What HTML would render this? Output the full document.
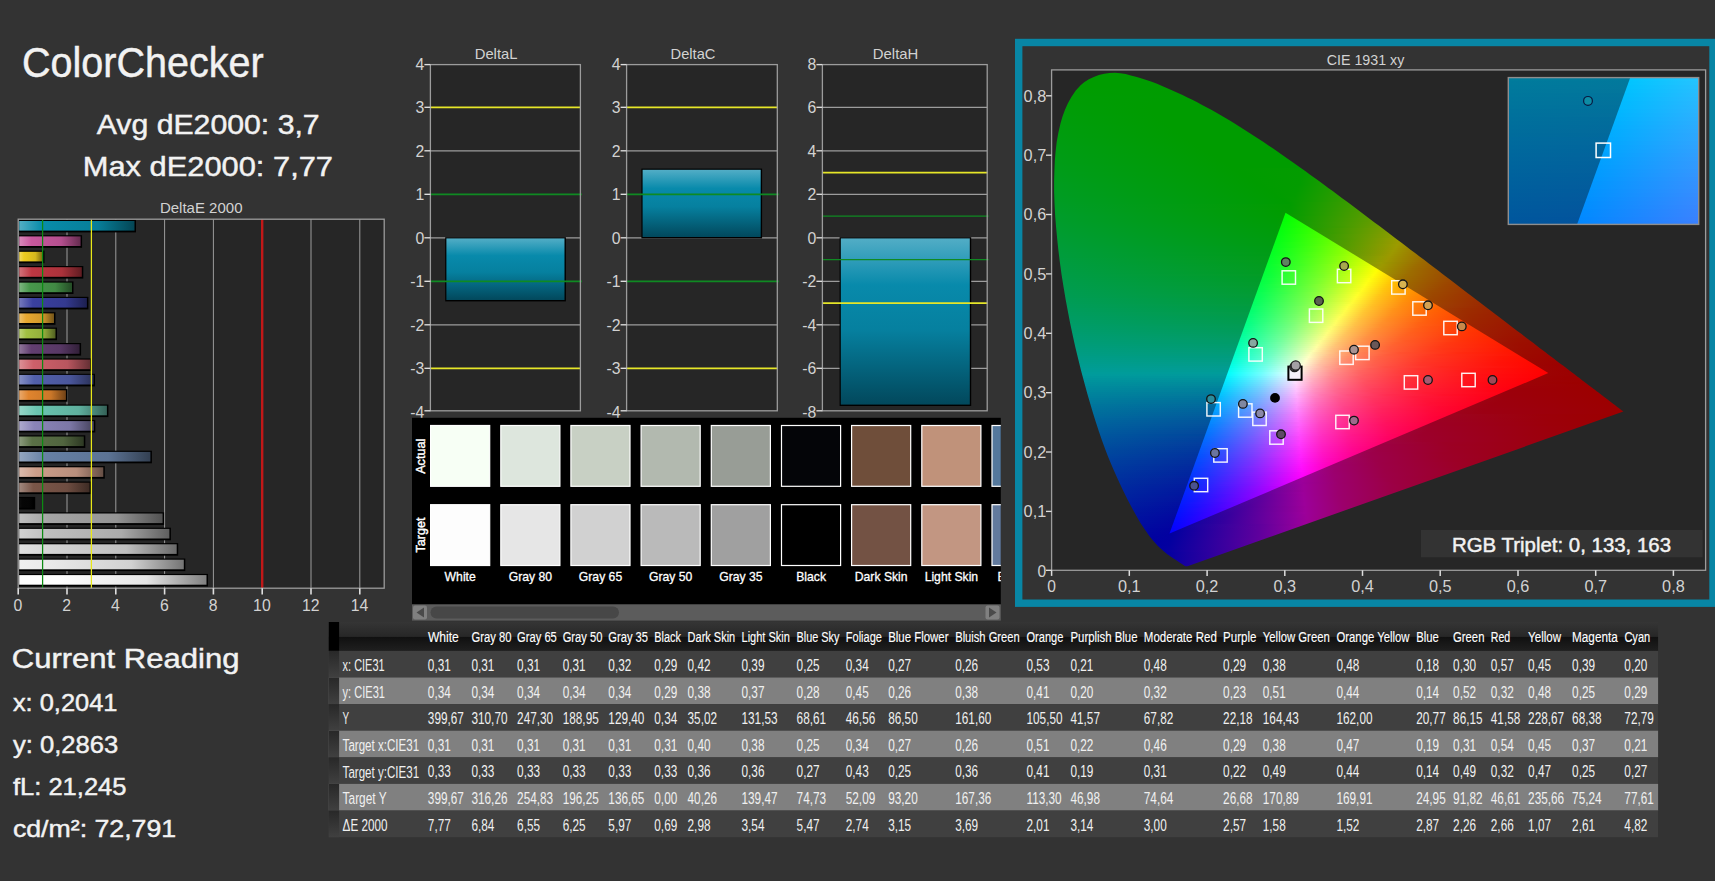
<!DOCTYPE html>
<html lang="en"><head><meta charset="utf-8"><title>ColorChecker</title>
<style>html,body{margin:0;padding:0;background:#333333;width:1715px;height:881px;overflow:hidden}svg text{white-space:pre}</style>
</head><body>
<svg width="1715" height="881" viewBox="0 0 1715 881" font-family='"Liberation Sans", sans-serif' style="display:block">
<defs>
<linearGradient id="b0" x1="0" x2="1" y1="0" y2="0"><stop offset="0" stop-color="#52aec4"/><stop offset=".2" stop-color="#088caa"/><stop offset=".68" stop-color="#077e99"/><stop offset="1" stop-color="#044655"/></linearGradient>
<linearGradient id="b1" x1="0" x2="1" y1="0" y2="0"><stop offset="0" stop-color="#d88abb"/><stop offset=".2" stop-color="#c8589e"/><stop offset=".68" stop-color="#b44f8e"/><stop offset="1" stop-color="#642c4f"/></linearGradient>
<linearGradient id="b2" x1="0" x2="1" y1="0" y2="0"><stop offset="0" stop-color="#f3db63"/><stop offset=".2" stop-color="#eecc20"/><stop offset=".68" stop-color="#d6b81d"/><stop offset="1" stop-color="#776610"/></linearGradient>
<linearGradient id="b3" x1="0" x2="1" y1="0" y2="0"><stop offset="0" stop-color="#d2737b"/><stop offset=".2" stop-color="#be3742"/><stop offset=".68" stop-color="#ab323b"/><stop offset="1" stop-color="#5f1c21"/></linearGradient>
<linearGradient id="b4" x1="0" x2="1" y1="0" y2="0"><stop offset="0" stop-color="#7fb782"/><stop offset=".2" stop-color="#48984c"/><stop offset=".68" stop-color="#418944"/><stop offset="1" stop-color="#244c26"/></linearGradient>
<linearGradient id="b5" x1="0" x2="1" y1="0" y2="0"><stop offset="0" stop-color="#7579bc"/><stop offset=".2" stop-color="#3a40a0"/><stop offset=".68" stop-color="#343a90"/><stop offset="1" stop-color="#1d2050"/></linearGradient>
<linearGradient id="b6" x1="0" x2="1" y1="0" y2="0"><stop offset="0" stop-color="#efc26e"/><stop offset=".2" stop-color="#e8a830"/><stop offset=".68" stop-color="#d1972b"/><stop offset="1" stop-color="#745418"/></linearGradient>
<linearGradient id="b7" x1="0" x2="1" y1="0" y2="0"><stop offset="0" stop-color="#bed37b"/><stop offset=".2" stop-color="#a2c042"/><stop offset=".68" stop-color="#92ad3b"/><stop offset="1" stop-color="#516021"/></linearGradient>
<linearGradient id="b8" x1="0" x2="1" y1="0" y2="0"><stop offset="0" stop-color="#91789b"/><stop offset=".2" stop-color="#623e70"/><stop offset=".68" stop-color="#583865"/><stop offset="1" stop-color="#311f38"/></linearGradient>
<linearGradient id="b9" x1="0" x2="1" y1="0" y2="0"><stop offset="0" stop-color="#dc9097"/><stop offset=".2" stop-color="#cd606a"/><stop offset=".68" stop-color="#b8565f"/><stop offset="1" stop-color="#663035"/></linearGradient>
<linearGradient id="b10" x1="0" x2="1" y1="0" y2="0"><stop offset="0" stop-color="#8690c5"/><stop offset=".2" stop-color="#5260ac"/><stop offset=".68" stop-color="#4a569b"/><stop offset="1" stop-color="#293056"/></linearGradient>
<linearGradient id="b11" x1="0" x2="1" y1="0" y2="0"><stop offset="0" stop-color="#e9a96d"/><stop offset=".2" stop-color="#e0842e"/><stop offset=".68" stop-color="#ca7729"/><stop offset="1" stop-color="#704217"/></linearGradient>
<linearGradient id="b12" x1="0" x2="1" y1="0" y2="0"><stop offset="0" stop-color="#97d6c8"/><stop offset=".2" stop-color="#6ac4b0"/><stop offset=".68" stop-color="#5fb09e"/><stop offset="1" stop-color="#356258"/></linearGradient>
<linearGradient id="b13" x1="0" x2="1" y1="0" y2="0"><stop offset="0" stop-color="#ada9cd"/><stop offset=".2" stop-color="#8a84b8"/><stop offset=".68" stop-color="#7c77a6"/><stop offset="1" stop-color="#45425c"/></linearGradient>
<linearGradient id="b14" x1="0" x2="1" y1="0" y2="0"><stop offset="0" stop-color="#8c9b7e"/><stop offset=".2" stop-color="#5a7046"/><stop offset=".68" stop-color="#51653f"/><stop offset="1" stop-color="#2d3823"/></linearGradient>
<linearGradient id="b15" x1="0" x2="1" y1="0" y2="0"><stop offset="0" stop-color="#94a6bf"/><stop offset=".2" stop-color="#6680a4"/><stop offset=".68" stop-color="#5c7394"/><stop offset="1" stop-color="#334052"/></linearGradient>
<linearGradient id="b16" x1="0" x2="1" y1="0" y2="0"><stop offset="0" stop-color="#dbbbad"/><stop offset=".2" stop-color="#cc9e8a"/><stop offset=".68" stop-color="#b88e7c"/><stop offset="1" stop-color="#664f45"/></linearGradient>
<linearGradient id="b17" x1="0" x2="1" y1="0" y2="0"><stop offset="0" stop-color="#a2897f"/><stop offset=".2" stop-color="#7a5648"/><stop offset=".68" stop-color="#6e4d41"/><stop offset="1" stop-color="#3d2b24"/></linearGradient>
<linearGradient id="b18" x1="0" x2="1" y1="0" y2="0"><stop offset="0" stop-color="#0e0e0e"/><stop offset=".2" stop-color="#060606"/><stop offset=".68" stop-color="#050505"/><stop offset="1" stop-color="#000000"/></linearGradient>
<linearGradient id="b19" x1="0" x2="1" y1="0" y2="0"><stop offset="0" stop-color="#c0c0c0"/><stop offset=".2" stop-color="#a5a5a5"/><stop offset=".68" stop-color="#949494"/><stop offset="1" stop-color="#525252"/></linearGradient>
<linearGradient id="b20" x1="0" x2="1" y1="0" y2="0"><stop offset="0" stop-color="#d2d2d2"/><stop offset=".2" stop-color="#bebebe"/><stop offset=".68" stop-color="#ababab"/><stop offset="1" stop-color="#5f5f5f"/></linearGradient>
<linearGradient id="b21" x1="0" x2="1" y1="0" y2="0"><stop offset="0" stop-color="#e1e1e1"/><stop offset=".2" stop-color="#d4d4d4"/><stop offset=".68" stop-color="#bfbfbf"/><stop offset="1" stop-color="#6a6a6a"/></linearGradient>
<linearGradient id="b22" x1="0" x2="1" y1="0" y2="0"><stop offset="0" stop-color="#efefef"/><stop offset=".2" stop-color="#e8e8e8"/><stop offset=".68" stop-color="#d1d1d1"/><stop offset="1" stop-color="#747474"/></linearGradient>
<linearGradient id="b23" x1="0" x2="1" y1="0" y2="0"><stop offset="0" stop-color="#ffffff"/><stop offset=".2" stop-color="#ffffff"/><stop offset=".68" stop-color="#e6e6e6"/><stop offset="1" stop-color="#808080"/></linearGradient>
<linearGradient id="gDeltaL" x1="0" x2="0" y1="0" y2="1"><stop offset="0" stop-color="#52adc6"/><stop offset=".28" stop-color="#088aab"/><stop offset=".55" stop-color="#06809f"/><stop offset="1" stop-color="#02485c"/></linearGradient>
<linearGradient id="gDeltaC" x1="0" x2="0" y1="0" y2="1"><stop offset="0" stop-color="#52adc6"/><stop offset=".28" stop-color="#088aab"/><stop offset=".55" stop-color="#06809f"/><stop offset="1" stop-color="#02485c"/></linearGradient>
<linearGradient id="gDeltaH" x1="0" x2="0" y1="0" y2="1"><stop offset="0" stop-color="#52adc6"/><stop offset=".28" stop-color="#088aab"/><stop offset=".55" stop-color="#06809f"/><stop offset="1" stop-color="#02485c"/></linearGradient>
<linearGradient id="c0" gradientUnits="userSpaceOnUse" x1="1102" x2="1126"><stop offset="0" stop-color="#009c00"/><stop offset="1" stop-color="#009c00"/></linearGradient>
<linearGradient id="c1" gradientUnits="userSpaceOnUse" x1="1095" x2="1135"><stop offset="0" stop-color="#009c00"/><stop offset="1" stop-color="#009c00"/></linearGradient>
<linearGradient id="c2" gradientUnits="userSpaceOnUse" x1="1090" x2="1142"><stop offset="0" stop-color="#009c00"/><stop offset="1" stop-color="#009c00"/></linearGradient>
<linearGradient id="c3" gradientUnits="userSpaceOnUse" x1="1086" x2="1148"><stop offset="0" stop-color="#009c00"/><stop offset="1" stop-color="#009c00"/></linearGradient>
<linearGradient id="c4" gradientUnits="userSpaceOnUse" x1="1083" x2="1154"><stop offset="0" stop-color="#009c00"/><stop offset="1" stop-color="#009c00"/></linearGradient>
<linearGradient id="c5" gradientUnits="userSpaceOnUse" x1="1081" x2="1159"><stop offset="0" stop-color="#009c00"/><stop offset="1" stop-color="#009c00"/></linearGradient>
<linearGradient id="c6" gradientUnits="userSpaceOnUse" x1="1078" x2="1164"><stop offset="0" stop-color="#009c00"/><stop offset="1" stop-color="#009c00"/></linearGradient>
<linearGradient id="c7" gradientUnits="userSpaceOnUse" x1="1077" x2="1168"><stop offset="0" stop-color="#009c00"/><stop offset="1" stop-color="#009c00"/></linearGradient>
<linearGradient id="c8" gradientUnits="userSpaceOnUse" x1="1075" x2="1173"><stop offset="0" stop-color="#009c01"/><stop offset="1" stop-color="#009c00"/></linearGradient>
<linearGradient id="c9" gradientUnits="userSpaceOnUse" x1="1073" x2="1177"><stop offset="0" stop-color="#009c02"/><stop offset="1" stop-color="#009c00"/></linearGradient>
<linearGradient id="c10" gradientUnits="userSpaceOnUse" x1="1072" x2="1182"><stop offset="0" stop-color="#009c02"/><stop offset="1" stop-color="#009c00"/></linearGradient>
<linearGradient id="c11" gradientUnits="userSpaceOnUse" x1="1071" x2="1186"><stop offset="0" stop-color="#009c03"/><stop offset="1" stop-color="#009c00"/></linearGradient>
<linearGradient id="c12" gradientUnits="userSpaceOnUse" x1="1069" x2="1190"><stop offset="0" stop-color="#009c04"/><stop offset="1" stop-color="#009c00"/></linearGradient>
<linearGradient id="c13" gradientUnits="userSpaceOnUse" x1="1068" x2="1194"><stop offset="0" stop-color="#009c04"/><stop offset=".844" stop-color="#009c00"/><stop offset="1" stop-color="#009c00"/></linearGradient>
<linearGradient id="c14" gradientUnits="userSpaceOnUse" x1="1067" x2="1198"><stop offset="0" stop-color="#009c05"/><stop offset=".712" stop-color="#009c00"/><stop offset="1" stop-color="#009c00"/></linearGradient>
<linearGradient id="c15" gradientUnits="userSpaceOnUse" x1="1066" x2="1202"><stop offset="0" stop-color="#009c05"/><stop offset=".652" stop-color="#009c00"/><stop offset="1" stop-color="#009c00"/></linearGradient>
<linearGradient id="c16" gradientUnits="userSpaceOnUse" x1="1065" x2="1206"><stop offset="0" stop-color="#009c06"/><stop offset=".62" stop-color="#009c00"/><stop offset="1" stop-color="#009c00"/></linearGradient>
<linearGradient id="c17" gradientUnits="userSpaceOnUse" x1="1064" x2="1209"><stop offset="0" stop-color="#009c07"/><stop offset=".603" stop-color="#009c00"/><stop offset="1" stop-color="#009c00"/></linearGradient>
<linearGradient id="c18" gradientUnits="userSpaceOnUse" x1="1063" x2="1213"><stop offset="0" stop-color="#009c07"/><stop offset=".592" stop-color="#009c00"/><stop offset="1" stop-color="#009c00"/></linearGradient>
<linearGradient id="c19" gradientUnits="userSpaceOnUse" x1="1063" x2="1217"><stop offset="0" stop-color="#009c08"/><stop offset=".59" stop-color="#009c00"/><stop offset="1" stop-color="#009c00"/></linearGradient>
<linearGradient id="c20" gradientUnits="userSpaceOnUse" x1="1062" x2="1220"><stop offset="0" stop-color="#009c08"/><stop offset=".588" stop-color="#009c00"/><stop offset="1" stop-color="#009c00"/></linearGradient>
<linearGradient id="c21" gradientUnits="userSpaceOnUse" x1="1061" x2="1224"><stop offset="0" stop-color="#009c09"/><stop offset=".585" stop-color="#009c00"/><stop offset="1" stop-color="#009c00"/></linearGradient>
<linearGradient id="c22" gradientUnits="userSpaceOnUse" x1="1061" x2="1227"><stop offset="0" stop-color="#009c0a"/><stop offset=".595" stop-color="#009c00"/><stop offset="1" stop-color="#009c00"/></linearGradient>
<linearGradient id="c23" gradientUnits="userSpaceOnUse" x1="1060" x2="1230"><stop offset="0" stop-color="#009c0a"/><stop offset=".593" stop-color="#009c00"/><stop offset="1" stop-color="#009c00"/></linearGradient>
<linearGradient id="c24" gradientUnits="userSpaceOnUse" x1="1059" x2="1234"><stop offset="0" stop-color="#009c0b"/><stop offset=".602" stop-color="#009c00"/><stop offset="1" stop-color="#009c00"/></linearGradient>
<linearGradient id="c25" gradientUnits="userSpaceOnUse" x1="1059" x2="1237"><stop offset="0" stop-color="#009c0b"/><stop offset=".6" stop-color="#009c00"/><stop offset="1" stop-color="#009c00"/></linearGradient>
<linearGradient id="c26" gradientUnits="userSpaceOnUse" x1="1058" x2="1240"><stop offset="0" stop-color="#009c0c"/><stop offset=".609" stop-color="#009c00"/><stop offset="1" stop-color="#009c00"/></linearGradient>
<linearGradient id="c27" gradientUnits="userSpaceOnUse" x1="1058" x2="1243"><stop offset="0" stop-color="#009c0d"/><stop offset=".613" stop-color="#009c00"/><stop offset="1" stop-color="#009c00"/></linearGradient>
<linearGradient id="c28" gradientUnits="userSpaceOnUse" x1="1057" x2="1247"><stop offset="0" stop-color="#009c0d"/><stop offset=".615" stop-color="#009c00"/><stop offset="1" stop-color="#009c00"/></linearGradient>
<linearGradient id="c29" gradientUnits="userSpaceOnUse" x1="1057" x2="1250"><stop offset="0" stop-color="#009c0e"/><stop offset=".629" stop-color="#009c00"/><stop offset="1" stop-color="#009c00"/></linearGradient>
<linearGradient id="c30" gradientUnits="userSpaceOnUse" x1="1057" x2="1253"><stop offset="0" stop-color="#009c0e"/><stop offset=".626" stop-color="#009c00"/><stop offset="1" stop-color="#009c00"/></linearGradient>
<linearGradient id="c31" gradientUnits="userSpaceOnUse" x1="1056" x2="1256"><stop offset="0" stop-color="#009c0f"/><stop offset=".634" stop-color="#009c00"/><stop offset="1" stop-color="#009c00"/></linearGradient>
<linearGradient id="c32" gradientUnits="userSpaceOnUse" x1="1056" x2="1259"><stop offset="0" stop-color="#009c0f"/><stop offset=".637" stop-color="#009c00"/><stop offset="1" stop-color="#009c00"/></linearGradient>
<linearGradient id="c33" gradientUnits="userSpaceOnUse" x1="1056" x2="1262"><stop offset="0" stop-color="#009c10"/><stop offset=".644" stop-color="#009c00"/><stop offset="1" stop-color="#009c00"/></linearGradient>
<linearGradient id="c34" gradientUnits="userSpaceOnUse" x1="1055" x2="1265"><stop offset="0" stop-color="#009c11"/><stop offset=".651" stop-color="#009c00"/><stop offset="1" stop-color="#009c00"/></linearGradient>
<linearGradient id="c35" gradientUnits="userSpaceOnUse" x1="1055" x2="1268"><stop offset="0" stop-color="#009c11"/><stop offset=".654" stop-color="#009c00"/><stop offset="1" stop-color="#009c00"/></linearGradient>
<linearGradient id="c36" gradientUnits="userSpaceOnUse" x1="1055" x2="1271"><stop offset="0" stop-color="#009c12"/><stop offset=".661" stop-color="#009c00"/><stop offset="1" stop-color="#009c00"/></linearGradient>
<linearGradient id="c37" gradientUnits="userSpaceOnUse" x1="1054" x2="1274"><stop offset="0" stop-color="#009c13"/><stop offset=".667" stop-color="#009c00"/><stop offset="1" stop-color="#009c00"/></linearGradient>
<linearGradient id="c38" gradientUnits="userSpaceOnUse" x1="1054" x2="1277"><stop offset="0" stop-color="#009c13"/><stop offset=".67" stop-color="#009c00"/><stop offset="1" stop-color="#009c00"/></linearGradient>
<linearGradient id="c39" gradientUnits="userSpaceOnUse" x1="1054" x2="1280"><stop offset="0" stop-color="#009c14"/><stop offset=".675" stop-color="#009c00"/><stop offset="1" stop-color="#009c00"/></linearGradient>
<linearGradient id="c40" gradientUnits="userSpaceOnUse" x1="1054" x2="1283"><stop offset="0" stop-color="#009c14"/><stop offset=".678" stop-color="#009c00"/><stop offset="1" stop-color="#009c00"/></linearGradient>
<linearGradient id="c41" gradientUnits="userSpaceOnUse" x1="1054" x2="1285"><stop offset="0" stop-color="#009c15"/><stop offset=".69" stop-color="#009c00"/><stop offset="1" stop-color="#009c00"/></linearGradient>
<linearGradient id="c42" gradientUnits="userSpaceOnUse" x1="1054" x2="1288"><stop offset="0" stop-color="#009c15"/><stop offset=".695" stop-color="#009c00"/><stop offset="1" stop-color="#009c00"/></linearGradient>
<linearGradient id="c43" gradientUnits="userSpaceOnUse" x1="1053" x2="1291"><stop offset="0" stop-color="#009c16"/><stop offset=".7" stop-color="#009c00"/><stop offset="1" stop-color="#009c00"/></linearGradient>
<linearGradient id="c44" gradientUnits="userSpaceOnUse" x1="1053" x2="1294"><stop offset="0" stop-color="#009c17"/><stop offset=".702" stop-color="#009c00"/><stop offset="1" stop-color="#009c00"/></linearGradient>
<linearGradient id="c45" gradientUnits="userSpaceOnUse" x1="1053" x2="1297"><stop offset="0" stop-color="#009c17"/><stop offset=".707" stop-color="#009c00"/><stop offset="1" stop-color="#009c00"/></linearGradient>
<linearGradient id="c46" gradientUnits="userSpaceOnUse" x1="1053" x2="1300"><stop offset="0" stop-color="#009c18"/><stop offset=".71" stop-color="#009c00"/><stop offset="1" stop-color="#009c00"/></linearGradient>
<linearGradient id="c47" gradientUnits="userSpaceOnUse" x1="1053" x2="1302"><stop offset="0" stop-color="#009c19"/><stop offset=".72" stop-color="#009c00"/><stop offset="1" stop-color="#009c00"/></linearGradient>
<linearGradient id="c48" gradientUnits="userSpaceOnUse" x1="1053" x2="1305"><stop offset="0" stop-color="#009c19"/><stop offset=".717" stop-color="#009c00"/><stop offset="1" stop-color="#039c00"/></linearGradient>
<linearGradient id="c49" gradientUnits="userSpaceOnUse" x1="1053" x2="1308"><stop offset="0" stop-color="#009c1a"/><stop offset=".727" stop-color="#009c00"/><stop offset=".984" stop-color="#039c00"/><stop offset="1" stop-color="#069c00"/></linearGradient>
<linearGradient id="c50" gradientUnits="userSpaceOnUse" x1="1053" x2="1311"><stop offset="0" stop-color="#009c1b"/><stop offset=".731" stop-color="#009c00"/><stop offset=".969" stop-color="#039c00"/><stop offset="1" stop-color="#099c00"/></linearGradient>
<linearGradient id="c51" gradientUnits="userSpaceOnUse" x1="1053" x2="1313"><stop offset="0" stop-color="#009c1b"/><stop offset=".733" stop-color="#009c00"/><stop offset=".962" stop-color="#039c00"/><stop offset="1" stop-color="#0b9c00"/></linearGradient>
<linearGradient id="c52" gradientUnits="userSpaceOnUse" x1="1053" x2="1316"><stop offset="0" stop-color="#009c1c"/><stop offset=".735" stop-color="#009c00"/><stop offset=".947" stop-color="#039c00"/><stop offset="1" stop-color="#0f9c00"/></linearGradient>
<linearGradient id="c53" gradientUnits="userSpaceOnUse" x1="1053" x2="1319"><stop offset="0" stop-color="#009c1d"/><stop offset=".739" stop-color="#009c00"/><stop offset=".933" stop-color="#039c00"/><stop offset="1" stop-color="#129c00"/></linearGradient>
<linearGradient id="c54" gradientUnits="userSpaceOnUse" x1="1053" x2="1322"><stop offset="0" stop-color="#009c1d"/><stop offset=".748" stop-color="#009c00"/><stop offset=".919" stop-color="#039c00"/><stop offset="1" stop-color="#159c00"/></linearGradient>
<linearGradient id="c55" gradientUnits="userSpaceOnUse" x1="1053" x2="1324"><stop offset="0" stop-color="#009c1e"/><stop offset=".75" stop-color="#009c00"/><stop offset=".912" stop-color="#039c00"/><stop offset="1" stop-color="#189c00"/></linearGradient>
<linearGradient id="c56" gradientUnits="userSpaceOnUse" x1="1053" x2="1327"><stop offset="0" stop-color="#009c1f"/><stop offset=".754" stop-color="#009c00"/><stop offset=".899" stop-color="#039c00"/><stop offset="1" stop-color="#1b9c00"/></linearGradient>
<linearGradient id="c57" gradientUnits="userSpaceOnUse" x1="1053" x2="1330"><stop offset="0" stop-color="#009c1f"/><stop offset=".755" stop-color="#009c00"/><stop offset=".885" stop-color="#039c00"/><stop offset="1" stop-color="#1f9c00"/></linearGradient>
<linearGradient id="c58" gradientUnits="userSpaceOnUse" x1="1053" x2="1333"><stop offset="0" stop-color="#009c20"/><stop offset=".759" stop-color="#009c00"/><stop offset=".872" stop-color="#039c00"/><stop offset="1" stop-color="#229c00"/></linearGradient>
<linearGradient id="c59" gradientUnits="userSpaceOnUse" x1="1053" x2="1335"><stop offset="0" stop-color="#009c21"/><stop offset=".768" stop-color="#009c00"/><stop offset=".866" stop-color="#039c00"/><stop offset="1" stop-color="#259c00"/></linearGradient>
<linearGradient id="c60" gradientUnits="userSpaceOnUse" x1="1053" x2="1338"><stop offset="0" stop-color="#009c22"/><stop offset=".769" stop-color="#009c00"/><stop offset=".853" stop-color="#039c00"/><stop offset="1" stop-color="#299c00"/></linearGradient>
<linearGradient id="c61" gradientUnits="userSpaceOnUse" x1="1053" x2="1341"><stop offset="0" stop-color="#009c22"/><stop offset=".772" stop-color="#009c00"/><stop offset=".841" stop-color="#039c00"/><stop offset="1" stop-color="#2d9c00"/></linearGradient>
<linearGradient id="c62" gradientUnits="userSpaceOnUse" x1="1053" x2="1343"><stop offset="0" stop-color="#009c23"/><stop offset=".774" stop-color="#009c00"/><stop offset=".836" stop-color="#049c00"/><stop offset="1" stop-color="#309c00"/></linearGradient>
<linearGradient id="c63" gradientUnits="userSpaceOnUse" x1="1053" x2="1346"><stop offset="0" stop-color="#009c24"/><stop offset=".782" stop-color="#009c00"/><stop offset=".83" stop-color="#059c00"/><stop offset="1" stop-color="#349c00"/></linearGradient>
<linearGradient id="c64" gradientUnits="userSpaceOnUse" x1="1053" x2="1349"><stop offset="0" stop-color="#009c24"/><stop offset=".785" stop-color="#009c00"/><stop offset=".866" stop-color="#119c00"/><stop offset="1" stop-color="#389c00"/></linearGradient>
<linearGradient id="c65" gradientUnits="userSpaceOnUse" x1="1053" x2="1352"><stop offset="0" stop-color="#009c25"/><stop offset=".787" stop-color="#009c00"/><stop offset="1" stop-color="#3d9c00"/></linearGradient>
<linearGradient id="c66" gradientUnits="userSpaceOnUse" x1="1053" x2="1354"><stop offset="0" stop-color="#009c26"/><stop offset=".788" stop-color="#029c00"/><stop offset="1" stop-color="#409c00"/></linearGradient>
<linearGradient id="c67" gradientUnits="userSpaceOnUse" x1="1053" x2="1357"><stop offset="0" stop-color="#009c27"/><stop offset=".778" stop-color="#029c00"/><stop offset="1" stop-color="#449c00"/></linearGradient>
<linearGradient id="c68" gradientUnits="userSpaceOnUse" x1="1053" x2="1360"><stop offset="0" stop-color="#009c28"/><stop offset=".773" stop-color="#039c00"/><stop offset="1" stop-color="#499c00"/></linearGradient>
<linearGradient id="c69" gradientUnits="userSpaceOnUse" x1="1053" x2="1362"><stop offset="0" stop-color="#009c28"/><stop offset=".735" stop-color="#009c01"/><stop offset=".774" stop-color="#059c00"/><stop offset="1" stop-color="#4d9c00"/></linearGradient>
<linearGradient id="c70" gradientUnits="userSpaceOnUse" x1="1053" x2="1365"><stop offset="0" stop-color="#009c29"/><stop offset=".726" stop-color="#009c02"/><stop offset=".764" stop-color="#059c00"/><stop offset="1" stop-color="#529c00"/></linearGradient>
<linearGradient id="c71" gradientUnits="userSpaceOnUse" x1="1054" x2="1368"><stop offset="0" stop-color="#009c2a"/><stop offset=".722" stop-color="#009c02"/><stop offset=".791" stop-color="#109c00"/><stop offset="1" stop-color="#579c00"/></linearGradient>
<linearGradient id="c72" gradientUnits="userSpaceOnUse" x1="1054" x2="1370"><stop offset="0" stop-color="#009c2b"/><stop offset=".711" stop-color="#009c03"/><stop offset=".755" stop-color="#089c00"/><stop offset="1" stop-color="#5a9c00"/></linearGradient>
<linearGradient id="c73" gradientUnits="userSpaceOnUse" x1="1054" x2="1373"><stop offset="0" stop-color="#009c2b"/><stop offset=".706" stop-color="#009c04"/><stop offset=".769" stop-color="#0f9c00"/><stop offset="1" stop-color="#609c00"/></linearGradient>
<linearGradient id="c74" gradientUnits="userSpaceOnUse" x1="1054" x2="1375"><stop offset="0" stop-color="#009c2c"/><stop offset=".696" stop-color="#009c05"/><stop offset=".739" stop-color="#089c02"/><stop offset=".981" stop-color="#5c9c00"/><stop offset="1" stop-color="#649c00"/></linearGradient>
<linearGradient id="c75" gradientUnits="userSpaceOnUse" x1="1054" x2="1378"><stop offset="0" stop-color="#009c2d"/><stop offset=".687" stop-color="#009c06"/><stop offset=".73" stop-color="#089c03"/><stop offset=".969" stop-color="#5d9c00"/><stop offset="1" stop-color="#699c00"/></linearGradient>
<linearGradient id="c76" gradientUnits="userSpaceOnUse" x1="1054" x2="1381"><stop offset="0" stop-color="#009c2e"/><stop offset=".683" stop-color="#009c07"/><stop offset=".75" stop-color="#119c02"/><stop offset=".982" stop-color="#679c00"/><stop offset="1" stop-color="#6f9c00"/></linearGradient>
<linearGradient id="c77" gradientUnits="userSpaceOnUse" x1="1054" x2="1383"><stop offset="0" stop-color="#009c2f"/><stop offset=".673" stop-color="#009c08"/><stop offset=".715" stop-color="#099c05"/><stop offset=".867" stop-color="#3d9c00"/><stop offset="1" stop-color="#749c00"/></linearGradient>
<linearGradient id="c78" gradientUnits="userSpaceOnUse" x1="1055" x2="1386"><stop offset="0" stop-color="#009c30"/><stop offset=".669" stop-color="#009c09"/><stop offset=".783" stop-color="#239c00"/><stop offset="1" stop-color="#7a9c00"/></linearGradient>
<linearGradient id="c79" gradientUnits="userSpaceOnUse" x1="1055" x2="1389"><stop offset="0" stop-color="#009c30"/><stop offset=".661" stop-color="#009c0a"/><stop offset=".78" stop-color="#259c00"/><stop offset=".994" stop-color="#7d9c00"/><stop offset="1" stop-color="#809c00"/></linearGradient>
<linearGradient id="c80" gradientUnits="userSpaceOnUse" x1="1055" x2="1391"><stop offset="0" stop-color="#009c31"/><stop offset=".657" stop-color="#009c0b"/><stop offset=".828" stop-color="#3a9c00"/><stop offset="1" stop-color="#859c00"/></linearGradient>
<linearGradient id="c81" gradientUnits="userSpaceOnUse" x1="1055" x2="1394"><stop offset="0" stop-color="#009c32"/><stop offset=".647" stop-color="#009c0c"/><stop offset=".776" stop-color="#2a9c01"/><stop offset=".982" stop-color="#839c00"/><stop offset="1" stop-color="#8c9c00"/></linearGradient>
<linearGradient id="c82" gradientUnits="userSpaceOnUse" x1="1055" x2="1397"><stop offset="0" stop-color="#009c33"/><stop offset=".64" stop-color="#009c0d"/><stop offset=".779" stop-color="#2f9c01"/><stop offset=".977" stop-color="#869c00"/><stop offset="1" stop-color="#929c00"/></linearGradient>
<linearGradient id="c83" gradientUnits="userSpaceOnUse" x1="1056" x2="1399"><stop offset="0" stop-color="#009c34"/><stop offset=".64" stop-color="#009c0e"/><stop offset=".837" stop-color="#4a9c00"/><stop offset="1" stop-color="#989c00"/></linearGradient>
<linearGradient id="c84" gradientUnits="userSpaceOnUse" x1="1056" x2="1402"><stop offset="0" stop-color="#009c35"/><stop offset=".632" stop-color="#009c0f"/><stop offset=".839" stop-color="#509c00"/><stop offset=".994" stop-color="#9c9b00"/><stop offset="1" stop-color="#9c9800"/></linearGradient>
<linearGradient id="c85" gradientUnits="userSpaceOnUse" x1="1056" x2="1405"><stop offset="0" stop-color="#009c36"/><stop offset=".623" stop-color="#009c10"/><stop offset=".817" stop-color="#4b9c00"/><stop offset=".983" stop-color="#9c9a00"/><stop offset="1" stop-color="#9c9100"/></linearGradient>
<linearGradient id="c86" gradientUnits="userSpaceOnUse" x1="1056" x2="1407"><stop offset="0" stop-color="#009c37"/><stop offset=".619" stop-color="#009c11"/><stop offset=".824" stop-color="#519c00"/><stop offset=".972" stop-color="#9c9b00"/><stop offset="1" stop-color="#9c8c00"/></linearGradient>
<linearGradient id="c87" gradientUnits="userSpaceOnUse" x1="1056" x2="1410"><stop offset="0" stop-color="#009c38"/><stop offset=".612" stop-color="#009c13"/><stop offset=".815" stop-color="#529c00"/><stop offset=".961" stop-color="#9c9a00"/><stop offset="1" stop-color="#9c8600"/></linearGradient>
<linearGradient id="c88" gradientUnits="userSpaceOnUse" x1="1057" x2="1413"><stop offset="0" stop-color="#009c39"/><stop offset=".603" stop-color="#009c14"/><stop offset=".799" stop-color="#4f9c01"/><stop offset=".95" stop-color="#9c9900"/><stop offset="1" stop-color="#9c8000"/></linearGradient>
<linearGradient id="c89" gradientUnits="userSpaceOnUse" x1="1057" x2="1415"><stop offset="0" stop-color="#009c3a"/><stop offset=".6" stop-color="#009c15"/><stop offset=".8" stop-color="#549c01"/><stop offset=".939" stop-color="#9c9a00"/><stop offset="1" stop-color="#9c7c00"/></linearGradient>
<linearGradient id="c90" gradientUnits="userSpaceOnUse" x1="1057" x2="1418"><stop offset="0" stop-color="#009c3b"/><stop offset=".597" stop-color="#019c16"/><stop offset=".796" stop-color="#569c02"/><stop offset=".928" stop-color="#9c9900"/><stop offset="1" stop-color="#9c7600"/></linearGradient>
<linearGradient id="c91" gradientUnits="userSpaceOnUse" x1="1057" x2="1420"><stop offset="0" stop-color="#009c3c"/><stop offset=".588" stop-color="#009c17"/><stop offset=".786" stop-color="#559c04"/><stop offset=".918" stop-color="#9c9900"/><stop offset="1" stop-color="#9c7200"/></linearGradient>
<linearGradient id="c92" gradientUnits="userSpaceOnUse" x1="1058" x2="1423"><stop offset="0" stop-color="#009c3c"/><stop offset=".585" stop-color="#029c18"/><stop offset=".776" stop-color="#569c05"/><stop offset=".885" stop-color="#919c00"/><stop offset=".907" stop-color="#9c9800"/><stop offset="1" stop-color="#9c6d00"/></linearGradient>
<linearGradient id="c93" gradientUnits="userSpaceOnUse" x1="1058" x2="1426"><stop offset="0" stop-color="#009c3e"/><stop offset=".578" stop-color="#029c19"/><stop offset=".768" stop-color="#569c07"/><stop offset=".87" stop-color="#8f9c00"/><stop offset=".897" stop-color="#9c9700"/><stop offset=".995" stop-color="#9c6b00"/><stop offset="1" stop-color="#9c6900"/></linearGradient>
<linearGradient id="c94" gradientUnits="userSpaceOnUse" x1="1058" x2="1428"><stop offset="0" stop-color="#009c3f"/><stop offset=".575" stop-color="#039c1b"/><stop offset=".763" stop-color="#589c08"/><stop offset=".866" stop-color="#929c00"/><stop offset=".887" stop-color="#9c9800"/><stop offset=".984" stop-color="#9c6b00"/><stop offset="1" stop-color="#9c6500"/></linearGradient>
<linearGradient id="c95" gradientUnits="userSpaceOnUse" x1="1058" x2="1431"><stop offset="0" stop-color="#009c40"/><stop offset=".567" stop-color="#029c1c"/><stop offset=".754" stop-color="#589c09"/><stop offset=".866" stop-color="#999c00"/><stop offset=".973" stop-color="#9c6a00"/><stop offset="1" stop-color="#9c6100"/></linearGradient>
<linearGradient id="c96" gradientUnits="userSpaceOnUse" x1="1059" x2="1434"><stop offset="0" stop-color="#009c41"/><stop offset=".559" stop-color="#029c1e"/><stop offset=".739" stop-color="#569c0b"/><stop offset=".862" stop-color="#9c9900"/><stop offset=".952" stop-color="#9c6d00"/><stop offset="1" stop-color="#9c5d00"/></linearGradient>
<linearGradient id="c97" gradientUnits="userSpaceOnUse" x1="1059" x2="1436"><stop offset="0" stop-color="#009c42"/><stop offset=".556" stop-color="#039c1f"/><stop offset=".735" stop-color="#589c0d"/><stop offset=".852" stop-color="#9c9a00"/><stop offset=".942" stop-color="#9c6d00"/><stop offset="1" stop-color="#9c5a00"/></linearGradient>
<linearGradient id="c98" gradientUnits="userSpaceOnUse" x1="1059" x2="1439"><stop offset="0" stop-color="#009c43"/><stop offset=".55" stop-color="#039c20"/><stop offset=".728" stop-color="#589c0e"/><stop offset=".843" stop-color="#9c9900"/><stop offset=".932" stop-color="#9c6c00"/><stop offset="1" stop-color="#9c5600"/></linearGradient>
<linearGradient id="c99" gradientUnits="userSpaceOnUse" x1="1059" x2="1441"><stop offset="0" stop-color="#009c44"/><stop offset=".542" stop-color="#029c22"/><stop offset=".719" stop-color="#579c10"/><stop offset=".833" stop-color="#9c9a01"/><stop offset=".922" stop-color="#9c6c00"/><stop offset="1" stop-color="#9c5300"/></linearGradient>
<linearGradient id="c100" gradientUnits="userSpaceOnUse" x1="1060" x2="1444"><stop offset="0" stop-color="#009c45"/><stop offset=".534" stop-color="#019c23"/><stop offset=".705" stop-color="#559c12"/><stop offset=".824" stop-color="#9c9903"/><stop offset=".912" stop-color="#9c6c00"/><stop offset="1" stop-color="#9c5000"/></linearGradient>
<linearGradient id="c101" gradientUnits="userSpaceOnUse" x1="1060" x2="1447"><stop offset="0" stop-color="#009c46"/><stop offset=".531" stop-color="#039c25"/><stop offset=".701" stop-color="#589c13"/><stop offset=".809" stop-color="#9c9b05"/><stop offset=".892" stop-color="#9c6f00"/><stop offset="1" stop-color="#9c4c00"/></linearGradient>
<linearGradient id="c102" gradientUnits="userSpaceOnUse" x1="1060" x2="1449"><stop offset="0" stop-color="#009c47"/><stop offset=".523" stop-color="#019c26"/><stop offset=".692" stop-color="#569c15"/><stop offset=".805" stop-color="#9c9807"/><stop offset=".887" stop-color="#9c6d00"/><stop offset="1" stop-color="#9c4a00"/></linearGradient>
<linearGradient id="c103" gradientUnits="userSpaceOnUse" x1="1061" x2="1452"><stop offset="0" stop-color="#009c48"/><stop offset=".515" stop-color="#019c28"/><stop offset=".684" stop-color="#579c17"/><stop offset=".791" stop-color="#9c9b09"/><stop offset=".872" stop-color="#9c6e00"/><stop offset=".995" stop-color="#9c4800"/><stop offset="1" stop-color="#9c4600"/></linearGradient>
<linearGradient id="c104" gradientUnits="userSpaceOnUse" x1="1061" x2="1455"><stop offset="0" stop-color="#009c4a"/><stop offset=".51" stop-color="#019c29"/><stop offset=".672" stop-color="#559c19"/><stop offset=".783" stop-color="#9c9a0b"/><stop offset=".864" stop-color="#9c6d00"/><stop offset=".99" stop-color="#9c4600"/><stop offset="1" stop-color="#9c4300"/></linearGradient>
<linearGradient id="c105" gradientUnits="userSpaceOnUse" x1="1061" x2="1457"><stop offset="0" stop-color="#009c4b"/><stop offset=".508" stop-color="#029c2b"/><stop offset=".668" stop-color="#579c1b"/><stop offset=".774" stop-color="#9c9a0d"/><stop offset=".854" stop-color="#9c6d00"/><stop offset=".975" stop-color="#9c4700"/><stop offset="1" stop-color="#9c4100"/></linearGradient>
<linearGradient id="c106" gradientUnits="userSpaceOnUse" x1="1062" x2="1460"><stop offset="0" stop-color="#009c4c"/><stop offset=".5" stop-color="#029c2c"/><stop offset=".66" stop-color="#579c1c"/><stop offset=".765" stop-color="#9c990f"/><stop offset=".845" stop-color="#9c6c02"/><stop offset=".965" stop-color="#9c4600"/><stop offset="1" stop-color="#9c3e00"/></linearGradient>
<linearGradient id="c107" gradientUnits="userSpaceOnUse" x1="1062" x2="1462"><stop offset="0" stop-color="#009c4d"/><stop offset=".498" stop-color="#039c2e"/><stop offset=".657" stop-color="#599c1e"/><stop offset=".756" stop-color="#9c9a11"/><stop offset=".836" stop-color="#9c6d03"/><stop offset=".955" stop-color="#9c4600"/><stop offset="1" stop-color="#9c3c00"/></linearGradient>
<linearGradient id="c108" gradientUnits="userSpaceOnUse" x1="1062" x2="1465"><stop offset="0" stop-color="#009c4e"/><stop offset=".49" stop-color="#029c30"/><stop offset=".644" stop-color="#569c20"/><stop offset=".748" stop-color="#9c9913"/><stop offset=".827" stop-color="#9c6c05"/><stop offset=".936" stop-color="#9c4800"/><stop offset="1" stop-color="#9c3900"/></linearGradient>
<linearGradient id="c109" gradientUnits="userSpaceOnUse" x1="1063" x2="1468"><stop offset="0" stop-color="#009c50"/><stop offset=".483" stop-color="#029c31"/><stop offset=".635" stop-color="#569c22"/><stop offset=".734" stop-color="#9b9c16"/><stop offset=".813" stop-color="#9c6d07"/><stop offset=".911" stop-color="#9c4b00"/><stop offset="1" stop-color="#9c3700"/></linearGradient>
<linearGradient id="c110" gradientUnits="userSpaceOnUse" x1="1063" x2="1470"><stop offset="0" stop-color="#009c51"/><stop offset=".48" stop-color="#029c33"/><stop offset=".632" stop-color="#589c24"/><stop offset=".73" stop-color="#9c9917"/><stop offset=".804" stop-color="#9c6d08"/><stop offset=".907" stop-color="#9c4900"/><stop offset="1" stop-color="#9c3500"/></linearGradient>
<linearGradient id="c111" gradientUnits="userSpaceOnUse" x1="1063" x2="1473"><stop offset="0" stop-color="#009c52"/><stop offset=".476" stop-color="#039c35"/><stop offset=".621" stop-color="#569c26"/><stop offset=".718" stop-color="#9c9b1a"/><stop offset=".791" stop-color="#9c6e0a"/><stop offset=".903" stop-color="#9c4700"/><stop offset="1" stop-color="#9c3200"/></linearGradient>
<linearGradient id="c112" gradientUnits="userSpaceOnUse" x1="1064" x2="1476"><stop offset="0" stop-color="#009c53"/><stop offset=".469" stop-color="#029c36"/><stop offset=".614" stop-color="#569c28"/><stop offset=".71" stop-color="#9c9a1b"/><stop offset=".783" stop-color="#9c6d0c"/><stop offset=".894" stop-color="#9c4600"/><stop offset="1" stop-color="#9c3000"/></linearGradient>
<linearGradient id="c113" gradientUnits="userSpaceOnUse" x1="1064" x2="1478"><stop offset="0" stop-color="#009c55"/><stop offset=".462" stop-color="#019c39"/><stop offset=".606" stop-color="#559c2a"/><stop offset=".702" stop-color="#9c9b1e"/><stop offset=".774" stop-color="#9c6e0e"/><stop offset=".885" stop-color="#9c4600"/><stop offset="1" stop-color="#9c2e00"/></linearGradient>
<linearGradient id="c114" gradientUnits="userSpaceOnUse" x1="1064" x2="1481"><stop offset="0" stop-color="#009c56"/><stop offset=".459" stop-color="#029c3a"/><stop offset=".603" stop-color="#589c2c"/><stop offset=".694" stop-color="#9c9a20"/><stop offset=".766" stop-color="#9c6d0f"/><stop offset=".876" stop-color="#9c4500"/><stop offset="1" stop-color="#9c2c00"/></linearGradient>
<linearGradient id="c115" gradientUnits="userSpaceOnUse" x1="1065" x2="1483"><stop offset="0" stop-color="#009c57"/><stop offset=".452" stop-color="#029c3c"/><stop offset=".595" stop-color="#589c2e"/><stop offset=".686" stop-color="#9c9a22"/><stop offset=".752" stop-color="#9c6f12"/><stop offset=".857" stop-color="#9c4802"/><stop offset="1" stop-color="#9c2a00"/></linearGradient>
<linearGradient id="c116" gradientUnits="userSpaceOnUse" x1="1065" x2="1486"><stop offset="0" stop-color="#009c59"/><stop offset=".45" stop-color="#039c3e"/><stop offset=".588" stop-color="#579c30"/><stop offset=".678" stop-color="#9c9a25"/><stop offset=".744" stop-color="#9c6e13"/><stop offset=".848" stop-color="#9c4704"/><stop offset="1" stop-color="#9c2800"/></linearGradient>
<linearGradient id="c117" gradientUnits="userSpaceOnUse" x1="1065" x2="1489"><stop offset="0" stop-color="#009c5a"/><stop offset=".441" stop-color="#019c40"/><stop offset=".577" stop-color="#559c33"/><stop offset=".667" stop-color="#9b9c28"/><stop offset=".737" stop-color="#9c6d15"/><stop offset=".84" stop-color="#9c4605"/><stop offset=".977" stop-color="#9c2a00"/><stop offset="1" stop-color="#9c2600"/></linearGradient>
<linearGradient id="c118" gradientUnits="userSpaceOnUse" x1="1066" x2="1491"><stop offset="0" stop-color="#009c5c"/><stop offset=".437" stop-color="#019c42"/><stop offset=".573" stop-color="#579c35"/><stop offset=".662" stop-color="#9c9929"/><stop offset=".728" stop-color="#9c6e17"/><stop offset=".831" stop-color="#9c4606"/><stop offset=".944" stop-color="#9c2d00"/><stop offset="1" stop-color="#9c2500"/></linearGradient>
<linearGradient id="c119" gradientUnits="userSpaceOnUse" x1="1066" x2="1494"><stop offset="0" stop-color="#009c5d"/><stop offset=".433" stop-color="#019c44"/><stop offset=".563" stop-color="#549c37"/><stop offset=".651" stop-color="#9c9c2d"/><stop offset=".716" stop-color="#9c6f19"/><stop offset=".814" stop-color="#9c4808"/><stop offset=".93" stop-color="#9c2d00"/><stop offset="1" stop-color="#9c2300"/></linearGradient>
<linearGradient id="c120" gradientUnits="userSpaceOnUse" x1="1066" x2="1497"><stop offset="0" stop-color="#009c5f"/><stop offset=".431" stop-color="#039c46"/><stop offset=".56" stop-color="#579c39"/><stop offset=".644" stop-color="#9c9b2f"/><stop offset=".708" stop-color="#9c6e1b"/><stop offset=".806" stop-color="#9c4709"/><stop offset=".931" stop-color="#9c2b00"/><stop offset="1" stop-color="#9c2100"/></linearGradient>
<linearGradient id="c121" gradientUnits="userSpaceOnUse" x1="1067" x2="1499"><stop offset="0" stop-color="#009c60"/><stop offset=".424" stop-color="#029c48"/><stop offset=".553" stop-color="#579c3c"/><stop offset=".636" stop-color="#9c9b32"/><stop offset=".7" stop-color="#9c6e1d"/><stop offset=".797" stop-color="#9c470b"/><stop offset=".931" stop-color="#9c2900"/><stop offset="1" stop-color="#9c1f00"/></linearGradient>
<linearGradient id="c122" gradientUnits="userSpaceOnUse" x1="1067" x2="1502"><stop offset="0" stop-color="#009c62"/><stop offset=".417" stop-color="#019c4a"/><stop offset=".546" stop-color="#579c3e"/><stop offset=".628" stop-color="#9c9b34"/><stop offset=".693" stop-color="#9c6d1e"/><stop offset=".789" stop-color="#9c460c"/><stop offset=".927" stop-color="#9c2800"/><stop offset="1" stop-color="#9c1e00"/></linearGradient>
<linearGradient id="c123" gradientUnits="userSpaceOnUse" x1="1068" x2="1505"><stop offset="0" stop-color="#009c63"/><stop offset=".411" stop-color="#019c4c"/><stop offset=".534" stop-color="#539c41"/><stop offset=".621" stop-color="#9c9936"/><stop offset=".685" stop-color="#9c6c20"/><stop offset=".781" stop-color="#9c450d"/><stop offset=".927" stop-color="#9c2600"/><stop offset="1" stop-color="#9c1c00"/></linearGradient>
<linearGradient id="c124" gradientUnits="userSpaceOnUse" x1="1068" x2="1507"><stop offset="0" stop-color="#009c65"/><stop offset=".409" stop-color="#029c4e"/><stop offset=".532" stop-color="#569c43"/><stop offset=".614" stop-color="#9c9a39"/><stop offset=".673" stop-color="#9c6f23"/><stop offset=".764" stop-color="#9c4810"/><stop offset=".914" stop-color="#9c2600"/><stop offset="1" stop-color="#9c1b00"/></linearGradient>
<linearGradient id="c125" gradientUnits="userSpaceOnUse" x1="1068" x2="1510"><stop offset="0" stop-color="#009c66"/><stop offset=".405" stop-color="#029c50"/><stop offset=".527" stop-color="#579c46"/><stop offset=".604" stop-color="#9b9c3d"/><stop offset=".667" stop-color="#9c6d25"/><stop offset=".757" stop-color="#9c4711"/><stop offset=".905" stop-color="#9c2600"/><stop offset="1" stop-color="#9c1900"/></linearGradient>
<linearGradient id="c126" gradientUnits="userSpaceOnUse" x1="1069" x2="1512"><stop offset="0" stop-color="#009c68"/><stop offset=".401" stop-color="#029c53"/><stop offset=".523" stop-color="#589c48"/><stop offset=".599" stop-color="#9c9a3f"/><stop offset=".658" stop-color="#9c6e27"/><stop offset=".748" stop-color="#9c4713"/><stop offset=".896" stop-color="#9c2501"/><stop offset="1" stop-color="#9c1800"/></linearGradient>
<linearGradient id="c127" gradientUnits="userSpaceOnUse" x1="1069" x2="1515"><stop offset="0" stop-color="#009c6a"/><stop offset=".397" stop-color="#039c55"/><stop offset=".513" stop-color="#569c4b"/><stop offset=".589" stop-color="#9b9c43"/><stop offset=".652" stop-color="#9c6c29"/><stop offset=".741" stop-color="#9c4614"/><stop offset=".888" stop-color="#9c2501"/><stop offset="1" stop-color="#9c1600"/></linearGradient>
<linearGradient id="c128" gradientUnits="userSpaceOnUse" x1="1070" x2="1518"><stop offset="0" stop-color="#009c6b"/><stop offset=".391" stop-color="#029c57"/><stop offset=".507" stop-color="#579c4e"/><stop offset=".582" stop-color="#9c9b45"/><stop offset=".64" stop-color="#9c6e2c"/><stop offset=".729" stop-color="#9c4616"/><stop offset=".871" stop-color="#9c2503"/><stop offset="1" stop-color="#9c1500"/></linearGradient>
<linearGradient id="c129" gradientUnits="userSpaceOnUse" x1="1070" x2="1520"><stop offset="0" stop-color="#009c6d"/><stop offset=".385" stop-color="#019c5a"/><stop offset=".5" stop-color="#559c50"/><stop offset=".575" stop-color="#9b9c49"/><stop offset=".633" stop-color="#9c6e2e"/><stop offset=".717" stop-color="#9c4818"/><stop offset=".858" stop-color="#9c2604"/><stop offset="1" stop-color="#9c1300"/></linearGradient>
<linearGradient id="c130" gradientUnits="userSpaceOnUse" x1="1070" x2="1523"><stop offset="0" stop-color="#009c6f"/><stop offset=".383" stop-color="#029c5c"/><stop offset=".498" stop-color="#589c53"/><stop offset=".568" stop-color="#9c9b4c"/><stop offset=".621" stop-color="#9c7032"/><stop offset=".705" stop-color="#9c481a"/><stop offset=".841" stop-color="#9c2706"/><stop offset=".974" stop-color="#9c1500"/><stop offset="1" stop-color="#9c1200"/></linearGradient>
<linearGradient id="c131" gradientUnits="userSpaceOnUse" x1="1071" x2="1526"><stop offset="0" stop-color="#009c71"/><stop offset=".377" stop-color="#029c5f"/><stop offset=".487" stop-color="#559c56"/><stop offset=".561" stop-color="#9c9a4e"/><stop offset=".614" stop-color="#9c6f34"/><stop offset=".697" stop-color="#9c481c"/><stop offset=".833" stop-color="#9c2607"/><stop offset=".969" stop-color="#9c1400"/><stop offset="1" stop-color="#9c1100"/></linearGradient>
<linearGradient id="c132" gradientUnits="userSpaceOnUse" x1="1071" x2="1528"><stop offset="0" stop-color="#009c73"/><stop offset=".376" stop-color="#039c61"/><stop offset=".485" stop-color="#589c59"/><stop offset=".555" stop-color="#9c9b52"/><stop offset=".607" stop-color="#9c6f36"/><stop offset=".69" stop-color="#9c471d"/><stop offset=".825" stop-color="#9c2608"/><stop offset=".965" stop-color="#9c1300"/><stop offset="1" stop-color="#9c0f00"/></linearGradient>
<linearGradient id="c133" gradientUnits="userSpaceOnUse" x1="1072" x2="1531"><stop offset="0" stop-color="#009c74"/><stop offset=".37" stop-color="#039c64"/><stop offset=".478" stop-color="#589c5c"/><stop offset=".548" stop-color="#9c9a54"/><stop offset=".6" stop-color="#9c6e38"/><stop offset=".683" stop-color="#9c461f"/><stop offset=".817" stop-color="#9c2509"/><stop offset=".965" stop-color="#9c1100"/><stop offset="1" stop-color="#9c0e00"/></linearGradient>
<linearGradient id="c134" gradientUnits="userSpaceOnUse" x1="1072" x2="1533"><stop offset="0" stop-color="#009c76"/><stop offset=".364" stop-color="#019c67"/><stop offset=".472" stop-color="#579c5f"/><stop offset=".541" stop-color="#9c9b58"/><stop offset=".593" stop-color="#9c6e3b"/><stop offset=".671" stop-color="#9c4821"/><stop offset=".801" stop-color="#9c260b"/><stop offset=".961" stop-color="#9c1100"/><stop offset="1" stop-color="#9c0d00"/></linearGradient>
<linearGradient id="c135" gradientUnits="userSpaceOnUse" x1="1073" x2="1536"><stop offset="0" stop-color="#009c78"/><stop offset=".358" stop-color="#009c69"/><stop offset=".461" stop-color="#539c62"/><stop offset=".534" stop-color="#9c995b"/><stop offset=".586" stop-color="#9c6d3d"/><stop offset=".664" stop-color="#9c4723"/><stop offset=".793" stop-color="#9c250c"/><stop offset=".961" stop-color="#9c0f00"/><stop offset="1" stop-color="#9c0c00"/></linearGradient>
<linearGradient id="c136" gradientUnits="userSpaceOnUse" x1="1073" x2="1539"><stop offset="0" stop-color="#009c7a"/><stop offset=".355" stop-color="#019c6c"/><stop offset=".457" stop-color="#559c65"/><stop offset=".526" stop-color="#9c9c60"/><stop offset=".577" stop-color="#9c6e40"/><stop offset=".654" stop-color="#9c4725"/><stop offset=".778" stop-color="#9c260e"/><stop offset=".957" stop-color="#9c0e00"/><stop offset="1" stop-color="#9c0b00"/></linearGradient>
<linearGradient id="c137" gradientUnits="userSpaceOnUse" x1="1074" x2="1541"><stop offset="0" stop-color="#009c7c"/><stop offset=".35" stop-color="#019c6f"/><stop offset=".453" stop-color="#569c68"/><stop offset=".521" stop-color="#9c9961"/><stop offset=".573" stop-color="#9c6c41"/><stop offset=".65" stop-color="#9c4626"/><stop offset=".778" stop-color="#9c240e"/><stop offset=".962" stop-color="#9c0d00"/><stop offset="1" stop-color="#9c0a00"/></linearGradient>
<linearGradient id="c138" gradientUnits="userSpaceOnUse" x1="1074" x2="1544"><stop offset="0" stop-color="#009c7e"/><stop offset=".347" stop-color="#029c72"/><stop offset=".449" stop-color="#589c6c"/><stop offset=".513" stop-color="#9c9b67"/><stop offset=".559" stop-color="#9c7047"/><stop offset=".631" stop-color="#9c492b"/><stop offset=".75" stop-color="#9c2812"/><stop offset=".949" stop-color="#9c0d00"/><stop offset="1" stop-color="#9c0800"/></linearGradient>
<linearGradient id="c139" gradientUnits="userSpaceOnUse" x1="1075" x2="1547"><stop offset="0" stop-color="#009c80"/><stop offset=".342" stop-color="#019c75"/><stop offset=".439" stop-color="#549c6f"/><stop offset=".506" stop-color="#9c9a69"/><stop offset=".553" stop-color="#9c6f49"/><stop offset=".624" stop-color="#9c482c"/><stop offset=".743" stop-color="#9c2713"/><stop offset=".949" stop-color="#9c0b00"/><stop offset="1" stop-color="#9c0700"/></linearGradient>
<linearGradient id="c140" gradientUnits="userSpaceOnUse" x1="1075" x2="1549"><stop offset="0" stop-color="#009c82"/><stop offset=".34" stop-color="#029c78"/><stop offset=".437" stop-color="#579c73"/><stop offset=".5" stop-color="#9c9b6e"/><stop offset=".546" stop-color="#9c6f4c"/><stop offset=".618" stop-color="#9c482e"/><stop offset=".735" stop-color="#9c2614"/><stop offset=".945" stop-color="#9c0b00"/><stop offset="1" stop-color="#9c0600"/></linearGradient>
<linearGradient id="c141" gradientUnits="userSpaceOnUse" x1="1075" x2="1552"><stop offset="0" stop-color="#009c84"/><stop offset=".335" stop-color="#019c7b"/><stop offset=".431" stop-color="#569c76"/><stop offset=".494" stop-color="#9c9a71"/><stop offset=".54" stop-color="#9c6f4f"/><stop offset=".611" stop-color="#9c4730"/><stop offset=".728" stop-color="#9c2615"/><stop offset=".937" stop-color="#9c0a00"/><stop offset="1" stop-color="#9c0500"/></linearGradient>
<linearGradient id="c142" gradientUnits="userSpaceOnUse" x1="1076" x2="1554"><stop offset="0" stop-color="#009c87"/><stop offset=".329" stop-color="#009c7e"/><stop offset=".425" stop-color="#569c7a"/><stop offset=".488" stop-color="#9c9a75"/><stop offset=".533" stop-color="#9c6e52"/><stop offset=".604" stop-color="#9c4732"/><stop offset=".721" stop-color="#9c2517"/><stop offset=".929" stop-color="#9c0a00"/><stop offset="1" stop-color="#9c0400"/></linearGradient>
<linearGradient id="c143" gradientUnits="userSpaceOnUse" x1="1076" x2="1557"><stop offset="0" stop-color="#009c89"/><stop offset=".328" stop-color="#029c81"/><stop offset=".419" stop-color="#559c7d"/><stop offset=".481" stop-color="#9c9a79"/><stop offset=".527" stop-color="#9c6e54"/><stop offset=".598" stop-color="#9c4634"/><stop offset=".714" stop-color="#9c2518"/><stop offset=".921" stop-color="#9c0901"/><stop offset="1" stop-color="#9c0300"/></linearGradient>
<linearGradient id="c144" gradientUnits="userSpaceOnUse" x1="1077" x2="1560"><stop offset="0" stop-color="#009c8b"/><stop offset=".322" stop-color="#019c84"/><stop offset=".413" stop-color="#569c81"/><stop offset=".475" stop-color="#9c987c"/><stop offset=".521" stop-color="#9c6c56"/><stop offset=".591" stop-color="#9c4535"/><stop offset=".707" stop-color="#9c2419"/><stop offset=".917" stop-color="#9c0801"/><stop offset="1" stop-color="#9c0200"/></linearGradient>
<linearGradient id="c145" gradientUnits="userSpaceOnUse" x1="1077" x2="1562"><stop offset="0" stop-color="#009c8d"/><stop offset=".321" stop-color="#039c88"/><stop offset=".412" stop-color="#589c85"/><stop offset=".469" stop-color="#9c9a81"/><stop offset=".514" stop-color="#9c6c5a"/><stop offset=".58" stop-color="#9c4739"/><stop offset=".691" stop-color="#9c251b"/><stop offset=".893" stop-color="#9c0903"/><stop offset="1" stop-color="#9c0100"/></linearGradient>
<linearGradient id="c146" gradientUnits="userSpaceOnUse" x1="1078" x2="1565"><stop offset="0" stop-color="#009c90"/><stop offset=".316" stop-color="#029c8b"/><stop offset=".402" stop-color="#549c89"/><stop offset=".459" stop-color="#9a9c87"/><stop offset=".508" stop-color="#9c6b5c"/><stop offset=".578" stop-color="#9c4439"/><stop offset=".693" stop-color="#9c231b"/><stop offset=".902" stop-color="#9c0703"/><stop offset="1" stop-color="#9c0000"/></linearGradient>
<linearGradient id="c147" gradientUnits="userSpaceOnUse" x1="1078" x2="1568"><stop offset="0" stop-color="#009c92"/><stop offset=".313" stop-color="#039c8f"/><stop offset=".398" stop-color="#569c8d"/><stop offset=".455" stop-color="#9c9a8a"/><stop offset=".496" stop-color="#9c6f63"/><stop offset=".561" stop-color="#9c483f"/><stop offset=".667" stop-color="#9c2620"/><stop offset=".858" stop-color="#9c0a06"/><stop offset="1" stop-color="#9c0000"/></linearGradient>
<linearGradient id="c148" gradientUnits="userSpaceOnUse" x1="1079" x2="1570"><stop offset="0" stop-color="#009c95"/><stop offset=".309" stop-color="#039c92"/><stop offset=".394" stop-color="#589c91"/><stop offset=".447" stop-color="#9a9c90"/><stop offset=".492" stop-color="#9c6d65"/><stop offset=".557" stop-color="#9c4640"/><stop offset=".663" stop-color="#9c2521"/><stop offset=".854" stop-color="#9c0907"/><stop offset="1" stop-color="#9c0000"/></linearGradient>
<linearGradient id="c149" gradientUnits="userSpaceOnUse" x1="1079" x2="1573"><stop offset="0" stop-color="#009c97"/><stop offset=".302" stop-color="#009c96"/><stop offset=".387" stop-color="#559c95"/><stop offset=".444" stop-color="#9c9a93"/><stop offset=".484" stop-color="#9c6e69"/><stop offset=".544" stop-color="#9c4845"/><stop offset=".645" stop-color="#9c2724"/><stop offset=".827" stop-color="#9c0b09"/><stop offset=".996" stop-color="#9c0000"/><stop offset="1" stop-color="#9c0000"/></linearGradient>
<linearGradient id="c150" gradientUnits="userSpaceOnUse" x1="1080" x2="1576"><stop offset="0" stop-color="#009c9a"/><stop offset=".297" stop-color="#009c9a"/><stop offset=".378" stop-color="#519c9a"/><stop offset=".434" stop-color="#999c9a"/><stop offset=".482" stop-color="#9c6a68"/><stop offset=".546" stop-color="#9c4343"/><stop offset=".655" stop-color="#9c2222"/><stop offset=".851" stop-color="#9c0707"/><stop offset="1" stop-color="#9c0000"/></linearGradient>
<linearGradient id="c151" gradientUnits="userSpaceOnUse" x1="1080" x2="1578"><stop offset="0" stop-color="#009b9c"/><stop offset=".296" stop-color="#01999c"/><stop offset=".38" stop-color="#57999c"/><stop offset=".432" stop-color="#9b989c"/><stop offset=".476" stop-color="#9c6a6c"/><stop offset=".54" stop-color="#9c4345"/><stop offset=".644" stop-color="#9c2324"/><stop offset=".832" stop-color="#9c0809"/><stop offset=".992" stop-color="#9c0000"/><stop offset="1" stop-color="#9c0000"/></linearGradient>
<linearGradient id="c152" gradientUnits="userSpaceOnUse" x1="1081" x2="1581"><stop offset="0" stop-color="#00989c"/><stop offset=".291" stop-color="#00969c"/><stop offset=".375" stop-color="#55959c"/><stop offset=".43" stop-color="#9c929a"/><stop offset=".47" stop-color="#9c686f"/><stop offset=".53" stop-color="#9c4449"/><stop offset=".629" stop-color="#9c2427"/><stop offset=".809" stop-color="#9c090b"/><stop offset=".972" stop-color="#9c0000"/><stop offset="1" stop-color="#9c0000"/></linearGradient>
<linearGradient id="c153" gradientUnits="userSpaceOnUse" x1="1082" x2="1583"><stop offset="0" stop-color="#00959c"/><stop offset=".287" stop-color="#01929c"/><stop offset=".371" stop-color="#54909c"/><stop offset=".426" stop-color="#9b8f9c"/><stop offset=".466" stop-color="#9c6670"/><stop offset=".526" stop-color="#9c424a"/><stop offset=".625" stop-color="#9c2228"/><stop offset=".805" stop-color="#9c080c"/><stop offset=".964" stop-color="#9c0000"/><stop offset="1" stop-color="#9c0000"/></linearGradient>
<linearGradient id="c154" gradientUnits="userSpaceOnUse" x1="1082" x2="1586"><stop offset="0" stop-color="#00939c"/><stop offset=".285" stop-color="#018f9c"/><stop offset=".368" stop-color="#548c9c"/><stop offset=".423" stop-color="#9a8a9c"/><stop offset=".47" stop-color="#9c5e6b"/><stop offset=".534" stop-color="#9c3c45"/><stop offset=".64" stop-color="#9c1d24"/><stop offset=".834" stop-color="#9c0409"/><stop offset="1" stop-color="#9c0000"/></linearGradient>
<linearGradient id="c155" gradientUnits="userSpaceOnUse" x1="1083" x2="1589"><stop offset="0" stop-color="#00909c"/><stop offset=".28" stop-color="#018b9c"/><stop offset=".366" stop-color="#57889c"/><stop offset=".421" stop-color="#9c859b"/><stop offset=".461" stop-color="#9c5f70"/><stop offset=".524" stop-color="#9c3c49"/><stop offset=".626" stop-color="#9c1e27"/><stop offset=".811" stop-color="#9c050b"/><stop offset=".969" stop-color="#9c0000"/><stop offset="1" stop-color="#9c0000"/></linearGradient>
<linearGradient id="c156" gradientUnits="userSpaceOnUse" x1="1083" x2="1591"><stop offset="0" stop-color="#008e9c"/><stop offset=".278" stop-color="#02889c"/><stop offset=".365" stop-color="#57849c"/><stop offset=".42" stop-color="#9c819b"/><stop offset=".463" stop-color="#9c5a6e"/><stop offset=".525" stop-color="#9c3948"/><stop offset=".631" stop-color="#9c1b26"/><stop offset=".82" stop-color="#9c030a"/><stop offset="1" stop-color="#9c0000"/></linearGradient>
<linearGradient id="c157" gradientUnits="userSpaceOnUse" x1="1084" x2="1594"><stop offset="0" stop-color="#008b9c"/><stop offset=".273" stop-color="#02849c"/><stop offset=".359" stop-color="#56809c"/><stop offset=".418" stop-color="#9c7b99"/><stop offset=".461" stop-color="#9c566d"/><stop offset=".527" stop-color="#9c3446"/><stop offset=".637" stop-color="#9c1824"/><stop offset=".836" stop-color="#9c0109"/><stop offset="1" stop-color="#9c0000"/></linearGradient>
<linearGradient id="c158" gradientUnits="userSpaceOnUse" x1="1084" x2="1597"><stop offset="0" stop-color="#00899c"/><stop offset=".268" stop-color="#00819c"/><stop offset=".354" stop-color="#537d9c"/><stop offset=".412" stop-color="#9a799c"/><stop offset=".463" stop-color="#9c506a"/><stop offset=".533" stop-color="#9c3043"/><stop offset=".646" stop-color="#9c1522"/><stop offset=".848" stop-color="#9c0008"/><stop offset="1" stop-color="#9c0000"/></linearGradient>
<linearGradient id="c159" gradientUnits="userSpaceOnUse" x1="1085" x2="1599"><stop offset="0" stop-color="#00879c"/><stop offset=".267" stop-color="#027e9c"/><stop offset=".357" stop-color="#59799c"/><stop offset=".411" stop-color="#9b759c"/><stop offset=".453" stop-color="#9c526f"/><stop offset=".519" stop-color="#9c3248"/><stop offset=".624" stop-color="#9c1727"/><stop offset=".814" stop-color="#9c000b"/><stop offset="1" stop-color="#9c0000"/></linearGradient>
<linearGradient id="c160" gradientUnits="userSpaceOnUse" x1="1085" x2="1602"><stop offset="0" stop-color="#00849c"/><stop offset=".263" stop-color="#017b9c"/><stop offset=".351" stop-color="#56759c"/><stop offset=".409" stop-color="#9c719b"/><stop offset=".452" stop-color="#9c4e6f"/><stop offset=".517" stop-color="#9c2f48"/><stop offset=".625" stop-color="#9c1526"/><stop offset=".819" stop-color="#9c000b"/><stop offset="1" stop-color="#9c0000"/></linearGradient>
<linearGradient id="c161" gradientUnits="userSpaceOnUse" x1="1086" x2="1604"><stop offset="0" stop-color="#00829c"/><stop offset=".262" stop-color="#03789c"/><stop offset=".35" stop-color="#57729c"/><stop offset=".408" stop-color="#9c6c9a"/><stop offset=".45" stop-color="#9c4b6f"/><stop offset=".515" stop-color="#9c2d48"/><stop offset=".623" stop-color="#9c1427"/><stop offset=".812" stop-color="#9c000b"/><stop offset="1" stop-color="#9c0000"/></linearGradient>
<linearGradient id="c162" gradientUnits="userSpaceOnUse" x1="1086" x2="1607"><stop offset="0" stop-color="#00809c"/><stop offset=".257" stop-color="#01759c"/><stop offset=".345" stop-color="#546e9c"/><stop offset=".406" stop-color="#9c6899"/><stop offset=".448" stop-color="#9c486f"/><stop offset=".513" stop-color="#9c2b48"/><stop offset=".621" stop-color="#9c1227"/><stop offset=".801" stop-color="#9c000c"/><stop offset="1" stop-color="#9c0000"/></linearGradient>
<linearGradient id="c163" gradientUnits="userSpaceOnUse" x1="1087" x2="1610"><stop offset="0" stop-color="#007d9c"/><stop offset=".252" stop-color="#01729c"/><stop offset=".344" stop-color="#576b9c"/><stop offset=".401" stop-color="#9b669c"/><stop offset=".447" stop-color="#9c446e"/><stop offset=".515" stop-color="#9c2847"/><stop offset=".626" stop-color="#9c1025"/><stop offset=".794" stop-color="#9c000d"/><stop offset="1" stop-color="#9c0000"/></linearGradient>
<linearGradient id="c164" gradientUnits="userSpaceOnUse" x1="1088" x2="1612"><stop offset="0" stop-color="#007b9c"/><stop offset=".247" stop-color="#006f9c"/><stop offset=".338" stop-color="#55689c"/><stop offset=".399" stop-color="#9c629b"/><stop offset=".445" stop-color="#9c426e"/><stop offset=".513" stop-color="#9c2647"/><stop offset=".627" stop-color="#9c0e25"/><stop offset=".787" stop-color="#9c000e"/><stop offset="1" stop-color="#9c0000"/></linearGradient>
<linearGradient id="c165" gradientUnits="userSpaceOnUse" x1="1088" x2="1615"><stop offset="0" stop-color="#00799c"/><stop offset=".246" stop-color="#026c9c"/><stop offset=".337" stop-color="#56649c"/><stop offset=".398" stop-color="#9c5e9a"/><stop offset=".443" stop-color="#9c3f6e"/><stop offset=".511" stop-color="#9c2447"/><stop offset=".625" stop-color="#9c0d25"/><stop offset=".773" stop-color="#9c000f"/><stop offset="1" stop-color="#9c0000"/></linearGradient>
<linearGradient id="c166" gradientUnits="userSpaceOnUse" x1="1089" x2="1618"><stop offset="0" stop-color="#00769c"/><stop offset=".242" stop-color="#016a9d"/><stop offset=".336" stop-color="#58619c"/><stop offset=".392" stop-color="#9a5b9c"/><stop offset=".442" stop-color="#9c3b6d"/><stop offset=".513" stop-color="#9c2145"/><stop offset=".63" stop-color="#9c0a24"/><stop offset=".762" stop-color="#9c0010"/><stop offset="1" stop-color="#9c0000"/></linearGradient>
<linearGradient id="c167" gradientUnits="userSpaceOnUse" x1="1089" x2="1620"><stop offset="0" stop-color="#00749c"/><stop offset=".241" stop-color="#02679d"/><stop offset=".335" stop-color="#595e9c"/><stop offset=".395" stop-color="#9c5699"/><stop offset=".44" stop-color="#9c396d"/><stop offset=".511" stop-color="#9c1f46"/><stop offset=".628" stop-color="#9c0924"/><stop offset=".756" stop-color="#9c0011"/><stop offset="1" stop-color="#9c0000"/></linearGradient>
<linearGradient id="c168" gradientUnits="userSpaceOnUse" x1="1090" x2="1623"><stop offset="0" stop-color="#00729c"/><stop offset=".236" stop-color="#02649d"/><stop offset=".33" stop-color="#575b9c"/><stop offset=".39" stop-color="#9c549b"/><stop offset=".434" stop-color="#9c386f"/><stop offset=".502" stop-color="#9c1f49"/><stop offset=".614" stop-color="#9c0a27"/><stop offset=".738" stop-color="#9c0013"/><stop offset="1" stop-color="#9c0000"/></linearGradient>
<linearGradient id="c169" gradientUnits="userSpaceOnUse" x1="1091" x2="1624"><stop offset="0" stop-color="#00709c"/><stop offset=".232" stop-color="#01629d"/><stop offset=".33" stop-color="#59589c"/><stop offset=".39" stop-color="#9c5099"/><stop offset=".434" stop-color="#9c356e"/><stop offset=".506" stop-color="#9c1c47"/><stop offset=".622" stop-color="#9c0726"/><stop offset=".738" stop-color="#9c0013"/><stop offset="1" stop-color="#9c0000"/></linearGradient>
<linearGradient id="c170" gradientUnits="userSpaceOnUse" x1="1091" x2="1624"><stop offset="0" stop-color="#006e9c"/><stop offset=".232" stop-color="#025f9d"/><stop offset=".33" stop-color="#5a559c"/><stop offset=".39" stop-color="#9c4d9a"/><stop offset=".434" stop-color="#9c336f"/><stop offset=".506" stop-color="#9c1b48"/><stop offset=".622" stop-color="#9c0626"/><stop offset=".734" stop-color="#9c0014"/><stop offset="1" stop-color="#9c0000"/></linearGradient>
<linearGradient id="c171" gradientUnits="userSpaceOnUse" x1="1092" x2="1618"><stop offset="0" stop-color="#006c9c"/><stop offset=".231" stop-color="#025d9d"/><stop offset=".33" stop-color="#57529c"/><stop offset=".394" stop-color="#9c4998"/><stop offset=".443" stop-color="#9c2e6c"/><stop offset=".519" stop-color="#9c1745"/><stop offset=".644" stop-color="#9c0424"/><stop offset=".86" stop-color="#9c0009"/><stop offset="1" stop-color="#9c0000"/></linearGradient>
<linearGradient id="c172" gradientUnits="userSpaceOnUse" x1="1092" x2="1612"><stop offset="0" stop-color="#006a9d"/><stop offset=".234" stop-color="#035a9d"/><stop offset=".333" stop-color="#584f9c"/><stop offset=".398" stop-color="#9c4699"/><stop offset=".448" stop-color="#9c2c6c"/><stop offset=".525" stop-color="#9c1645"/><stop offset=".651" stop-color="#9c0324"/><stop offset=".881" stop-color="#9c0009"/><stop offset="1" stop-color="#9c0001"/></linearGradient>
<linearGradient id="c173" gradientUnits="userSpaceOnUse" x1="1093" x2="1607"><stop offset="0" stop-color="#00679d"/><stop offset=".233" stop-color="#02589d"/><stop offset=".337" stop-color="#5a4c9c"/><stop offset=".399" stop-color="#9c449b"/><stop offset=".45" stop-color="#9c2b6e"/><stop offset=".527" stop-color="#9c1547"/><stop offset=".651" stop-color="#9c0226"/><stop offset=".876" stop-color="#9c000a"/><stop offset="1" stop-color="#9c0002"/></linearGradient>
<linearGradient id="c174" gradientUnits="userSpaceOnUse" x1="1094" x2="1601"><stop offset="0" stop-color="#00659d"/><stop offset=".232" stop-color="#02559d"/><stop offset=".339" stop-color="#594a9c"/><stop offset=".406" stop-color="#9c4099"/><stop offset=".457" stop-color="#9c286d"/><stop offset=".535" stop-color="#9c1346"/><stop offset=".665" stop-color="#9c0125"/><stop offset=".902" stop-color="#9c0009"/><stop offset="1" stop-color="#9c0003"/></linearGradient>
<linearGradient id="c175" gradientUnits="userSpaceOnUse" x1="1094" x2="1596"><stop offset="0" stop-color="#00639d"/><stop offset=".234" stop-color="#03539d"/><stop offset=".341" stop-color="#59479c"/><stop offset=".409" stop-color="#9c3e9a"/><stop offset=".46" stop-color="#9c266e"/><stop offset=".54" stop-color="#9c1247"/><stop offset=".671" stop-color="#9c0026"/><stop offset=".909" stop-color="#9c000a"/><stop offset="1" stop-color="#9c0004"/></linearGradient>
<linearGradient id="c176" gradientUnits="userSpaceOnUse" x1="1095" x2="1590"><stop offset="0" stop-color="#00619d"/><stop offset=".234" stop-color="#03519d"/><stop offset=".347" stop-color="#5c449c"/><stop offset=".411" stop-color="#9c3c9b"/><stop offset=".464" stop-color="#9c256f"/><stop offset=".544" stop-color="#9c1148"/><stop offset=".677" stop-color="#9c0026"/><stop offset=".915" stop-color="#9c000a"/><stop offset="1" stop-color="#9c0005"/></linearGradient>
<linearGradient id="c177" gradientUnits="userSpaceOnUse" x1="1096" x2="1584"><stop offset="0" stop-color="#005f9d"/><stop offset=".233" stop-color="#024f9d"/><stop offset=".347" stop-color="#5a429c"/><stop offset=".416" stop-color="#9c389a"/><stop offset=".469" stop-color="#9c236f"/><stop offset=".551" stop-color="#9c0f48"/><stop offset=".686" stop-color="#9c0027"/><stop offset=".931" stop-color="#9c000b"/><stop offset="1" stop-color="#9c0006"/></linearGradient>
<linearGradient id="c178" gradientUnits="userSpaceOnUse" x1="1096" x2="1579"><stop offset="0" stop-color="#005d9d"/><stop offset=".231" stop-color="#014d9d"/><stop offset=".347" stop-color="#57409c"/><stop offset=".421" stop-color="#9c359a"/><stop offset=".479" stop-color="#9c1f6c"/><stop offset=".566" stop-color="#9c0c45"/><stop offset=".694" stop-color="#9c0027"/><stop offset=".942" stop-color="#9c000b"/><stop offset="1" stop-color="#9c0007"/></linearGradient>
<linearGradient id="c179" gradientUnits="userSpaceOnUse" x1="1097" x2="1573"><stop offset="0" stop-color="#005b9d"/><stop offset=".234" stop-color="#034a9d"/><stop offset=".356" stop-color="#5c3d9c"/><stop offset=".427" stop-color="#9c3299"/><stop offset=".485" stop-color="#9c1d6c"/><stop offset=".573" stop-color="#9c0b46"/><stop offset=".695" stop-color="#9c0029"/><stop offset=".937" stop-color="#9c000c"/><stop offset="1" stop-color="#9c0008"/></linearGradient>
<linearGradient id="c180" gradientUnits="userSpaceOnUse" x1="1098" x2="1567"><stop offset="0" stop-color="#00599d"/><stop offset=".234" stop-color="#03489d"/><stop offset=".357" stop-color="#5b3a9c"/><stop offset=".43" stop-color="#9c309a"/><stop offset=".489" stop-color="#9c1b6d"/><stop offset=".579" stop-color="#9c0a47"/><stop offset=".694" stop-color="#9c002b"/><stop offset=".932" stop-color="#9c000e"/><stop offset="1" stop-color="#9c0009"/></linearGradient>
<linearGradient id="c181" gradientUnits="userSpaceOnUse" x1="1098" x2="1562"><stop offset="0" stop-color="#00579d"/><stop offset=".232" stop-color="#00469d"/><stop offset=".356" stop-color="#57399c"/><stop offset=".433" stop-color="#9c2e9b"/><stop offset=".494" stop-color="#9c1a6e"/><stop offset=".584" stop-color="#9c0947"/><stop offset=".695" stop-color="#9c002c"/><stop offset=".931" stop-color="#9c000f"/><stop offset="1" stop-color="#9c000a"/></linearGradient>
<linearGradient id="c182" gradientUnits="userSpaceOnUse" x1="1099" x2="1556"><stop offset="0" stop-color="#00559d"/><stop offset=".236" stop-color="#03449d"/><stop offset=".362" stop-color="#5a369c"/><stop offset=".441" stop-color="#9c2a99"/><stop offset=".502" stop-color="#9c176d"/><stop offset=".598" stop-color="#9c0646"/><stop offset=".703" stop-color="#9c002d"/><stop offset=".943" stop-color="#9c0010"/><stop offset="1" stop-color="#9c000b"/></linearGradient>
<linearGradient id="c183" gradientUnits="userSpaceOnUse" x1="1100" x2="1550"><stop offset="0" stop-color="#00539d"/><stop offset=".235" stop-color="#02429e"/><stop offset=".367" stop-color="#5c339c"/><stop offset=".442" stop-color="#9b299c"/><stop offset=".509" stop-color="#9c156d"/><stop offset=".606" stop-color="#9c0546"/><stop offset=".717" stop-color="#9c002c"/><stop offset=".965" stop-color="#9c000f"/><stop offset="1" stop-color="#9c000d"/></linearGradient>
<linearGradient id="c184" gradientUnits="userSpaceOnUse" x1="1100" x2="1545"><stop offset="0" stop-color="#00529d"/><stop offset=".233" stop-color="#01409e"/><stop offset=".368" stop-color="#59319c"/><stop offset=".448" stop-color="#9c279b"/><stop offset=".511" stop-color="#9c146f"/><stop offset=".605" stop-color="#9c0549"/><stop offset=".726" stop-color="#9c002d"/><stop offset=".978" stop-color="#9c0010"/><stop offset="1" stop-color="#9c000e"/></linearGradient>
<linearGradient id="c185" gradientUnits="userSpaceOnUse" x1="1101" x2="1539"><stop offset="0" stop-color="#00509d"/><stop offset=".236" stop-color="#033e9e"/><stop offset=".373" stop-color="#5b2f9c"/><stop offset=".455" stop-color="#9c249a"/><stop offset=".518" stop-color="#9c136f"/><stop offset=".618" stop-color="#9c0348"/><stop offset=".782" stop-color="#9c0026"/><stop offset="1" stop-color="#9c000f"/></linearGradient>
<linearGradient id="c186" gradientUnits="userSpaceOnUse" x1="1102" x2="1534"><stop offset="0" stop-color="#004e9d"/><stop offset=".235" stop-color="#033c9e"/><stop offset=".378" stop-color="#5c2d9c"/><stop offset=".461" stop-color="#9c2199"/><stop offset=".53" stop-color="#9c106c"/><stop offset=".636" stop-color="#9c0045"/><stop offset=".811" stop-color="#9c0023"/><stop offset="1" stop-color="#9c0011"/></linearGradient>
<linearGradient id="c187" gradientUnits="userSpaceOnUse" x1="1103" x2="1528"><stop offset="0" stop-color="#004c9d"/><stop offset=".235" stop-color="#023a9e"/><stop offset=".38" stop-color="#5c2b9c"/><stop offset=".465" stop-color="#9c1f9a"/><stop offset=".535" stop-color="#9c0e6d"/><stop offset=".643" stop-color="#9c0046"/><stop offset=".817" stop-color="#9c0025"/><stop offset="1" stop-color="#9c0012"/></linearGradient>
<linearGradient id="c188" gradientUnits="userSpaceOnUse" x1="1103" x2="1522"><stop offset="0" stop-color="#004a9d"/><stop offset=".233" stop-color="#01399e"/><stop offset=".381" stop-color="#59299c"/><stop offset=".471" stop-color="#9c1d9a"/><stop offset=".543" stop-color="#9c0d6d"/><stop offset=".652" stop-color="#9c0046"/><stop offset=".833" stop-color="#9c0024"/><stop offset="1" stop-color="#9c0013"/></linearGradient>
<linearGradient id="c189" gradientUnits="userSpaceOnUse" x1="1104" x2="1517"><stop offset="0" stop-color="#00489d"/><stop offset=".237" stop-color="#03379e"/><stop offset=".386" stop-color="#5b279c"/><stop offset=".478" stop-color="#9c1a99"/><stop offset=".551" stop-color="#9c0b6d"/><stop offset=".662" stop-color="#9c0046"/><stop offset=".845" stop-color="#9c0025"/><stop offset="1" stop-color="#9c0015"/></linearGradient>
<linearGradient id="c190" gradientUnits="userSpaceOnUse" x1="1105" x2="1511"><stop offset="0" stop-color="#00479d"/><stop offset=".235" stop-color="#02359e"/><stop offset=".392" stop-color="#5c249c"/><stop offset=".48" stop-color="#9b199c"/><stop offset=".554" stop-color="#9c0a6f"/><stop offset=".657" stop-color="#9c004a"/><stop offset=".833" stop-color="#9c0028"/><stop offset="1" stop-color="#9c0016"/></linearGradient>
<linearGradient id="c191" gradientUnits="userSpaceOnUse" x1="1106" x2="1505"><stop offset="0" stop-color="#00459e"/><stop offset=".235" stop-color="#02339e"/><stop offset=".395" stop-color="#5b229c"/><stop offset=".49" stop-color="#9c1699"/><stop offset=".565" stop-color="#9c076e"/><stop offset=".665" stop-color="#9c004b"/><stop offset=".845" stop-color="#9c0029"/><stop offset="1" stop-color="#9c0018"/></linearGradient>
<linearGradient id="c192" gradientUnits="userSpaceOnUse" x1="1106" x2="1500"><stop offset="0" stop-color="#00439e"/><stop offset=".237" stop-color="#03329e"/><stop offset=".399" stop-color="#5b219c"/><stop offset=".495" stop-color="#9c149a"/><stop offset=".571" stop-color="#9c066f"/><stop offset=".667" stop-color="#9c004d"/><stop offset=".843" stop-color="#9c002b"/><stop offset="1" stop-color="#9c001a"/></linearGradient>
<linearGradient id="c193" gradientUnits="userSpaceOnUse" x1="1107" x2="1494"><stop offset="0" stop-color="#00419e"/><stop offset=".237" stop-color="#03309e"/><stop offset=".402" stop-color="#5a1f9c"/><stop offset=".5" stop-color="#9b129c"/><stop offset=".577" stop-color="#9c0570"/><stop offset=".686" stop-color="#9c004b"/><stop offset=".871" stop-color="#9c0029"/><stop offset="1" stop-color="#9c001b"/></linearGradient>
<linearGradient id="c194" gradientUnits="userSpaceOnUse" x1="1108" x2="1488"><stop offset="0" stop-color="#003f9e"/><stop offset=".236" stop-color="#022e9e"/><stop offset=".408" stop-color="#5c1d9c"/><stop offset=".508" stop-color="#9c109b"/><stop offset=".586" stop-color="#9c036f"/><stop offset=".707" stop-color="#9c0049"/><stop offset=".906" stop-color="#9c0027"/><stop offset="1" stop-color="#9c001d"/></linearGradient>
<linearGradient id="c195" gradientUnits="userSpaceOnUse" x1="1109" x2="1483"><stop offset="0" stop-color="#003e9e"/><stop offset=".234" stop-color="#022d9e"/><stop offset=".41" stop-color="#5a1b9c"/><stop offset=".516" stop-color="#9c0d99"/><stop offset=".601" stop-color="#9c016d"/><stop offset=".729" stop-color="#9c0046"/><stop offset=".941" stop-color="#9c0025"/><stop offset="1" stop-color="#9c001f"/></linearGradient>
<linearGradient id="c196" gradientUnits="userSpaceOnUse" x1="1110" x2="1477"><stop offset="0" stop-color="#003c9e"/><stop offset=".234" stop-color="#022b9e"/><stop offset=".413" stop-color="#5a199c"/><stop offset=".522" stop-color="#9c0c9a"/><stop offset=".609" stop-color="#9c006d"/><stop offset=".739" stop-color="#9c0047"/><stop offset=".957" stop-color="#9c0025"/><stop offset="1" stop-color="#9c0021"/></linearGradient>
<linearGradient id="c197" gradientUnits="userSpaceOnUse" x1="1110" x2="1472"><stop offset="0" stop-color="#003a9e"/><stop offset=".236" stop-color="#02299e"/><stop offset=".423" stop-color="#5c179c"/><stop offset=".527" stop-color="#9b0a9c"/><stop offset=".615" stop-color="#9c006f"/><stop offset=".747" stop-color="#9c0048"/><stop offset=".967" stop-color="#9c0026"/><stop offset="1" stop-color="#9c0022"/></linearGradient>
<linearGradient id="c198" gradientUnits="userSpaceOnUse" x1="1111" x2="1466"><stop offset="0" stop-color="#00399e"/><stop offset=".236" stop-color="#02289f"/><stop offset=".427" stop-color="#5c159c"/><stop offset=".539" stop-color="#9c0899"/><stop offset=".629" stop-color="#9c006d"/><stop offset=".77" stop-color="#9c0046"/><stop offset="1" stop-color="#9c0025"/></linearGradient>
<linearGradient id="c199" gradientUnits="userSpaceOnUse" x1="1112" x2="1460"><stop offset="0" stop-color="#00379e"/><stop offset=".234" stop-color="#02269f"/><stop offset=".429" stop-color="#5a149c"/><stop offset=".549" stop-color="#9c0599"/><stop offset=".64" stop-color="#9c006d"/><stop offset=".783" stop-color="#9c0046"/><stop offset="1" stop-color="#9c0027"/></linearGradient>
<linearGradient id="c200" gradientUnits="userSpaceOnUse" x1="1113" x2="1455"><stop offset="0" stop-color="#00359e"/><stop offset=".233" stop-color="#01259f"/><stop offset=".436" stop-color="#5c129c"/><stop offset=".552" stop-color="#9c049b"/><stop offset=".645" stop-color="#9c006f"/><stop offset=".791" stop-color="#9c0047"/><stop offset="1" stop-color="#9c0029"/></linearGradient>
<linearGradient id="c201" gradientUnits="userSpaceOnUse" x1="1114" x2="1449"><stop offset="0" stop-color="#00339e"/><stop offset=".232" stop-color="#01249f"/><stop offset=".44" stop-color="#5b109c"/><stop offset=".56" stop-color="#9b029c"/><stop offset=".655" stop-color="#9c0070"/><stop offset=".804" stop-color="#9c0048"/><stop offset="1" stop-color="#9c002b"/></linearGradient>
<linearGradient id="c202" gradientUnits="userSpaceOnUse" x1="1115" x2="1443"><stop offset="0" stop-color="#00329e"/><stop offset=".236" stop-color="#03229f"/><stop offset=".448" stop-color="#5c0e9d"/><stop offset=".57" stop-color="#9c009b"/><stop offset=".667" stop-color="#9c0070"/><stop offset=".818" stop-color="#9c0048"/><stop offset="1" stop-color="#9c002d"/></linearGradient>
<linearGradient id="c203" gradientUnits="userSpaceOnUse" x1="1116" x2="1438"><stop offset="0" stop-color="#00309e"/><stop offset=".235" stop-color="#03209f"/><stop offset=".451" stop-color="#5b0d9d"/><stop offset=".58" stop-color="#9c009a"/><stop offset=".685" stop-color="#9c006d"/><stop offset=".846" stop-color="#9c0046"/><stop offset="1" stop-color="#9c0030"/></linearGradient>
<linearGradient id="c204" gradientUnits="userSpaceOnUse" x1="1117" x2="1432"><stop offset="0" stop-color="#002e9e"/><stop offset=".234" stop-color="#021f9f"/><stop offset=".456" stop-color="#5b0b9d"/><stop offset=".589" stop-color="#9c009b"/><stop offset=".696" stop-color="#9c006e"/><stop offset=".861" stop-color="#9c0046"/><stop offset="1" stop-color="#9c0032"/></linearGradient>
<linearGradient id="c205" gradientUnits="userSpaceOnUse" x1="1118" x2="1426"><stop offset="0" stop-color="#002d9e"/><stop offset=".232" stop-color="#021e9f"/><stop offset=".465" stop-color="#5c099d"/><stop offset=".594" stop-color="#9a009c"/><stop offset=".723" stop-color="#9c006a"/><stop offset=".897" stop-color="#9c0043"/><stop offset="1" stop-color="#9c0035"/></linearGradient>
<linearGradient id="c206" gradientUnits="userSpaceOnUse" x1="1119" x2="1421"><stop offset="0" stop-color="#002b9e"/><stop offset=".23" stop-color="#021c9f"/><stop offset=".467" stop-color="#5b089d"/><stop offset=".592" stop-color="#94009c"/><stop offset=".612" stop-color="#9c0099"/><stop offset=".724" stop-color="#9c006d"/><stop offset=".895" stop-color="#9c0047"/><stop offset="1" stop-color="#9c0037"/></linearGradient>
<linearGradient id="c207" gradientUnits="userSpaceOnUse" x1="1120" x2="1415"><stop offset="0" stop-color="#00299f"/><stop offset=".23" stop-color="#021b9f"/><stop offset=".473" stop-color="#5a079d"/><stop offset=".595" stop-color="#90009c"/><stop offset=".622" stop-color="#9c009a"/><stop offset=".736" stop-color="#9c006e"/><stop offset=".912" stop-color="#9c0047"/><stop offset="1" stop-color="#9c003a"/></linearGradient>
<linearGradient id="c208" gradientUnits="userSpaceOnUse" x1="1120" x2="1409"><stop offset="0" stop-color="#00289f"/><stop offset=".234" stop-color="#02199f"/><stop offset=".49" stop-color="#5d049d"/><stop offset=".634" stop-color="#9c009a"/><stop offset=".752" stop-color="#9c006e"/><stop offset=".931" stop-color="#9c0047"/><stop offset="1" stop-color="#9c003d"/></linearGradient>
<linearGradient id="c209" gradientUnits="userSpaceOnUse" x1="1121" x2="1404"><stop offset="0" stop-color="#00269f"/><stop offset=".232" stop-color="#02189f"/><stop offset=".493" stop-color="#5c039d"/><stop offset=".648" stop-color="#9c0098"/><stop offset=".775" stop-color="#9c006c"/><stop offset=".965" stop-color="#9c0045"/><stop offset="1" stop-color="#9c0040"/></linearGradient>
<linearGradient id="c210" gradientUnits="userSpaceOnUse" x1="1122" x2="1398"><stop offset="0" stop-color="#00259f"/><stop offset=".23" stop-color="#01179f"/><stop offset=".496" stop-color="#5a029d"/><stop offset=".655" stop-color="#9c009b"/><stop offset=".784" stop-color="#9c006e"/><stop offset=".978" stop-color="#9c0047"/><stop offset="1" stop-color="#9c0044"/></linearGradient>
<linearGradient id="c211" gradientUnits="userSpaceOnUse" x1="1123" x2="1393"><stop offset="0" stop-color="#00239f"/><stop offset=".228" stop-color="#01169f"/><stop offset=".507" stop-color="#5c009d"/><stop offset=".669" stop-color="#9c009a"/><stop offset=".801" stop-color="#9c006d"/><stop offset="1" stop-color="#9c0047"/></linearGradient>
<linearGradient id="c212" gradientUnits="userSpaceOnUse" x1="1124" x2="1387"><stop offset="0" stop-color="#00229f"/><stop offset=".235" stop-color="#03149f"/><stop offset=".523" stop-color="#5e009d"/><stop offset=".682" stop-color="#9c009b"/><stop offset=".818" stop-color="#9c006e"/><stop offset="1" stop-color="#9c004a"/></linearGradient>
<linearGradient id="c213" gradientUnits="userSpaceOnUse" x1="1125" x2="1381"><stop offset="0" stop-color="#00209f"/><stop offset=".233" stop-color="#03139f"/><stop offset=".527" stop-color="#5c009d"/><stop offset=".698" stop-color="#9c009b"/><stop offset=".837" stop-color="#9c006e"/><stop offset="1" stop-color="#9c004e"/></linearGradient>
<linearGradient id="c214" gradientUnits="userSpaceOnUse" x1="1126" x2="1376"><stop offset="0" stop-color="#001f9f"/><stop offset=".23" stop-color="#0212a0"/><stop offset=".532" stop-color="#5b009d"/><stop offset=".714" stop-color="#9c0099"/><stop offset=".857" stop-color="#9c006d"/><stop offset="1" stop-color="#9c0052"/></linearGradient>
<linearGradient id="c215" gradientUnits="userSpaceOnUse" x1="1127" x2="1370"><stop offset="0" stop-color="#001d9f"/><stop offset=".23" stop-color="#0210a0"/><stop offset=".525" stop-color="#56009d"/><stop offset=".73" stop-color="#9c009a"/><stop offset=".877" stop-color="#9c006e"/><stop offset="1" stop-color="#9c0056"/></linearGradient>
<linearGradient id="c216" gradientUnits="userSpaceOnUse" x1="1128" x2="1364"><stop offset="0" stop-color="#001c9f"/><stop offset=".227" stop-color="#020fa0"/><stop offset=".513" stop-color="#4f009d"/><stop offset=".748" stop-color="#9c009a"/><stop offset=".908" stop-color="#9c006c"/><stop offset="1" stop-color="#9c005b"/></linearGradient>
<linearGradient id="c217" gradientUnits="userSpaceOnUse" x1="1129" x2="1359"><stop offset="0" stop-color="#001a9f"/><stop offset=".224" stop-color="#010ea0"/><stop offset=".509" stop-color="#4b009d"/><stop offset=".767" stop-color="#9c0098"/><stop offset=".931" stop-color="#9c006c"/><stop offset="1" stop-color="#9c005f"/></linearGradient>
<linearGradient id="c218" gradientUnits="userSpaceOnUse" x1="1130" x2="1353"><stop offset="0" stop-color="#00189f"/><stop offset=".223" stop-color="#010da0"/><stop offset=".5" stop-color="#46009e"/><stop offset=".786" stop-color="#9c0099"/><stop offset=".955" stop-color="#9c006c"/><stop offset="1" stop-color="#9c0064"/></linearGradient>
<linearGradient id="c219" gradientUnits="userSpaceOnUse" x1="1132" x2="1347"><stop offset="0" stop-color="#00179f"/><stop offset=".222" stop-color="#020ca0"/><stop offset=".491" stop-color="#42009e"/><stop offset=".806" stop-color="#9c0099"/><stop offset=".981" stop-color="#9c006d"/><stop offset="1" stop-color="#9c0069"/></linearGradient>
<linearGradient id="c220" gradientUnits="userSpaceOnUse" x1="1133" x2="1342"><stop offset="0" stop-color="#00159f"/><stop offset=".219" stop-color="#020ba0"/><stop offset=".476" stop-color="#3c009e"/><stop offset=".819" stop-color="#9c009b"/><stop offset="1" stop-color="#9c006e"/></linearGradient>
<linearGradient id="c221" gradientUnits="userSpaceOnUse" x1="1134" x2="1336"><stop offset="0" stop-color="#0014a0"/><stop offset=".225" stop-color="#0309a0"/><stop offset=".471" stop-color="#38009e"/><stop offset=".814" stop-color="#93009c"/><stop offset=".853" stop-color="#9c0098"/><stop offset="1" stop-color="#9c0074"/></linearGradient>
<linearGradient id="c222" gradientUnits="userSpaceOnUse" x1="1135" x2="1331"><stop offset="0" stop-color="#0012a0"/><stop offset=".222" stop-color="#0308a0"/><stop offset=".465" stop-color="#35009e"/><stop offset=".828" stop-color="#92009c"/><stop offset=".879" stop-color="#9c0097"/><stop offset="1" stop-color="#9c0079"/></linearGradient>
<linearGradient id="c223" gradientUnits="userSpaceOnUse" x1="1136" x2="1325"><stop offset="0" stop-color="#0011a0"/><stop offset=".221" stop-color="#0307a0"/><stop offset=".463" stop-color="#33009e"/><stop offset=".842" stop-color="#8e009c"/><stop offset=".905" stop-color="#9c0097"/><stop offset="1" stop-color="#9c0080"/></linearGradient>
<linearGradient id="c224" gradientUnits="userSpaceOnUse" x1="1137" x2="1319"><stop offset="0" stop-color="#000fa0"/><stop offset=".217" stop-color="#0206a0"/><stop offset=".478" stop-color="#34009e"/><stop offset=".88" stop-color="#91009c"/><stop offset=".935" stop-color="#9c0097"/><stop offset="1" stop-color="#9c0088"/></linearGradient>
<linearGradient id="c225" gradientUnits="userSpaceOnUse" x1="1138" x2="1314"><stop offset="0" stop-color="#000ea0"/><stop offset=".213" stop-color="#0205a0"/><stop offset=".494" stop-color="#36009e"/><stop offset=".91" stop-color="#92009c"/><stop offset=".955" stop-color="#9c0099"/><stop offset="1" stop-color="#9c008e"/></linearGradient>
<linearGradient id="c226" gradientUnits="userSpaceOnUse" x1="1140" x2="1308"><stop offset="0" stop-color="#000ca0"/><stop offset=".212" stop-color="#0304a0"/><stop offset=".706" stop-color="#5d009d"/><stop offset=".988" stop-color="#9c0099"/><stop offset="1" stop-color="#9c0097"/></linearGradient>
<linearGradient id="c227" gradientUnits="userSpaceOnUse" x1="1141" x2="1302"><stop offset="0" stop-color="#000ba0"/><stop offset=".21" stop-color="#0303a0"/><stop offset=".741" stop-color="#60009d"/><stop offset="1" stop-color="#98009c"/></linearGradient>
<linearGradient id="c228" gradientUnits="userSpaceOnUse" x1="1142" x2="1297"><stop offset="0" stop-color="#0009a0"/><stop offset=".205" stop-color="#0202a0"/><stop offset=".756" stop-color="#5f009d"/><stop offset="1" stop-color="#90009c"/></linearGradient>
<linearGradient id="c229" gradientUnits="userSpaceOnUse" x1="1144" x2="1291"><stop offset="0" stop-color="#0008a0"/><stop offset=".203" stop-color="#0300a0"/><stop offset=".784" stop-color="#5f009d"/><stop offset="1" stop-color="#88009c"/></linearGradient>
<linearGradient id="c230" gradientUnits="userSpaceOnUse" x1="1145" x2="1285"><stop offset="0" stop-color="#0006a0"/><stop offset=".197" stop-color="#0300a0"/><stop offset=".817" stop-color="#5f009d"/><stop offset="1" stop-color="#80009c"/></linearGradient>
<linearGradient id="c231" gradientUnits="userSpaceOnUse" x1="1146" x2="1280"><stop offset="0" stop-color="#0005a0"/><stop offset=".191" stop-color="#0200a0"/><stop offset=".838" stop-color="#5e009d"/><stop offset="1" stop-color="#79009c"/></linearGradient>
<linearGradient id="c232" gradientUnits="userSpaceOnUse" x1="1148" x2="1274"><stop offset="0" stop-color="#0003a0"/><stop offset=".188" stop-color="#0300a0"/><stop offset=".875" stop-color="#5e009d"/><stop offset="1" stop-color="#72009c"/></linearGradient>
<linearGradient id="c233" gradientUnits="userSpaceOnUse" x1="1149" x2="1269"><stop offset="0" stop-color="#0002a1"/><stop offset=".18" stop-color="#0300a0"/><stop offset=".918" stop-color="#60009d"/><stop offset="1" stop-color="#6c009c"/></linearGradient>
<linearGradient id="c234" gradientUnits="userSpaceOnUse" x1="1151" x2="1263"><stop offset="0" stop-color="#0000a1"/><stop offset=".175" stop-color="#0300a0"/><stop offset=".965" stop-color="#60009d"/><stop offset="1" stop-color="#64009d"/></linearGradient>
<linearGradient id="c235" gradientUnits="userSpaceOnUse" x1="1153" x2="1257"><stop offset="0" stop-color="#0000a1"/><stop offset=".17" stop-color="#0400a0"/><stop offset="1" stop-color="#5d009d"/></linearGradient>
<linearGradient id="c236" gradientUnits="userSpaceOnUse" x1="1155" x2="1252"><stop offset="0" stop-color="#0000a1"/><stop offset=".143" stop-color="#0300a0"/><stop offset="1" stop-color="#58009d"/></linearGradient>
<linearGradient id="c237" gradientUnits="userSpaceOnUse" x1="1156" x2="1246"><stop offset="0" stop-color="#0000a1"/><stop offset=".152" stop-color="#0500a0"/><stop offset="1" stop-color="#51009d"/></linearGradient>
<linearGradient id="c238" gradientUnits="userSpaceOnUse" x1="1158" x2="1240"><stop offset="0" stop-color="#0000a1"/><stop offset=".167" stop-color="#0700a0"/><stop offset="1" stop-color="#4b009d"/></linearGradient>
<linearGradient id="c239" gradientUnits="userSpaceOnUse" x1="1161" x2="1235"><stop offset="0" stop-color="#0000a1"/><stop offset="1" stop-color="#46009e"/></linearGradient>
<linearGradient id="c240" gradientUnits="userSpaceOnUse" x1="1163" x2="1229"><stop offset="0" stop-color="#0000a1"/><stop offset="1" stop-color="#40009e"/></linearGradient>
<linearGradient id="c241" gradientUnits="userSpaceOnUse" x1="1166" x2="1223"><stop offset="0" stop-color="#0400a0"/><stop offset="1" stop-color="#3a009e"/></linearGradient>
<linearGradient id="c242" gradientUnits="userSpaceOnUse" x1="1168" x2="1218"><stop offset="0" stop-color="#0600a0"/><stop offset="1" stop-color="#35009e"/></linearGradient>
<linearGradient id="c243" gradientUnits="userSpaceOnUse" x1="1171" x2="1212"><stop offset="0" stop-color="#0900a0"/><stop offset="1" stop-color="#30009e"/></linearGradient>
<linearGradient id="c244" gradientUnits="userSpaceOnUse" x1="1174" x2="1207"><stop offset="0" stop-color="#0d00a0"/><stop offset="1" stop-color="#2b009e"/></linearGradient>
<linearGradient id="c245" gradientUnits="userSpaceOnUse" x1="1177" x2="1201"><stop offset="0" stop-color="#1000a0"/><stop offset="1" stop-color="#26009f"/></linearGradient>
<linearGradient id="c246" gradientUnits="userSpaceOnUse" x1="1180" x2="1195"><stop offset="0" stop-color="#1300a0"/><stop offset="1" stop-color="#21009f"/></linearGradient>
<linearGradient id="c247" gradientUnits="userSpaceOnUse" x1="1184" x2="1190"><stop offset="0" stop-color="#17009f"/><stop offset="1" stop-color="#1d009f"/></linearGradient>
<linearGradient id="d0" gradientUnits="userSpaceOnUse" x1="1284" x2="1289"><stop offset="0" stop-color="#00ff01"/><stop offset="1" stop-color="#05ff00"/></linearGradient>
<linearGradient id="d1" gradientUnits="userSpaceOnUse" x1="1283" x2="1292"><stop offset="0" stop-color="#00ff02"/><stop offset="1" stop-color="#0bff00"/></linearGradient>
<linearGradient id="d2" gradientUnits="userSpaceOnUse" x1="1282" x2="1296"><stop offset="0" stop-color="#00ff04"/><stop offset="1" stop-color="#12ff00"/></linearGradient>
<linearGradient id="d3" gradientUnits="userSpaceOnUse" x1="1281" x2="1299"><stop offset="0" stop-color="#00ff06"/><stop offset="1" stop-color="#18ff00"/></linearGradient>
<linearGradient id="d4" gradientUnits="userSpaceOnUse" x1="1281" x2="1302"><stop offset="0" stop-color="#00ff07"/><stop offset="1" stop-color="#1eff00"/></linearGradient>
<linearGradient id="d5" gradientUnits="userSpaceOnUse" x1="1280" x2="1305"><stop offset="0" stop-color="#00ff09"/><stop offset="1" stop-color="#25ff00"/></linearGradient>
<linearGradient id="d6" gradientUnits="userSpaceOnUse" x1="1279" x2="1309"><stop offset="0" stop-color="#00ff0b"/><stop offset=".938" stop-color="#2aff00"/><stop offset="1" stop-color="#2dff00"/></linearGradient>
<linearGradient id="d7" gradientUnits="userSpaceOnUse" x1="1278" x2="1312"><stop offset="0" stop-color="#00ff0d"/><stop offset=".5" stop-color="#17ff06"/><stop offset="1" stop-color="#3f0"/></linearGradient>
<linearGradient id="d8" gradientUnits="userSpaceOnUse" x1="1278" x2="1315"><stop offset="0" stop-color="#00ff0e"/><stop offset="1" stop-color="#3aff00"/></linearGradient>
<linearGradient id="d9" gradientUnits="userSpaceOnUse" x1="1277" x2="1319"><stop offset="0" stop-color="#00ff10"/><stop offset=".864" stop-color="#39ff01"/><stop offset="1" stop-color="#43ff00"/></linearGradient>
<linearGradient id="d10" gradientUnits="userSpaceOnUse" x1="1276" x2="1322"><stop offset="0" stop-color="#00ff12"/><stop offset=".458" stop-color="#1fff09"/><stop offset="1" stop-color="#4aff00"/></linearGradient>
<linearGradient id="d11" gradientUnits="userSpaceOnUse" x1="1276" x2="1325"><stop offset="0" stop-color="#00ff13"/><stop offset=".96" stop-color="#4eff00"/><stop offset="1" stop-color="#52ff00"/></linearGradient>
<linearGradient id="d12" gradientUnits="userSpaceOnUse" x1="1275" x2="1328"><stop offset="0" stop-color="#00ff15"/><stop offset=".778" stop-color="#43ff04"/><stop offset="1" stop-color="#59ff00"/></linearGradient>
<linearGradient id="d13" gradientUnits="userSpaceOnUse" x1="1274" x2="1332"><stop offset="0" stop-color="#00ff17"/><stop offset=".433" stop-color="#27ff0d"/><stop offset="1" stop-color="#63ff00"/></linearGradient>
<linearGradient id="d14" gradientUnits="userSpaceOnUse" x1="1273" x2="1335"><stop offset="0" stop-color="#00ff19"/><stop offset=".25" stop-color="#16ff13"/><stop offset="1" stop-color="#6bff00"/></linearGradient>
<linearGradient id="d15" gradientUnits="userSpaceOnUse" x1="1273" x2="1338"><stop offset="0" stop-color="#00ff1b"/><stop offset=".667" stop-color="#49ff09"/><stop offset="1" stop-color="#74ff00"/></linearGradient>
<linearGradient id="d16" gradientUnits="userSpaceOnUse" x1="1272" x2="1341"><stop offset="0" stop-color="#00ff1d"/><stop offset=".457" stop-color="#33ff10"/><stop offset="1" stop-color="#7cff00"/></linearGradient>
<linearGradient id="d17" gradientUnits="userSpaceOnUse" x1="1271" x2="1345"><stop offset="0" stop-color="#00ff1f"/><stop offset=".263" stop-color="#1dff17"/><stop offset="1" stop-color="#87ff00"/></linearGradient>
<linearGradient id="d18" gradientUnits="userSpaceOnUse" x1="1271" x2="1348"><stop offset="0" stop-color="#00ff21"/><stop offset=".564" stop-color="#4bff0f"/><stop offset="1" stop-color="#91ff00"/></linearGradient>
<linearGradient id="d19" gradientUnits="userSpaceOnUse" x1="1270" x2="1351"><stop offset="0" stop-color="#00ff23"/><stop offset=".463" stop-color="#40ff13"/><stop offset="1" stop-color="#9aff00"/></linearGradient>
<linearGradient id="d20" gradientUnits="userSpaceOnUse" x1="1269" x2="1355"><stop offset="0" stop-color="#00ff25"/><stop offset=".205" stop-color="#1bff1e"/><stop offset=".841" stop-color="#87ff05"/><stop offset="1" stop-color="#a6ff00"/></linearGradient>
<linearGradient id="d21" gradientUnits="userSpaceOnUse" x1="1268" x2="1358"><stop offset="0" stop-color="#00ff27"/><stop offset=".174" stop-color="#17ff21"/><stop offset=".783" stop-color="#84ff08"/><stop offset="1" stop-color="#b0ff00"/></linearGradient>
<linearGradient id="d22" gradientUnits="userSpaceOnUse" x1="1268" x2="1361"><stop offset="0" stop-color="#00ff29"/><stop offset=".426" stop-color="#46ff19"/><stop offset=".979" stop-color="#b6ff00"/><stop offset="1" stop-color="#bf0"/></linearGradient>
<linearGradient id="d23" gradientUnits="userSpaceOnUse" x1="1267" x2="1364"><stop offset="0" stop-color="#00ff2b"/><stop offset=".286" stop-color="#2fff20"/><stop offset=".816" stop-color="#9bff08"/><stop offset="1" stop-color="#c6ff00"/></linearGradient>
<linearGradient id="d24" gradientUnits="userSpaceOnUse" x1="1266" x2="1368"><stop offset="0" stop-color="#00ff2e"/><stop offset=".135" stop-color="#15ff28"/><stop offset=".654" stop-color="#7fff11"/><stop offset="1" stop-color="#d4ff00"/></linearGradient>
<linearGradient id="d25" gradientUnits="userSpaceOnUse" x1="1265" x2="1371"><stop offset="0" stop-color="#00ff30"/><stop offset=".111" stop-color="#11ff2b"/><stop offset=".611" stop-color="#7bff14"/><stop offset="1" stop-color="#e0ff00"/></linearGradient>
<linearGradient id="d26" gradientUnits="userSpaceOnUse" x1="1265" x2="1374"><stop offset="0" stop-color="#00ff32"/><stop offset=".327" stop-color="#40ff23"/><stop offset=".782" stop-color="#aeff0c"/><stop offset="1" stop-color="#ecff00"/></linearGradient>
<linearGradient id="d27" gradientUnits="userSpaceOnUse" x1="1264" x2="1378"><stop offset="0" stop-color="#00ff34"/><stop offset=".121" stop-color="#15ff2f"/><stop offset=".586" stop-color="#83ff18"/><stop offset=".983" stop-color="#f6ff00"/><stop offset="1" stop-color="#fbff00"/></linearGradient>
<linearGradient id="d28" gradientUnits="userSpaceOnUse" x1="1263" x2="1381"><stop offset="0" stop-color="#00ff37"/><stop offset=".1" stop-color="#11ff32"/><stop offset=".55" stop-color="#7fff1b"/><stop offset=".933" stop-color="#f2ff03"/><stop offset=".983" stop-color="#fffb00"/><stop offset="1" stop-color="#fff600"/></linearGradient>
<linearGradient id="d29" gradientUnits="userSpaceOnUse" x1="1263" x2="1384"><stop offset="0" stop-color="#00ff39"/><stop offset=".311" stop-color="#46ff29"/><stop offset=".705" stop-color="#b3ff13"/><stop offset=".934" stop-color="#ffff03"/><stop offset="1" stop-color="#ffea00"/></linearGradient>
<linearGradient id="d30" gradientUnits="userSpaceOnUse" x1="1262" x2="1387"><stop offset="0" stop-color="#00ff3b"/><stop offset=".175" stop-color="#26ff33"/><stop offset=".571" stop-color="#92ff1c"/><stop offset=".905" stop-color="#fffe06"/><stop offset="1" stop-color="#ffde00"/></linearGradient>
<linearGradient id="d31" gradientUnits="userSpaceOnUse" x1="1261" x2="1391"><stop offset="0" stop-color="#00ff3e"/><stop offset=".076" stop-color="#0fff3a"/><stop offset=".47" stop-color="#7aff24"/><stop offset=".803" stop-color="#e9ff0d"/><stop offset=".864" stop-color="#fffe09"/><stop offset="1" stop-color="#ffd200"/></linearGradient>
<linearGradient id="d32" gradientUnits="userSpaceOnUse" x1="1260" x2="1394"><stop offset="0" stop-color="#00ff40"/><stop offset=".088" stop-color="#12ff3c"/><stop offset=".471" stop-color="#7fff26"/><stop offset=".794" stop-color="#f0ff0f"/><stop offset=".838" stop-color="#fffc0b"/><stop offset="1" stop-color="#ffc800"/></linearGradient>
<linearGradient id="d33" gradientUnits="userSpaceOnUse" x1="1260" x2="1397"><stop offset="0" stop-color="#00ff42"/><stop offset=".232" stop-color="#3cff36"/><stop offset=".58" stop-color="#aaff20"/><stop offset=".797" stop-color="#fdff10"/><stop offset="1" stop-color="#ffbe00"/></linearGradient>
<linearGradient id="d34" gradientUnits="userSpaceOnUse" x1="1259" x2="1400"><stop offset="0" stop-color="#00ff45"/><stop offset=".085" stop-color="#13ff41"/><stop offset=".437" stop-color="#7fff2c"/><stop offset=".746" stop-color="#f3ff15"/><stop offset=".775" stop-color="#ffff13"/><stop offset=".944" stop-color="#ffc403"/><stop offset="1" stop-color="#ffb500"/></linearGradient>
<linearGradient id="d35" gradientUnits="userSpaceOnUse" x1="1258" x2="1404"><stop offset="0" stop-color="#00ff48"/><stop offset=".068" stop-color="#0fff44"/><stop offset=".405" stop-color="#79ff2f"/><stop offset=".703" stop-color="#edff19"/><stop offset=".743" stop-color="#feff16"/><stop offset=".905" stop-color="#ffc505"/><stop offset="1" stop-color="#ffab00"/></linearGradient>
<linearGradient id="d36" gradientUnits="userSpaceOnUse" x1="1258" x2="1407"><stop offset="0" stop-color="#00ff4a"/><stop offset=".24" stop-color="#46ff3c"/><stop offset=".547" stop-color="#b5ff27"/><stop offset=".72" stop-color="#ffff19"/><stop offset=".867" stop-color="#ffc709"/><stop offset="1" stop-color="#ffa300"/></linearGradient>
<linearGradient id="d37" gradientUnits="userSpaceOnUse" x1="1257" x2="1410"><stop offset="0" stop-color="#00ff4d"/><stop offset=".13" stop-color="#24ff45"/><stop offset=".442" stop-color="#92ff31"/><stop offset=".701" stop-color="#fffd1c"/><stop offset=".844" stop-color="#ffc60b"/><stop offset="1" stop-color="#ff9c00"/></linearGradient>
<linearGradient id="d38" gradientUnits="userSpaceOnUse" x1="1256" x2="1414"><stop offset="0" stop-color="#00ff4f"/><stop offset=".05" stop-color="#0cff4d"/><stop offset=".363" stop-color="#78ff39"/><stop offset=".625" stop-color="#e9ff24"/><stop offset=".675" stop-color="#fffd1f"/><stop offset=".812" stop-color="#ffc60e"/><stop offset="1" stop-color="#ff9300"/></linearGradient>
<linearGradient id="d39" gradientUnits="userSpaceOnUse" x1="1255" x2="1417"><stop offset="0" stop-color="#00ff52"/><stop offset=".049" stop-color="#0bff4f"/><stop offset=".354" stop-color="#79ff3c"/><stop offset=".61" stop-color="#eaff27"/><stop offset=".659" stop-color="#fffb22"/><stop offset=".793" stop-color="#ffc410"/><stop offset=".988" stop-color="#ff8f00"/><stop offset="1" stop-color="#ff8c00"/></linearGradient>
<linearGradient id="d40" gradientUnits="userSpaceOnUse" x1="1255" x2="1420"><stop offset="0" stop-color="#0f5"/><stop offset=".181" stop-color="#3bff4a"/><stop offset=".458" stop-color="#acff36"/><stop offset=".627" stop-color="#fdff27"/><stop offset=".783" stop-color="#ffbf12"/><stop offset=".976" stop-color="#ff8b00"/><stop offset="1" stop-color="#ff8600"/></linearGradient>
<linearGradient id="d41" gradientUnits="userSpaceOnUse" x1="1254" x2="1423"><stop offset="0" stop-color="#00ff58"/><stop offset=".071" stop-color="#15ff54"/><stop offset=".353" stop-color="#82ff40"/><stop offset=".588" stop-color="#f3ff2d"/><stop offset=".612" stop-color="#ffff2a"/><stop offset=".741" stop-color="#ffc517"/><stop offset=".918" stop-color="#ff9205"/><stop offset="1" stop-color="#ff8000"/></linearGradient>
<linearGradient id="d42" gradientUnits="userSpaceOnUse" x1="1253" x2="1427"><stop offset="0" stop-color="#00ff5b"/><stop offset=".045" stop-color="#0cff58"/><stop offset=".318" stop-color="#78ff45"/><stop offset=".545" stop-color="#e6ff32"/><stop offset=".591" stop-color="#ffff2e"/><stop offset=".716" stop-color="#ffc51a"/><stop offset=".886" stop-color="#ff9107"/><stop offset="1" stop-color="#ff7900"/></linearGradient>
<linearGradient id="d43" gradientUnits="userSpaceOnUse" x1="1252" x2="1430"><stop offset="0" stop-color="#00ff5e"/><stop offset=".044" stop-color="#0bff5b"/><stop offset=".311" stop-color="#78ff49"/><stop offset=".533" stop-color="#e8ff36"/><stop offset=".578" stop-color="#fffd31"/><stop offset=".7" stop-color="#ffc41c"/><stop offset=".867" stop-color="#ff9009"/><stop offset="1" stop-color="#ff7300"/></linearGradient>
<linearGradient id="d44" gradientUnits="userSpaceOnUse" x1="1252" x2="1433"><stop offset="0" stop-color="#00ff60"/><stop offset=".088" stop-color="#1eff5b"/><stop offset=".341" stop-color="#8cff49"/><stop offset=".56" stop-color="#fffc34"/><stop offset=".681" stop-color="#ffc21f"/><stop offset=".846" stop-color="#ff8f0b"/><stop offset="1" stop-color="#ff6e00"/></linearGradient>
<linearGradient id="d45" gradientUnits="userSpaceOnUse" x1="1251" x2="1437"><stop offset="0" stop-color="#00ff64"/><stop offset=".043" stop-color="#0dff61"/><stop offset=".287" stop-color="#77ff50"/><stop offset=".5" stop-color="#e8ff3d"/><stop offset=".543" stop-color="#fffc38"/><stop offset=".66" stop-color="#ffc222"/><stop offset=".819" stop-color="#ff8e0e"/><stop offset="1" stop-color="#ff6800"/></linearGradient>
<linearGradient id="d46" gradientUnits="userSpaceOnUse" x1="1250" x2="1440"><stop offset="0" stop-color="#00ff67"/><stop offset=".031" stop-color="#08ff65"/><stop offset=".271" stop-color="#72ff54"/><stop offset=".479" stop-color="#e4ff42"/><stop offset=".521" stop-color="#fdff3e"/><stop offset=".646" stop-color="#ffc024"/><stop offset=".802" stop-color="#ff8d10"/><stop offset="1" stop-color="#ff6300"/></linearGradient>
<linearGradient id="d47" gradientUnits="userSpaceOnUse" x1="1250" x2="1443"><stop offset="0" stop-color="#00ff6a"/><stop offset=".134" stop-color="#36ff61"/><stop offset=".351" stop-color="#a1ff50"/><stop offset=".505" stop-color="#feff41"/><stop offset=".629" stop-color="#ffbf27"/><stop offset=".784" stop-color="#ff8c12"/><stop offset="1" stop-color="#ff5e00"/></linearGradient>
<linearGradient id="d48" gradientUnits="userSpaceOnUse" x1="1249" x2="1446"><stop offset="0" stop-color="#00ff6d"/><stop offset=".051" stop-color="#12ff6a"/><stop offset=".273" stop-color="#7cff59"/><stop offset=".465" stop-color="#ecff48"/><stop offset=".495" stop-color="#fffe45"/><stop offset=".596" stop-color="#ffc72d"/><stop offset=".737" stop-color="#ff9317"/><stop offset=".939" stop-color="#ff6403"/><stop offset="1" stop-color="#ff5a00"/></linearGradient>
<linearGradient id="d49" gradientUnits="userSpaceOnUse" x1="1248" x2="1450"><stop offset="0" stop-color="#00ff70"/><stop offset=".029" stop-color="#08ff6e"/><stop offset=".255" stop-color="#76ff5e"/><stop offset=".441" stop-color="#e6ff4d"/><stop offset=".48" stop-color="#fffe49"/><stop offset=".578" stop-color="#ffc631"/><stop offset=".716" stop-color="#ff921a"/><stop offset=".912" stop-color="#ff6305"/><stop offset="1" stop-color="#ff5400"/></linearGradient>
<linearGradient id="d50" gradientUnits="userSpaceOnUse" x1="1247" x2="1453"><stop offset="0" stop-color="#00ff74"/><stop offset=".029" stop-color="#08ff72"/><stop offset=".24" stop-color="#71ff62"/><stop offset=".423" stop-color="#e1ff52"/><stop offset=".471" stop-color="#fffc4c"/><stop offset=".567" stop-color="#ffc433"/><stop offset=".702" stop-color="#ff911c"/><stop offset=".894" stop-color="#ff6207"/><stop offset="1" stop-color="#ff5000"/></linearGradient>
<linearGradient id="d51" gradientUnits="userSpaceOnUse" x1="1247" x2="1456"><stop offset="0" stop-color="#0f7"/><stop offset=".067" stop-color="#1cff72"/><stop offset=".267" stop-color="#85ff63"/><stop offset=".438" stop-color="#f5ff53"/><stop offset=".457" stop-color="#fffc50"/><stop offset=".552" stop-color="#ffc436"/><stop offset=".686" stop-color="#ff901e"/><stop offset=".876" stop-color="#ff6109"/><stop offset="1" stop-color="#ff4c00"/></linearGradient>
<linearGradient id="d52" gradientUnits="userSpaceOnUse" x1="1246" x2="1459"><stop offset="0" stop-color="#00ff7a"/><stop offset=".028" stop-color="#09ff78"/><stop offset=".234" stop-color="#75ff69"/><stop offset=".411" stop-color="#e9ff59"/><stop offset=".439" stop-color="#feff56"/><stop offset=".542" stop-color="#ffc239"/><stop offset=".673" stop-color="#ff8e20"/><stop offset=".86" stop-color="#ff600a"/><stop offset="1" stop-color="#ff4800"/></linearGradient>
<linearGradient id="d53" gradientUnits="userSpaceOnUse" x1="1245" x2="1463"><stop offset="0" stop-color="#00ff7e"/><stop offset=".027" stop-color="#09ff7c"/><stop offset=".227" stop-color="#75ff6d"/><stop offset=".391" stop-color="#e3ff5e"/><stop offset=".427" stop-color="#feff5b"/><stop offset=".527" stop-color="#ffc13c"/><stop offset=".655" stop-color="#ff8d23"/><stop offset=".836" stop-color="#ff5f0c"/><stop offset="1" stop-color="#f40"/></linearGradient>
<linearGradient id="d54" gradientUnits="userSpaceOnUse" x1="1245" x2="1466"><stop offset="0" stop-color="#00ff81"/><stop offset=".099" stop-color="#30ff7a"/><stop offset=".279" stop-color="#9cff6c"/><stop offset=".414" stop-color="#feff5f"/><stop offset=".514" stop-color="#ffc040"/><stop offset=".64" stop-color="#ff8c25"/><stop offset=".82" stop-color="#ff5e0e"/><stop offset="1" stop-color="#ff4100"/></linearGradient>
<linearGradient id="d55" gradientUnits="userSpaceOnUse" x1="1244" x2="1469"><stop offset="0" stop-color="#00ff85"/><stop offset=".035" stop-color="#0eff82"/><stop offset=".221" stop-color="#7aff75"/><stop offset=".381" stop-color="#ebff66"/><stop offset=".407" stop-color="#fffe63"/><stop offset=".496" stop-color="#ffc345"/><stop offset=".611" stop-color="#ff912b"/><stop offset=".779" stop-color="#ff6212"/><stop offset="1" stop-color="#ff3d00"/></linearGradient>
<linearGradient id="d56" gradientUnits="userSpaceOnUse" x1="1243" x2="1473"><stop offset="0" stop-color="#00ff89"/><stop offset=".026" stop-color="#09ff87"/><stop offset=".207" stop-color="#74ff7a"/><stop offset=".362" stop-color="#e5ff6c"/><stop offset=".397" stop-color="#fffd67"/><stop offset=".483" stop-color="#ffc348"/><stop offset=".595" stop-color="#ff902d"/><stop offset=".759" stop-color="#ff6215"/><stop offset="1" stop-color="#ff3900"/></linearGradient>
<linearGradient id="d57" gradientUnits="userSpaceOnUse" x1="1242" x2="1476"><stop offset="0" stop-color="#00ff8c"/><stop offset=".025" stop-color="#09ff8b"/><stop offset=".203" stop-color="#74ff7e"/><stop offset=".356" stop-color="#e6ff70"/><stop offset=".381" stop-color="#fcff6e"/><stop offset=".483" stop-color="#ffbc49"/><stop offset=".602" stop-color="#ff892c"/><stop offset=".771" stop-color="#ff5b13"/><stop offset="1" stop-color="#ff3600"/></linearGradient>
<linearGradient id="d58" gradientUnits="userSpaceOnUse" x1="1242" x2="1479"><stop offset="0" stop-color="#00ff90"/><stop offset=".05" stop-color="#19ff8d"/><stop offset=".218" stop-color="#84ff80"/><stop offset=".361" stop-color="#f4ff73"/><stop offset=".378" stop-color="#fffb70"/><stop offset=".462" stop-color="#ffc04f"/><stop offset=".571" stop-color="#ff8e32"/><stop offset=".731" stop-color="#ff5f18"/><stop offset=".975" stop-color="#ff3601"/><stop offset="1" stop-color="#f30"/></linearGradient>
<linearGradient id="d59" gradientUnits="userSpaceOnUse" x1="1241" x2="1482"><stop offset="0" stop-color="#00ff94"/><stop offset=".025" stop-color="#0aff92"/><stop offset=".19" stop-color="#73ff87"/><stop offset=".331" stop-color="#e1ff7a"/><stop offset=".364" stop-color="#feff77"/><stop offset=".446" stop-color="#ffc354"/><stop offset=".554" stop-color="#ff8f36"/><stop offset=".711" stop-color="#ff601b"/><stop offset=".942" stop-color="#ff3703"/><stop offset="1" stop-color="#ff3000"/></linearGradient>
<linearGradient id="d60" gradientUnits="userSpaceOnUse" x1="1240" x2="1486"><stop offset="0" stop-color="#00ff98"/><stop offset=".016" stop-color="#05ff97"/><stop offset=".177" stop-color="#6dff8c"/><stop offset=".315" stop-color="#daff80"/><stop offset=".355" stop-color="#ffff7c"/><stop offset=".435" stop-color="#ffc258"/><stop offset=".54" stop-color="#ff8e39"/><stop offset=".694" stop-color="#ff5f1d"/><stop offset=".919" stop-color="#ff3605"/><stop offset="1" stop-color="#ff2c00"/></linearGradient>
<linearGradient id="d61" gradientUnits="userSpaceOnUse" x1="1239" x2="1489"><stop offset="0" stop-color="#00ff9c"/><stop offset=".024" stop-color="#09ff9b"/><stop offset=".183" stop-color="#74ff90"/><stop offset=".317" stop-color="#e3ff84"/><stop offset=".349" stop-color="#fffd80"/><stop offset=".421" stop-color="#ffc55e"/><stop offset=".524" stop-color="#ff903e"/><stop offset=".667" stop-color="#ff6221"/><stop offset=".881" stop-color="#ff3908"/><stop offset="1" stop-color="#ff2a00"/></linearGradient>
<linearGradient id="d62" gradientUnits="userSpaceOnUse" x1="1239" x2="1492"><stop offset="0" stop-color="#00ffa0"/><stop offset=".031" stop-color="#10ff9e"/><stop offset=".189" stop-color="#7eff93"/><stop offset=".323" stop-color="#f1ff88"/><stop offset=".339" stop-color="#fffd86"/><stop offset=".409" stop-color="#ffc562"/><stop offset=".504" stop-color="#ff9243"/><stop offset=".646" stop-color="#ff6325"/><stop offset=".858" stop-color="#ff390a"/><stop offset="1" stop-color="#ff2700"/></linearGradient>
<linearGradient id="d63" gradientUnits="userSpaceOnUse" x1="1238" x2="1496"><stop offset="0" stop-color="#00ffa4"/><stop offset=".015" stop-color="#05ffa3"/><stop offset=".169" stop-color="#72ff99"/><stop offset=".3" stop-color="#e3ff8f"/><stop offset=".331" stop-color="#fffc8a"/><stop offset=".4" stop-color="#ffc466"/><stop offset=".492" stop-color="#ff9146"/><stop offset=".631" stop-color="#ff6227"/><stop offset=".838" stop-color="#ff380c"/><stop offset="1" stop-color="#ff2400"/></linearGradient>
<linearGradient id="d64" gradientUnits="userSpaceOnUse" x1="1237" x2="1499"><stop offset="0" stop-color="#00ffa9"/><stop offset=".015" stop-color="#04ffa8"/><stop offset=".167" stop-color="#72ff9e"/><stop offset=".295" stop-color="#e5ff94"/><stop offset=".318" stop-color="#fcff92"/><stop offset=".402" stop-color="#ffbd66"/><stop offset=".5" stop-color="#ff8944"/><stop offset=".644" stop-color="#ff5a25"/><stop offset=".856" stop-color="#ff330b"/><stop offset="1" stop-color="#ff2100"/></linearGradient>
<linearGradient id="d65" gradientUnits="userSpaceOnUse" x1="1237" x2="1502"><stop offset="0" stop-color="#00ffad"/><stop offset=".038" stop-color="#16ffab"/><stop offset=".18" stop-color="#83ffa2"/><stop offset=".301" stop-color="#f4ff98"/><stop offset=".316" stop-color="#fffa94"/><stop offset=".383" stop-color="#ffc16d"/><stop offset=".474" stop-color="#ff8f4b"/><stop offset=".602" stop-color="#ff612c"/><stop offset=".797" stop-color="#ff3811"/><stop offset="1" stop-color="#ff1f00"/></linearGradient>
<linearGradient id="d66" gradientUnits="userSpaceOnUse" x1="1236" x2="1505"><stop offset="0" stop-color="#00ffb2"/><stop offset=".022" stop-color="#0bffb0"/><stop offset=".163" stop-color="#77ffa8"/><stop offset=".281" stop-color="#e6ff9f"/><stop offset=".304" stop-color="#feff9d"/><stop offset=".37" stop-color="#ffc574"/><stop offset=".459" stop-color="#ff9050"/><stop offset=".585" stop-color="#ff6230"/><stop offset=".778" stop-color="#ff3813"/><stop offset="1" stop-color="#ff1c00"/></linearGradient>
<linearGradient id="d67" gradientUnits="userSpaceOnUse" x1="1235" x2="1509"><stop offset="0" stop-color="#00ffb6"/><stop offset=".014" stop-color="#05ffb5"/><stop offset=".152" stop-color="#70ffad"/><stop offset=".268" stop-color="#e0ffa5"/><stop offset=".297" stop-color="#ffffa3"/><stop offset=".355" stop-color="#ffc97c"/><stop offset=".442" stop-color="#ff9356"/><stop offset=".565" stop-color="#ff6334"/><stop offset=".746" stop-color="#ff3a16"/><stop offset="1" stop-color="#ff1a00"/></linearGradient>
<linearGradient id="d68" gradientUnits="userSpaceOnUse" x1="1234" x2="1512"><stop offset="0" stop-color="#0fb"/><stop offset=".014" stop-color="#04ffba"/><stop offset=".15" stop-color="#71ffb3"/><stop offset=".264" stop-color="#e2ffab"/><stop offset=".293" stop-color="#fffca7"/><stop offset=".357" stop-color="#ffc17c"/><stop offset=".443" stop-color="#ff8e56"/><stop offset=".564" stop-color="#ff6034"/><stop offset=".75" stop-color="#ff3616"/><stop offset="1" stop-color="#ff1700"/></linearGradient>
<linearGradient id="d69" gradientUnits="userSpaceOnUse" x1="1234" x2="1515"><stop offset="0" stop-color="#00ffc0"/><stop offset=".021" stop-color="#0cffbf"/><stop offset=".149" stop-color="#75ffb8"/><stop offset=".262" stop-color="#e9ffb0"/><stop offset=".284" stop-color="#fffdad"/><stop offset=".34" stop-color="#ffc684"/><stop offset=".418" stop-color="#ff945e"/><stop offset=".532" stop-color="#ff653b"/><stop offset=".702" stop-color="#ff3c1c"/><stop offset=".972" stop-color="#ff1801"/><stop offset="1" stop-color="#ff1500"/></linearGradient>
<linearGradient id="d70" gradientUnits="userSpaceOnUse" x1="1233" x2="1518"><stop offset="0" stop-color="#00ffc5"/><stop offset=".014" stop-color="#06ffc4"/><stop offset=".14" stop-color="#6fffbe"/><stop offset=".252" stop-color="#e3ffb7"/><stop offset=".273" stop-color="#fbffb5"/><stop offset=".301" stop-color="#ffe4a0"/><stop offset=".364" stop-color="#ffb078"/><stop offset=".455" stop-color="#ff7e52"/><stop offset=".587" stop-color="#ff512f"/><stop offset=".79" stop-color="#ff2b11"/><stop offset="1" stop-color="#ff1300"/></linearGradient>
<linearGradient id="d71" gradientUnits="userSpaceOnUse" x1="1232" x2="1522"><stop offset="0" stop-color="#00ffca"/><stop offset=".014" stop-color="#05ffc9"/><stop offset=".137" stop-color="#6fffc3"/><stop offset=".24" stop-color="#dcffbd"/><stop offset=".267" stop-color="#fcffbc"/><stop offset=".336" stop-color="#ffbe88"/><stop offset=".418" stop-color="#ff8a5f"/><stop offset=".534" stop-color="#ff5c3b"/><stop offset=".712" stop-color="#ff331b"/><stop offset="1" stop-color="#f10"/></linearGradient>
<linearGradient id="d72" gradientUnits="userSpaceOnUse" x1="1231" x2="1525"><stop offset="0" stop-color="#00ffcf"/><stop offset=".014" stop-color="#04ffce"/><stop offset=".135" stop-color="#70ffc9"/><stop offset=".236" stop-color="#deffc4"/><stop offset=".264" stop-color="#ffffc2"/><stop offset=".318" stop-color="#ffc794"/><stop offset=".392" stop-color="#ff936a"/><stop offset=".5" stop-color="#ff6344"/><stop offset=".662" stop-color="#ff3a22"/><stop offset=".919" stop-color="#ff1605"/><stop offset="1" stop-color="#ff0f00"/></linearGradient>
<linearGradient id="d73" gradientUnits="userSpaceOnUse" x1="1231" x2="1528"><stop offset="0" stop-color="#00ffd4"/><stop offset=".013" stop-color="#06ffd3"/><stop offset=".134" stop-color="#74ffcf"/><stop offset=".235" stop-color="#e5ffca"/><stop offset=".255" stop-color="#feffc9"/><stop offset=".315" stop-color="#ffc195"/><stop offset=".389" stop-color="#ff8e6b"/><stop offset=".497" stop-color="#ff6045"/><stop offset=".658" stop-color="#ff3723"/><stop offset=".919" stop-color="#ff1405"/><stop offset="1" stop-color="#ff0d00"/></linearGradient>
<linearGradient id="d74" gradientUnits="userSpaceOnUse" x1="1230" x2="1532"><stop offset="0" stop-color="#00ffd9"/><stop offset=".013" stop-color="#06ffd9"/><stop offset=".125" stop-color="#6dffd5"/><stop offset=".224" stop-color="#deffd1"/><stop offset=".25" stop-color="#fffecf"/><stop offset=".303" stop-color="#ffc59e"/><stop offset=".375" stop-color="#ff9172"/><stop offset=".48" stop-color="#ff6149"/><stop offset=".638" stop-color="#ff3826"/><stop offset=".888" stop-color="#ff1408"/><stop offset="1" stop-color="#ff0a00"/></linearGradient>
<linearGradient id="d75" gradientUnits="userSpaceOnUse" x1="1229" x2="1535"><stop offset="0" stop-color="#00ffdf"/><stop offset=".013" stop-color="#05ffde"/><stop offset=".123" stop-color="#6effdb"/><stop offset=".221" stop-color="#e0ffd7"/><stop offset=".247" stop-color="#fffcd4"/><stop offset=".299" stop-color="#ffc3a2"/><stop offset=".37" stop-color="#ff8f74"/><stop offset=".474" stop-color="#ff604b"/><stop offset=".63" stop-color="#ff3627"/><stop offset=".877" stop-color="#ff1309"/><stop offset="1" stop-color="#ff0800"/></linearGradient>
<linearGradient id="d76" gradientUnits="userSpaceOnUse" x1="1229" x2="1538"><stop offset="0" stop-color="#00ffe4"/><stop offset=".019" stop-color="#0dffe4"/><stop offset=".129" stop-color="#79ffe1"/><stop offset=".219" stop-color="#e7ffde"/><stop offset=".239" stop-color="#fffddb"/><stop offset=".29" stop-color="#ffc2a7"/><stop offset=".361" stop-color="#ff8e78"/><stop offset=".465" stop-color="#ff5f4e"/><stop offset=".619" stop-color="#ff3529"/><stop offset=".865" stop-color="#ff130a"/><stop offset="1" stop-color="#ff0700"/></linearGradient>
<linearGradient id="d77" gradientUnits="userSpaceOnUse" x1="1228" x2="1541"><stop offset="0" stop-color="#00ffea"/><stop offset=".013" stop-color="#06ffea"/><stop offset=".121" stop-color="#73ffe8"/><stop offset=".21" stop-color="#e1ffe6"/><stop offset=".229" stop-color="#fbffe5"/><stop offset=".255" stop-color="#ffe1ca"/><stop offset=".312" stop-color="#ffaa97"/><stop offset=".389" stop-color="#ff7b6b"/><stop offset=".503" stop-color="#ff4f43"/><stop offset=".682" stop-color="#ff281f"/><stop offset=".975" stop-color="#ff0701"/><stop offset="1" stop-color="#ff0500"/></linearGradient>
<linearGradient id="d78" gradientUnits="userSpaceOnUse" x1="1227" x2="1545"><stop offset="0" stop-color="#00fff0"/><stop offset=".012" stop-color="#06fff0"/><stop offset=".119" stop-color="#73ffee"/><stop offset=".206" stop-color="#e2ffed"/><stop offset=".225" stop-color="#fdffec"/><stop offset=".281" stop-color="#ffbfb0"/><stop offset=".35" stop-color="#ff8b7f"/><stop offset=".45" stop-color="#ff5c53"/><stop offset=".6" stop-color="#ff332d"/><stop offset=".838" stop-color="#ff110c"/><stop offset="1" stop-color="#ff0300"/></linearGradient>
<linearGradient id="d79" gradientUnits="userSpaceOnUse" x1="1226" x2="1548"><stop offset="0" stop-color="#00fff6"/><stop offset=".012" stop-color="#05fff6"/><stop offset=".111" stop-color="#6cfff5"/><stop offset=".198" stop-color="#dbfff4"/><stop offset=".222" stop-color="#fffff4"/><stop offset=".265" stop-color="#ffc9c0"/><stop offset=".327" stop-color="#ff958d"/><stop offset=".414" stop-color="#ff6661"/><stop offset=".543" stop-color="#ff3d39"/><stop offset=".747" stop-color="#ff1916"/><stop offset="1" stop-color="#ff0100"/></linearGradient>
<linearGradient id="d80" gradientUnits="userSpaceOnUse" x1="1226" x2="1550"><stop offset="0" stop-color="#00fffc"/><stop offset=".012" stop-color="#07fffc"/><stop offset=".11" stop-color="#70fffc"/><stop offset=".196" stop-color="#e2fffc"/><stop offset=".215" stop-color="#fdfffc"/><stop offset=".264" stop-color="#ffc3c1"/><stop offset=".325" stop-color="#ff908f"/><stop offset=".411" stop-color="#ff6362"/><stop offset=".54" stop-color="#ff3b3a"/><stop offset=".748" stop-color="#ff1717"/><stop offset="1" stop-color="#f00"/></linearGradient>
<linearGradient id="d81" gradientUnits="userSpaceOnUse" x1="1225" x2="1548"><stop offset="0" stop-color="#00fcff"/><stop offset=".012" stop-color="#06fbff"/><stop offset=".111" stop-color="#70fbff"/><stop offset=".198" stop-color="#e1faff"/><stop offset=".216" stop-color="#fcfaff"/><stop offset=".272" stop-color="#ffbabe"/><stop offset=".34" stop-color="#ff8689"/><stop offset=".432" stop-color="#ff5a5d"/><stop offset=".574" stop-color="#ff3234"/><stop offset=".802" stop-color="#ff1012"/><stop offset="1" stop-color="#ff0001"/></linearGradient>
<linearGradient id="d82" gradientUnits="userSpaceOnUse" x1="1224" x2="1543"><stop offset="0" stop-color="#00f5ff"/><stop offset=".012" stop-color="#05f5ff"/><stop offset=".113" stop-color="#6df4ff"/><stop offset=".2" stop-color="#dcf3ff"/><stop offset=".225" stop-color="#fff1fe"/><stop offset=".269" stop-color="#ffbdc8"/><stop offset=".331" stop-color="#ff8c94"/><stop offset=".419" stop-color="#ff5f66"/><stop offset=".55" stop-color="#ff383d"/><stop offset=".762" stop-color="#ff1519"/><stop offset="1" stop-color="#ff0003"/></linearGradient>
<linearGradient id="d83" gradientUnits="userSpaceOnUse" x1="1224" x2="1538"><stop offset="0" stop-color="#00efff"/><stop offset=".019" stop-color="#0defff"/><stop offset=".12" stop-color="#75edff"/><stop offset=".209" stop-color="#e4ebff"/><stop offset=".228" stop-color="#ffeaff"/><stop offset=".278" stop-color="#ffb3c4"/><stop offset=".342" stop-color="#ff8492"/><stop offset=".437" stop-color="#ff5863"/><stop offset=".576" stop-color="#ff323a"/><stop offset=".797" stop-color="#ff1117"/><stop offset="1" stop-color="#ff0004"/></linearGradient>
<linearGradient id="d84" gradientUnits="userSpaceOnUse" x1="1223" x2="1534"><stop offset="0" stop-color="#00e9ff"/><stop offset=".013" stop-color="#07e9ff"/><stop offset=".122" stop-color="#73e6ff"/><stop offset=".212" stop-color="#e0e4ff"/><stop offset=".231" stop-color="#fae3ff"/><stop offset=".244" stop-color="#ffd7f2"/><stop offset=".295" stop-color="#ffa5bb"/><stop offset=".365" stop-color="#ff7789"/><stop offset=".468" stop-color="#ff4d5b"/><stop offset=".622" stop-color="#ff2934"/><stop offset=".872" stop-color="#ff0911"/><stop offset="1" stop-color="#ff0006"/></linearGradient>
<linearGradient id="d85" gradientUnits="userSpaceOnUse" x1="1222" x2="1529"><stop offset="0" stop-color="#00e4ff"/><stop offset=".013" stop-color="#06e3ff"/><stop offset=".123" stop-color="#70e0ff"/><stop offset=".221" stop-color="#e4dcff"/><stop offset=".24" stop-color="#fedcff"/><stop offset=".292" stop-color="#ffa8c5"/><stop offset=".364" stop-color="#ff7890"/><stop offset=".461" stop-color="#ff5062"/><stop offset=".61" stop-color="#ff2b39"/><stop offset=".851" stop-color="#ff0b15"/><stop offset="1" stop-color="#ff0008"/></linearGradient>
<linearGradient id="d86" gradientUnits="userSpaceOnUse" x1="1221" x2="1524"><stop offset="0" stop-color="#00deff"/><stop offset=".013" stop-color="#05deff"/><stop offset=".125" stop-color="#6edaff"/><stop offset=".224" stop-color="#e0d6ff"/><stop offset=".25" stop-color="#ffd2fc"/><stop offset=".303" stop-color="#ffa0c3"/><stop offset=".375" stop-color="#ff738f"/><stop offset=".48" stop-color="#ff4a60"/><stop offset=".638" stop-color="#ff2637"/><stop offset=".888" stop-color="#ff0814"/><stop offset="1" stop-color="#ff000a"/></linearGradient>
<linearGradient id="d87" gradientUnits="userSpaceOnUse" x1="1221" x2="1519"><stop offset="0" stop-color="#00d9ff"/><stop offset=".02" stop-color="#0cd8ff"/><stop offset=".133" stop-color="#75d3ff"/><stop offset=".233" stop-color="#e7cfff"/><stop offset=".253" stop-color="#ffccfd"/><stop offset=".307" stop-color="#ff9cc5"/><stop offset=".38" stop-color="#ff7091"/><stop offset=".487" stop-color="#ff4862"/><stop offset=".647" stop-color="#ff2538"/><stop offset=".9" stop-color="#ff0715"/><stop offset="1" stop-color="#ff000c"/></linearGradient>
<linearGradient id="d88" gradientUnits="userSpaceOnUse" x1="1220" x2="1515"><stop offset="0" stop-color="#00d3ff"/><stop offset=".014" stop-color="#06d3ff"/><stop offset=".135" stop-color="#73cdff"/><stop offset=".236" stop-color="#e3c8ff"/><stop offset=".257" stop-color="#fdc7ff"/><stop offset=".324" stop-color="#ff8fbc"/><stop offset=".405" stop-color="#ff6488"/><stop offset=".52" stop-color="#ff3e5a"/><stop offset=".696" stop-color="#ff1d32"/><stop offset=".98" stop-color="#ff0010"/><stop offset="1" stop-color="#ff000e"/></linearGradient>
<linearGradient id="d89" gradientUnits="userSpaceOnUse" x1="1219" x2="1510"><stop offset="0" stop-color="#00ceff"/><stop offset=".014" stop-color="#05ceff"/><stop offset=".137" stop-color="#71c8ff"/><stop offset=".24" stop-color="#dfc2ff"/><stop offset=".267" stop-color="#ffbffe"/><stop offset=".322" stop-color="#ff92c5"/><stop offset=".397" stop-color="#ff6892"/><stop offset=".507" stop-color="#ff4263"/><stop offset=".671" stop-color="#ff213a"/><stop offset=".932" stop-color="#ff0416"/><stop offset="1" stop-color="#ff0010"/></linearGradient>
<linearGradient id="d90" gradientUnits="userSpaceOnUse" x1="1218" x2="1505"><stop offset="0" stop-color="#00c9ff"/><stop offset=".014" stop-color="#04c8ff"/><stop offset=".139" stop-color="#6fc2ff"/><stop offset=".243" stop-color="#dbbcff"/><stop offset=".271" stop-color="#fcbaff"/><stop offset=".34" stop-color="#ff86be"/><stop offset=".424" stop-color="#ff5e8a"/><stop offset=".542" stop-color="#ff3a5d"/><stop offset=".722" stop-color="#ff1a34"/><stop offset="1" stop-color="#ff0012"/></linearGradient>
<linearGradient id="d91" gradientUnits="userSpaceOnUse" x1="1218" x2="1501"><stop offset="0" stop-color="#00c4ff"/><stop offset=".021" stop-color="#0bc3ff"/><stop offset=".148" stop-color="#76bcff"/><stop offset=".254" stop-color="#e3b5ff"/><stop offset=".275" stop-color="#fbb3ff"/><stop offset=".303" stop-color="#ff9ee4"/><stop offset=".366" stop-color="#ff76b0"/><stop offset=".458" stop-color="#ff507e"/><stop offset=".592" stop-color="#ff2e52"/><stop offset=".796" stop-color="#ff112b"/><stop offset="1" stop-color="#ff0014"/></linearGradient>
<linearGradient id="d92" gradientUnits="userSpaceOnUse" x1="1217" x2="1496"><stop offset="0" stop-color="#00bfff"/><stop offset=".014" stop-color="#05beff"/><stop offset=".143" stop-color="#6db7ff"/><stop offset=".257" stop-color="#dfafff"/><stop offset=".286" stop-color="#ffadff"/><stop offset=".343" stop-color="#ff84c8"/><stop offset=".421" stop-color="#ff5e95"/><stop offset=".536" stop-color="#ff3b66"/><stop offset=".707" stop-color="#ff1b3d"/><stop offset=".979" stop-color="#ff0119"/><stop offset="1" stop-color="#ff0017"/></linearGradient>
<linearGradient id="d93" gradientUnits="userSpaceOnUse" x1="1216" x2="1491"><stop offset="0" stop-color="#00baff"/><stop offset=".014" stop-color="#05baff"/><stop offset=".152" stop-color="#71b1ff"/><stop offset=".268" stop-color="#e2a9ff"/><stop offset=".297" stop-color="#ffa4fc"/><stop offset=".362" stop-color="#ff79c1"/><stop offset=".449" stop-color="#ff548d"/><stop offset=".572" stop-color="#ff3360"/><stop offset=".761" stop-color="#ff1537"/><stop offset="1" stop-color="#ff0019"/></linearGradient>
<linearGradient id="d94" gradientUnits="userSpaceOnUse" x1="1216" x2="1486"><stop offset="0" stop-color="#00b6ff"/><stop offset=".029" stop-color="#11b4ff"/><stop offset=".169" stop-color="#7fabff"/><stop offset=".287" stop-color="#f1a2ff"/><stop offset=".301" stop-color="#ffa0fd"/><stop offset=".368" stop-color="#ff76c3"/><stop offset=".456" stop-color="#ff518f"/><stop offset=".581" stop-color="#ff3161"/><stop offset=".772" stop-color="#ff1338"/><stop offset="1" stop-color="#ff001b"/></linearGradient>
<linearGradient id="d95" gradientUnits="userSpaceOnUse" x1="1215" x2="1482"><stop offset="0" stop-color="#00b1ff"/><stop offset=".022" stop-color="#0bb0ff"/><stop offset=".164" stop-color="#76a7ff"/><stop offset=".284" stop-color="#e69dff"/><stop offset=".306" stop-color="#fd9bff"/><stop offset=".381" stop-color="#ff6fc0"/><stop offset=".47" stop-color="#ff4c8e"/><stop offset=".604" stop-color="#ff2c5e"/><stop offset=".806" stop-color="#ff0f35"/><stop offset="1" stop-color="#ff001e"/></linearGradient>
<linearGradient id="d96" gradientUnits="userSpaceOnUse" x1="1214" x2="1477"><stop offset="0" stop-color="#00adff"/><stop offset=".015" stop-color="#05acff"/><stop offset=".159" stop-color="#6ea2ff"/><stop offset=".288" stop-color="#e298ff"/><stop offset=".318" stop-color="#ff94fd"/><stop offset=".386" stop-color="#ff6dc3"/><stop offset=".477" stop-color="#ff4b90"/><stop offset=".606" stop-color="#ff2c63"/><stop offset=".803" stop-color="#ff1039"/><stop offset="1" stop-color="#ff0020"/></linearGradient>
<linearGradient id="d97" gradientUnits="userSpaceOnUse" x1="1213" x2="1472"><stop offset="0" stop-color="#00a8ff"/><stop offset=".015" stop-color="#04a7ff"/><stop offset=".169" stop-color="#729dff"/><stop offset=".3" stop-color="#e592ff"/><stop offset=".323" stop-color="#fc90ff"/><stop offset=".408" stop-color="#ff64bd"/><stop offset=".508" stop-color="#ff4289"/><stop offset=".654" stop-color="#ff245b"/><stop offset=".869" stop-color="#ff0933"/><stop offset="1" stop-color="#ff0023"/></linearGradient>
<linearGradient id="d98" gradientUnits="userSpaceOnUse" x1="1213" x2="1468"><stop offset="0" stop-color="#00a4ff"/><stop offset=".031" stop-color="#10a2ff"/><stop offset=".18" stop-color="#7997ff"/><stop offset=".312" stop-color="#ed8cff"/><stop offset=".328" stop-color="#fc8aff"/><stop offset=".414" stop-color="#ff60bd"/><stop offset=".516" stop-color="#ff3f8a"/><stop offset=".664" stop-color="#ff215b"/><stop offset=".883" stop-color="#ff0834"/><stop offset="1" stop-color="#ff0025"/></linearGradient>
<linearGradient id="d99" gradientUnits="userSpaceOnUse" x1="1212" x2="1463"><stop offset="0" stop-color="#00a0ff"/><stop offset=".024" stop-color="#0a9eff"/><stop offset=".183" stop-color="#7793ff"/><stop offset=".317" stop-color="#e987ff"/><stop offset=".341" stop-color="#ff85ff"/><stop offset=".413" stop-color="#ff61c6"/><stop offset=".508" stop-color="#ff4293"/><stop offset=".651" stop-color="#ff2463"/><stop offset=".857" stop-color="#ff0a3b"/><stop offset="1" stop-color="#ff0028"/></linearGradient>
<linearGradient id="d100" gradientUnits="userSpaceOnUse" x1="1211" x2="1458"><stop offset="0" stop-color="#009bff"/><stop offset=".016" stop-color="#049aff"/><stop offset=".177" stop-color="#6f8fff"/><stop offset=".315" stop-color="#dd83ff"/><stop offset=".355" stop-color="#ff7dfc"/><stop offset=".427" stop-color="#ff5cc4"/><stop offset=".532" stop-color="#ff3c8f"/><stop offset=".677" stop-color="#ff2061"/><stop offset=".895" stop-color="#ff0739"/><stop offset="1" stop-color="#ff002b"/></linearGradient>
<linearGradient id="d101" gradientUnits="userSpaceOnUse" x1="1211" x2="1453"><stop offset="0" stop-color="#0097ff"/><stop offset=".057" stop-color="#1e93ff"/><stop offset=".221" stop-color="#8d87ff"/><stop offset=".361" stop-color="#ff79fd"/><stop offset=".434" stop-color="#ff59c6"/><stop offset=".541" stop-color="#ff3991"/><stop offset=".689" stop-color="#ff1e63"/><stop offset=".91" stop-color="#ff063a"/><stop offset="1" stop-color="#ff002f"/></linearGradient>
<linearGradient id="d102" gradientUnits="userSpaceOnUse" x1="1210" x2="1449"><stop offset="0" stop-color="#0093ff"/><stop offset=".033" stop-color="#0f91ff"/><stop offset=".2" stop-color="#7985ff"/><stop offset=".342" stop-color="#e878ff"/><stop offset=".367" stop-color="#fe75ff"/><stop offset=".45" stop-color="#ff53c3"/><stop offset=".558" stop-color="#ff358f"/><stop offset=".717" stop-color="#ff1a60"/><stop offset=".95" stop-color="#ff0237"/><stop offset="1" stop-color="#ff0031"/></linearGradient>
<linearGradient id="d103" gradientUnits="userSpaceOnUse" x1="1209" x2="1444"><stop offset="0" stop-color="#008fff"/><stop offset=".017" stop-color="#058eff"/><stop offset=".195" stop-color="#7181ff"/><stop offset=".347" stop-color="#e474ff"/><stop offset=".381" stop-color="#ff6ffd"/><stop offset=".458" stop-color="#ff51c7"/><stop offset=".568" stop-color="#ff3392"/><stop offset=".72" stop-color="#ff1964"/><stop offset=".949" stop-color="#ff033b"/><stop offset="1" stop-color="#ff0035"/></linearGradient>
<linearGradient id="d104" gradientUnits="userSpaceOnUse" x1="1208" x2="1439"><stop offset="0" stop-color="#008cff"/><stop offset=".026" stop-color="#098aff"/><stop offset=".207" stop-color="#757dff"/><stop offset=".362" stop-color="#e76eff"/><stop offset=".388" stop-color="#fd6cff"/><stop offset=".483" stop-color="#ff49c0"/><stop offset=".603" stop-color="#ff2c8b"/><stop offset=".776" stop-color="#ff135c"/><stop offset="1" stop-color="#ff0038"/></linearGradient>
<linearGradient id="d105" gradientUnits="userSpaceOnUse" x1="1208" x2="1434"><stop offset="0" stop-color="#08f"/><stop offset=".053" stop-color="#1884ff"/><stop offset=".237" stop-color="#8676ff"/><stop offset=".404" stop-color="#ff65fc"/><stop offset=".491" stop-color="#ff46c2"/><stop offset=".614" stop-color="#ff2a8d"/><stop offset=".789" stop-color="#ff115e"/><stop offset="1" stop-color="#ff003c"/></linearGradient>
<linearGradient id="d106" gradientUnits="userSpaceOnUse" x1="1207" x2="1430"><stop offset="0" stop-color="#0084ff"/><stop offset=".027" stop-color="#0982ff"/><stop offset=".214" stop-color="#7474ff"/><stop offset=".375" stop-color="#e366ff"/><stop offset=".411" stop-color="#ff62ff"/><stop offset=".5" stop-color="#ff43c4"/><stop offset=".616" stop-color="#ff2992"/><stop offset=".786" stop-color="#ff1163"/><stop offset="1" stop-color="#ff003f"/></linearGradient>
<linearGradient id="d107" gradientUnits="userSpaceOnUse" x1="1206" x2="1425"><stop offset="0" stop-color="#0081ff"/><stop offset=".027" stop-color="#097fff"/><stop offset=".218" stop-color="#7271ff"/><stop offset=".382" stop-color="#e062ff"/><stop offset=".427" stop-color="#ff5cfb"/><stop offset=".518" stop-color="#ff3fc2"/><stop offset=".645" stop-color="#ff258e"/><stop offset=".827" stop-color="#ff0d5f"/><stop offset="1" stop-color="#ff0043"/></linearGradient>
<linearGradient id="d108" gradientUnits="userSpaceOnUse" x1="1205" x2="1420"><stop offset="0" stop-color="#007dff"/><stop offset=".028" stop-color="#087bff"/><stop offset=".231" stop-color="#756cff"/><stop offset=".398" stop-color="#e35dff"/><stop offset=".435" stop-color="#ff59ff"/><stop offset=".528" stop-color="#ff3dc5"/><stop offset=".657" stop-color="#ff2390"/><stop offset=".843" stop-color="#ff0c61"/><stop offset="1" stop-color="#ff0047"/></linearGradient>
<linearGradient id="d109" gradientUnits="userSpaceOnUse" x1="1205" x2="1416"><stop offset="0" stop-color="#0079ff"/><stop offset=".047" stop-color="#1376ff"/><stop offset=".255" stop-color="#8166ff"/><stop offset=".425" stop-color="#f057ff"/><stop offset=".443" stop-color="#fe55ff"/><stop offset=".547" stop-color="#ff37c2"/><stop offset=".679" stop-color="#ff1f8e"/><stop offset=".868" stop-color="#ff0960"/><stop offset="1" stop-color="#ff004a"/></linearGradient>
<linearGradient id="d110" gradientUnits="userSpaceOnUse" x1="1204" x2="1411"><stop offset="0" stop-color="#0076ff"/><stop offset=".029" stop-color="#0974ff"/><stop offset=".24" stop-color="#7464ff"/><stop offset=".423" stop-color="#e654ff"/><stop offset=".462" stop-color="#ff4ffd"/><stop offset=".558" stop-color="#ff35c5"/><stop offset=".692" stop-color="#ff1d90"/><stop offset=".885" stop-color="#ff0862"/><stop offset="1" stop-color="#ff004e"/></linearGradient>
<linearGradient id="d111" gradientUnits="userSpaceOnUse" x1="1203" x2="1406"><stop offset="0" stop-color="#0073ff"/><stop offset=".029" stop-color="#0871ff"/><stop offset=".245" stop-color="#7261ff"/><stop offset=".431" stop-color="#e250ff"/><stop offset=".471" stop-color="#fd4cff"/><stop offset=".588" stop-color="#ff2fbf"/><stop offset=".735" stop-color="#ff178a"/><stop offset=".941" stop-color="#ff035c"/><stop offset="1" stop-color="#ff0053"/></linearGradient>
<linearGradient id="d112" gradientUnits="userSpaceOnUse" x1="1203" x2="1401"><stop offset="0" stop-color="#006fff"/><stop offset=".11" stop-color="#2d68ff"/><stop offset=".32" stop-color="#9857ff"/><stop offset=".49" stop-color="#ff46fc"/><stop offset=".59" stop-color="#ff2ec5"/><stop offset=".73" stop-color="#ff1892"/><stop offset=".93" stop-color="#ff0463"/><stop offset="1" stop-color="#ff0058"/></linearGradient>
<linearGradient id="d113" gradientUnits="userSpaceOnUse" x1="1202" x2="1397"><stop offset="0" stop-color="#006cff"/><stop offset=".051" stop-color="#1269ff"/><stop offset=".276" stop-color="#7c58ff"/><stop offset=".469" stop-color="#ec46ff"/><stop offset=".5" stop-color="#ff43fe"/><stop offset=".602" stop-color="#ff2cc7"/><stop offset=".745" stop-color="#ff1693"/><stop offset=".949" stop-color="#ff0264"/><stop offset="1" stop-color="#ff005c"/></linearGradient>
<linearGradient id="d114" gradientUnits="userSpaceOnUse" x1="1201" x2="1392"><stop offset="0" stop-color="#0069ff"/><stop offset=".031" stop-color="#0867ff"/><stop offset=".271" stop-color="#7456ff"/><stop offset=".479" stop-color="#e843ff"/><stop offset=".521" stop-color="#ff3efc"/><stop offset=".635" stop-color="#ff26c1"/><stop offset=".792" stop-color="#ff118d"/><stop offset="1" stop-color="#ff0061"/></linearGradient>
<linearGradient id="d115" gradientUnits="userSpaceOnUse" x1="1200" x2="1387"><stop offset="0" stop-color="#06f"/><stop offset=".043" stop-color="#0c63ff"/><stop offset=".287" stop-color="#7852ff"/><stop offset=".5" stop-color="#eb3fff"/><stop offset=".532" stop-color="#ff3bff"/><stop offset=".649" stop-color="#ff24c4"/><stop offset=".809" stop-color="#ff0f8f"/><stop offset="1" stop-color="#f06"/></linearGradient>
<linearGradient id="d116" gradientUnits="userSpaceOnUse" x1="1200" x2="1383"><stop offset="0" stop-color="#0063ff"/><stop offset=".098" stop-color="#235cff"/><stop offset=".337" stop-color="#8e4aff"/><stop offset=".543" stop-color="#fe38ff"/><stop offset=".663" stop-color="#ff21c5"/><stop offset=".826" stop-color="#ff0d90"/><stop offset="1" stop-color="#ff006b"/></linearGradient>
<linearGradient id="d117" gradientUnits="userSpaceOnUse" x1="1199" x2="1378"><stop offset="0" stop-color="#0060ff"/><stop offset=".044" stop-color="#0d5dff"/><stop offset=".3" stop-color="#774bff"/><stop offset=".522" stop-color="#e838ff"/><stop offset=".567" stop-color="#ff33fd"/><stop offset=".689" stop-color="#ff1dc3"/><stop offset=".856" stop-color="#ff0a8f"/><stop offset="1" stop-color="#ff0070"/></linearGradient>
<linearGradient id="d118" gradientUnits="userSpaceOnUse" x1="1198" x2="1373"><stop offset="0" stop-color="#005dff"/><stop offset=".045" stop-color="#0c5aff"/><stop offset=".318" stop-color="#7a47ff"/><stop offset=".545" stop-color="#ea33ff"/><stop offset=".58" stop-color="#fd30ff"/><stop offset=".716" stop-color="#ff1ac2"/><stop offset=".886" stop-color="#ff078f"/><stop offset="1" stop-color="#ff0076"/></linearGradient>
<linearGradient id="d119" gradientUnits="userSpaceOnUse" x1="1198" x2="1368"><stop offset="0" stop-color="#005aff"/><stop offset=".186" stop-color="#414eff"/><stop offset=".442" stop-color="#ae3aff"/><stop offset=".605" stop-color="#ff2bfd"/><stop offset=".733" stop-color="#ff18c4"/><stop offset=".907" stop-color="#ff0691"/><stop offset="1" stop-color="#ff007d"/></linearGradient>
<linearGradient id="d120" gradientUnits="userSpaceOnUse" x1="1197" x2="1364"><stop offset="0" stop-color="#0057ff"/><stop offset=".083" stop-color="#1952ff"/><stop offset=".369" stop-color="#883eff"/><stop offset=".619" stop-color="#ff28fe"/><stop offset=".75" stop-color="#ff15c5"/><stop offset=".929" stop-color="#ff0392"/><stop offset="1" stop-color="#ff0082"/></linearGradient>
<linearGradient id="d121" gradientUnits="userSpaceOnUse" x1="1196" x2="1359"><stop offset="0" stop-color="#0054ff"/><stop offset=".049" stop-color="#0c51ff"/><stop offset=".341" stop-color="#773eff"/><stop offset=".598" stop-color="#ea29ff"/><stop offset=".646" stop-color="#ff24fc"/><stop offset=".78" stop-color="#ff12c4"/><stop offset=".963" stop-color="#ff0191"/><stop offset="1" stop-color="#ff0089"/></linearGradient>
<linearGradient id="d122" gradientUnits="userSpaceOnUse" x1="1195" x2="1354"><stop offset="0" stop-color="#0051ff"/><stop offset=".05" stop-color="#0b4fff"/><stop offset=".35" stop-color="#753bff"/><stop offset=".613" stop-color="#e626ff"/><stop offset=".663" stop-color="#ff21ff"/><stop offset=".8" stop-color="#ff10c7"/><stop offset=".988" stop-color="#ff0093"/><stop offset="1" stop-color="#ff0090"/></linearGradient>
<linearGradient id="d123" gradientUnits="userSpaceOnUse" x1="1195" x2="1349"><stop offset="0" stop-color="#004eff"/><stop offset=".205" stop-color="#3e42ff"/><stop offset=".5" stop-color="#ac2dff"/><stop offset=".679" stop-color="#fc1eff"/><stop offset=".859" stop-color="#ff0abd"/><stop offset="1" stop-color="#ff0098"/></linearGradient>
<linearGradient id="d124" gradientUnits="userSpaceOnUse" x1="1194" x2="1345"><stop offset="0" stop-color="#004cff"/><stop offset=".079" stop-color="#1447ff"/><stop offset=".408" stop-color="#8232ff"/><stop offset=".684" stop-color="#f51cff"/><stop offset=".711" stop-color="#ff1afd"/><stop offset=".855" stop-color="#ff0ac6"/><stop offset="1" stop-color="#ff009f"/></linearGradient>
<linearGradient id="d125" gradientUnits="userSpaceOnUse" x1="1193" x2="1340"><stop offset="0" stop-color="#0049ff"/><stop offset=".054" stop-color="#0b46ff"/><stop offset=".392" stop-color="#7731ff"/><stop offset=".676" stop-color="#e61cff"/><stop offset=".73" stop-color="#fd17ff"/><stop offset=".905" stop-color="#ff05c1"/><stop offset="1" stop-color="#ff00a8"/></linearGradient>
<linearGradient id="d126" gradientUnits="userSpaceOnUse" x1="1192" x2="1335"><stop offset="0" stop-color="#0047ff"/><stop offset=".069" stop-color="#0f43ff"/><stop offset=".417" stop-color="#7a2eff"/><stop offset=".722" stop-color="#ee17ff"/><stop offset=".764" stop-color="#ff13fe"/><stop offset=".931" stop-color="#ff03c3"/><stop offset="1" stop-color="#ff00b1"/></linearGradient>
<linearGradient id="d127" gradientUnits="userSpaceOnUse" x1="1192" x2="1331"><stop offset="0" stop-color="#04f"/><stop offset=".2" stop-color="#3439ff"/><stop offset=".543" stop-color="#a223ff"/><stop offset=".786" stop-color="#ff10fe"/><stop offset=".957" stop-color="#ff01c4"/><stop offset="1" stop-color="#ff00b8"/></linearGradient>
<linearGradient id="d128" gradientUnits="userSpaceOnUse" x1="1191" x2="1326"><stop offset="0" stop-color="#0042ff"/><stop offset=".088" stop-color="#133dff"/><stop offset=".456" stop-color="#7d27ff"/><stop offset=".779" stop-color="#f010ff"/><stop offset=".824" stop-color="#ff0dfc"/><stop offset="1" stop-color="#ff00c3"/></linearGradient>
<linearGradient id="d129" gradientUnits="userSpaceOnUse" x1="1190" x2="1321"><stop offset="0" stop-color="#003fff"/><stop offset=".076" stop-color="#0f3bff"/><stop offset=".47" stop-color="#7c25ff"/><stop offset=".803" stop-color="#ed0eff"/><stop offset=".848" stop-color="#ff0aff"/><stop offset="1" stop-color="#ff00cd"/></linearGradient>
<linearGradient id="d130" gradientUnits="userSpaceOnUse" x1="1190" x2="1316"><stop offset="0" stop-color="#003cff"/><stop offset=".297" stop-color="#472dff"/><stop offset=".672" stop-color="#b516ff"/><stop offset=".891" stop-color="#ff06fd"/><stop offset="1" stop-color="#ff00d9"/></linearGradient>
<linearGradient id="d131" gradientUnits="userSpaceOnUse" x1="1189" x2="1312"><stop offset="0" stop-color="#003aff"/><stop offset=".177" stop-color="#2632ff"/><stop offset=".581" stop-color="#921bff"/><stop offset=".919" stop-color="#ff04fd"/><stop offset="1" stop-color="#ff00e3"/></linearGradient>
<linearGradient id="d132" gradientUnits="userSpaceOnUse" x1="1188" x2="1307"><stop offset="0" stop-color="#0038ff"/><stop offset=".083" stop-color="#0e34ff"/><stop offset=".517" stop-color="#791dff"/><stop offset=".9" stop-color="#ec05ff"/><stop offset=".95" stop-color="#fd01ff"/><stop offset="1" stop-color="#ff00f0"/></linearGradient>
<linearGradient id="d133" gradientUnits="userSpaceOnUse" x1="1187" x2="1302"><stop offset="0" stop-color="#0036ff"/><stop offset=".103" stop-color="#1231ff"/><stop offset=".569" stop-color="#8019ff"/><stop offset=".966" stop-color="#f400ff"/><stop offset="1" stop-color="#ff00fe"/></linearGradient>
<linearGradient id="d134" gradientUnits="userSpaceOnUse" x1="1187" x2="1298"><stop offset="0" stop-color="#03f"/><stop offset=".321" stop-color="#4124ff"/><stop offset=".768" stop-color="#b00cff"/><stop offset="1" stop-color="#f400ff"/></linearGradient>
<linearGradient id="d135" gradientUnits="userSpaceOnUse" x1="1186" x2="1293"><stop offset="0" stop-color="#0031ff"/><stop offset=".167" stop-color="#1d2aff"/><stop offset=".667" stop-color="#8d11ff"/><stop offset="1" stop-color="#e600ff"/></linearGradient>
<linearGradient id="d136" gradientUnits="userSpaceOnUse" x1="1185" x2="1288"><stop offset="0" stop-color="#002fff"/><stop offset=".115" stop-color="#112aff"/><stop offset=".635" stop-color="#7d12ff"/><stop offset="1" stop-color="#d900ff"/></linearGradient>
<linearGradient id="d137" gradientUnits="userSpaceOnUse" x1="1185" x2="1283"><stop offset="0" stop-color="#002cff"/><stop offset=".42" stop-color="#4a1bff"/><stop offset=".92" stop-color="#b802ff"/><stop offset="1" stop-color="#c0f"/></linearGradient>
<linearGradient id="d138" gradientUnits="userSpaceOnUse" x1="1184" x2="1279"><stop offset="0" stop-color="#002aff"/><stop offset=".375" stop-color="#3e1bff"/><stop offset=".917" stop-color="#ae02ff"/><stop offset="1" stop-color="#c200ff"/></linearGradient>
<linearGradient id="d139" gradientUnits="userSpaceOnUse" x1="1183" x2="1274"><stop offset="0" stop-color="#0028ff"/><stop offset=".174" stop-color="#1822ff"/><stop offset=".783" stop-color="#8708ff"/><stop offset="1" stop-color="#b500ff"/></linearGradient>
<linearGradient id="d140" gradientUnits="userSpaceOnUse" x1="1182" x2="1269"><stop offset="0" stop-color="#0026ff"/><stop offset=".182" stop-color="#1820ff"/><stop offset=".818" stop-color="#8606ff"/><stop offset="1" stop-color="#a0f"/></linearGradient>
<linearGradient id="d141" gradientUnits="userSpaceOnUse" x1="1182" x2="1264"><stop offset="0" stop-color="#0024ff"/><stop offset=".5" stop-color="#4812ff"/><stop offset="1" stop-color="#9e00ff"/></linearGradient>
<linearGradient id="d142" gradientUnits="userSpaceOnUse" x1="1181" x2="1260"><stop offset="0" stop-color="#02f"/><stop offset=".425" stop-color="#3814ff"/><stop offset="1" stop-color="#9600ff"/></linearGradient>
<linearGradient id="d143" gradientUnits="userSpaceOnUse" x1="1180" x2="1255"><stop offset="0" stop-color="#0020ff"/><stop offset=".237" stop-color="#1b19ff"/><stop offset=".974" stop-color="#8700ff"/><stop offset="1" stop-color="#8b00ff"/></linearGradient>
<linearGradient id="d144" gradientUnits="userSpaceOnUse" x1="1179" x2="1250"><stop offset="0" stop-color="#001eff"/><stop offset=".194" stop-color="#1318ff"/><stop offset="1" stop-color="#8100ff"/></linearGradient>
<linearGradient id="d145" gradientUnits="userSpaceOnUse" x1="1179" x2="1246"><stop offset="0" stop-color="#001cff"/><stop offset=".618" stop-color="#460aff"/><stop offset="1" stop-color="#7900ff"/></linearGradient>
<linearGradient id="d146" gradientUnits="userSpaceOnUse" x1="1178" x2="1241"><stop offset="0" stop-color="#001aff"/><stop offset=".438" stop-color="#2c0eff"/><stop offset="1" stop-color="#6f00ff"/></linearGradient>
<linearGradient id="d147" gradientUnits="userSpaceOnUse" x1="1177" x2="1236"><stop offset="0" stop-color="#0018ff"/><stop offset=".333" stop-color="#1d10ff"/><stop offset="1" stop-color="#60f"/></linearGradient>
<linearGradient id="d148" gradientUnits="userSpaceOnUse" x1="1177" x2="1231"><stop offset="0" stop-color="#0016ff"/><stop offset=".857" stop-color="#4e02ff"/><stop offset="1" stop-color="#5d00ff"/></linearGradient>
<linearGradient id="d149" gradientUnits="userSpaceOnUse" x1="1176" x2="1227"><stop offset="0" stop-color="#0014ff"/><stop offset=".808" stop-color="#4303ff"/><stop offset="1" stop-color="#5600ff"/></linearGradient>
<linearGradient id="d150" gradientUnits="userSpaceOnUse" x1="1175" x2="1222"><stop offset="0" stop-color="#0012ff"/><stop offset=".542" stop-color="#2708ff"/><stop offset="1" stop-color="#4d00ff"/></linearGradient>
<linearGradient id="d151" gradientUnits="userSpaceOnUse" x1="1174" x2="1217"><stop offset="0" stop-color="#01f"/><stop offset=".409" stop-color="#190aff"/><stop offset="1" stop-color="#4500ff"/></linearGradient>
<linearGradient id="d152" gradientUnits="userSpaceOnUse" x1="1174" x2="1213"><stop offset="0" stop-color="#000fff"/><stop offset="1" stop-color="#3e00ff"/></linearGradient>
<linearGradient id="d153" gradientUnits="userSpaceOnUse" x1="1173" x2="1208"><stop offset="0" stop-color="#000dff"/><stop offset="1" stop-color="#3700ff"/></linearGradient>
<linearGradient id="d154" gradientUnits="userSpaceOnUse" x1="1172" x2="1203"><stop offset="0" stop-color="#000bff"/><stop offset=".875" stop-color="#2800ff"/><stop offset="1" stop-color="#2f00ff"/></linearGradient>
<linearGradient id="d155" gradientUnits="userSpaceOnUse" x1="1172" x2="1198"><stop offset="0" stop-color="#0009ff"/><stop offset="1" stop-color="#2700ff"/></linearGradient>
<linearGradient id="d156" gradientUnits="userSpaceOnUse" x1="1171" x2="1194"><stop offset="0" stop-color="#0008ff"/><stop offset="1" stop-color="#20f"/></linearGradient>
<linearGradient id="d157" gradientUnits="userSpaceOnUse" x1="1170" x2="1189"><stop offset="0" stop-color="#0006ff"/><stop offset="1" stop-color="#1b00ff"/></linearGradient>
<linearGradient id="d158" gradientUnits="userSpaceOnUse" x1="1169" x2="1184"><stop offset="0" stop-color="#0005ff"/><stop offset="1" stop-color="#1400ff"/></linearGradient>
<linearGradient id="d159" gradientUnits="userSpaceOnUse" x1="1169" x2="1179"><stop offset="0" stop-color="#0003ff"/><stop offset="1" stop-color="#0d00ff"/></linearGradient>
<linearGradient id="d160" gradientUnits="userSpaceOnUse" x1="1168" x2="1175"><stop offset="0" stop-color="#0001ff"/><stop offset="1" stop-color="#0800ff"/></linearGradient>
<linearGradient id="e0" gradientUnits="userSpaceOnUse" x1="1508" x2="1699"><stop offset="0" stop-color="#007c9c"/><stop offset=".677" stop-color="#02799c"/><stop offset="1" stop-color="#17789c"/></linearGradient>
<linearGradient id="e1" gradientUnits="userSpaceOnUse" x1="1508" x2="1699"><stop offset="0" stop-color="#007a9c"/><stop offset=".667" stop-color="#02789c"/><stop offset="1" stop-color="#17769c"/></linearGradient>
<linearGradient id="e2" gradientUnits="userSpaceOnUse" x1="1508" x2="1699"><stop offset="0" stop-color="#00799c"/><stop offset=".667" stop-color="#03779c"/><stop offset="1" stop-color="#18759c"/></linearGradient>
<linearGradient id="e3" gradientUnits="userSpaceOnUse" x1="1508" x2="1699"><stop offset="0" stop-color="#00789c"/><stop offset=".656" stop-color="#03769c"/><stop offset="1" stop-color="#18749c"/></linearGradient>
<linearGradient id="e4" gradientUnits="userSpaceOnUse" x1="1508" x2="1699"><stop offset="0" stop-color="#00779c"/><stop offset=".646" stop-color="#02749c"/><stop offset="1" stop-color="#19729c"/></linearGradient>
<linearGradient id="e5" gradientUnits="userSpaceOnUse" x1="1508" x2="1699"><stop offset="0" stop-color="#00769c"/><stop offset=".635" stop-color="#02739c"/><stop offset="1" stop-color="#19719c"/></linearGradient>
<linearGradient id="e6" gradientUnits="userSpaceOnUse" x1="1508" x2="1699"><stop offset="0" stop-color="#00759c"/><stop offset=".635" stop-color="#03729c"/><stop offset="1" stop-color="#19709c"/></linearGradient>
<linearGradient id="e7" gradientUnits="userSpaceOnUse" x1="1508" x2="1699"><stop offset="0" stop-color="#00749c"/><stop offset=".625" stop-color="#02719c"/><stop offset="1" stop-color="#1a6f9c"/></linearGradient>
<linearGradient id="e8" gradientUnits="userSpaceOnUse" x1="1508" x2="1699"><stop offset="0" stop-color="#00729c"/><stop offset=".615" stop-color="#02709c"/><stop offset="1" stop-color="#1a6e9c"/></linearGradient>
<linearGradient id="e9" gradientUnits="userSpaceOnUse" x1="1508" x2="1699"><stop offset="0" stop-color="#00719c"/><stop offset=".615" stop-color="#036f9c"/><stop offset="1" stop-color="#1a6c9c"/></linearGradient>
<linearGradient id="e10" gradientUnits="userSpaceOnUse" x1="1508" x2="1699"><stop offset="0" stop-color="#00709c"/><stop offset=".604" stop-color="#026d9c"/><stop offset="1" stop-color="#1b6b9c"/></linearGradient>
<linearGradient id="e11" gradientUnits="userSpaceOnUse" x1="1508" x2="1699"><stop offset="0" stop-color="#006f9c"/><stop offset=".594" stop-color="#026c9c"/><stop offset="1" stop-color="#1b6a9c"/></linearGradient>
<linearGradient id="e12" gradientUnits="userSpaceOnUse" x1="1508" x2="1699"><stop offset="0" stop-color="#006e9c"/><stop offset=".583" stop-color="#026b9c"/><stop offset="1" stop-color="#1c699c"/></linearGradient>
<linearGradient id="e13" gradientUnits="userSpaceOnUse" x1="1508" x2="1699"><stop offset="0" stop-color="#006d9c"/><stop offset=".583" stop-color="#036a9c"/><stop offset="1" stop-color="#1c689c"/></linearGradient>
<linearGradient id="e14" gradientUnits="userSpaceOnUse" x1="1508" x2="1699"><stop offset="0" stop-color="#006c9c"/><stop offset=".573" stop-color="#02699c"/><stop offset="1" stop-color="#1c669c"/></linearGradient>
<linearGradient id="e15" gradientUnits="userSpaceOnUse" x1="1508" x2="1699"><stop offset="0" stop-color="#006b9d"/><stop offset=".562" stop-color="#02689d"/><stop offset="1" stop-color="#1d659c"/></linearGradient>
<linearGradient id="e16" gradientUnits="userSpaceOnUse" x1="1508" x2="1699"><stop offset="0" stop-color="#006a9d"/><stop offset=".562" stop-color="#03679d"/><stop offset="1" stop-color="#1d649c"/></linearGradient>
<linearGradient id="e17" gradientUnits="userSpaceOnUse" x1="1508" x2="1699"><stop offset="0" stop-color="#00699d"/><stop offset=".552" stop-color="#02669d"/><stop offset="1" stop-color="#1d639c"/></linearGradient>
<linearGradient id="e18" gradientUnits="userSpaceOnUse" x1="1508" x2="1699"><stop offset="0" stop-color="#00689d"/><stop offset=".542" stop-color="#02659d"/><stop offset="1" stop-color="#1e629c"/></linearGradient>
<linearGradient id="e19" gradientUnits="userSpaceOnUse" x1="1508" x2="1699"><stop offset="0" stop-color="#00679d"/><stop offset=".542" stop-color="#03649d"/><stop offset="1" stop-color="#1e619c"/></linearGradient>
<linearGradient id="e20" gradientUnits="userSpaceOnUse" x1="1508" x2="1699"><stop offset="0" stop-color="#00669d"/><stop offset=".531" stop-color="#03639d"/><stop offset="1" stop-color="#1e609c"/></linearGradient>
<linearGradient id="e21" gradientUnits="userSpaceOnUse" x1="1508" x2="1699"><stop offset="0" stop-color="#00659d"/><stop offset=".521" stop-color="#02629d"/><stop offset="1" stop-color="#1f5e9c"/></linearGradient>
<linearGradient id="e22" gradientUnits="userSpaceOnUse" x1="1508" x2="1699"><stop offset="0" stop-color="#00649d"/><stop offset=".51" stop-color="#02619d"/><stop offset="1" stop-color="#1f5d9c"/></linearGradient>
<linearGradient id="e23" gradientUnits="userSpaceOnUse" x1="1508" x2="1699"><stop offset="0" stop-color="#00639d"/><stop offset=".51" stop-color="#03609d"/><stop offset="1" stop-color="#1f5c9c"/></linearGradient>
<linearGradient id="e24" gradientUnits="userSpaceOnUse" x1="1508" x2="1699"><stop offset="0" stop-color="#00629d"/><stop offset=".5" stop-color="#025f9d"/><stop offset="1" stop-color="#205b9c"/></linearGradient>
<linearGradient id="e25" gradientUnits="userSpaceOnUse" x1="1508" x2="1699"><stop offset="0" stop-color="#00619d"/><stop offset=".49" stop-color="#025e9d"/><stop offset="1" stop-color="#205a9c"/></linearGradient>
<linearGradient id="e26" gradientUnits="userSpaceOnUse" x1="1508" x2="1699"><stop offset="0" stop-color="#00609d"/><stop offset=".49" stop-color="#035d9d"/><stop offset="1" stop-color="#20599c"/></linearGradient>
<linearGradient id="e27" gradientUnits="userSpaceOnUse" x1="1508" x2="1699"><stop offset="0" stop-color="#005f9d"/><stop offset=".479" stop-color="#035c9d"/><stop offset="1" stop-color="#21589c"/></linearGradient>
<linearGradient id="e28" gradientUnits="userSpaceOnUse" x1="1508" x2="1699"><stop offset="0" stop-color="#005e9d"/><stop offset=".469" stop-color="#025b9d"/><stop offset="1" stop-color="#21579c"/></linearGradient>
<linearGradient id="e29" gradientUnits="userSpaceOnUse" x1="1508" x2="1699"><stop offset="0" stop-color="#005d9d"/><stop offset=".469" stop-color="#035a9d"/><stop offset="1" stop-color="#21569c"/></linearGradient>
<linearGradient id="e30" gradientUnits="userSpaceOnUse" x1="1508" x2="1699"><stop offset="0" stop-color="#005c9d"/><stop offset=".458" stop-color="#03599d"/><stop offset="1" stop-color="#22559c"/></linearGradient>
<linearGradient id="e31" gradientUnits="userSpaceOnUse" x1="1508" x2="1699"><stop offset="0" stop-color="#005b9d"/><stop offset=".448" stop-color="#02589d"/><stop offset="1" stop-color="#22549c"/></linearGradient>
<linearGradient id="e32" gradientUnits="userSpaceOnUse" x1="1508" x2="1699"><stop offset="0" stop-color="#005a9d"/><stop offset=".448" stop-color="#03579d"/><stop offset="1" stop-color="#22539c"/></linearGradient>
<linearGradient id="e33" gradientUnits="userSpaceOnUse" x1="1508" x2="1699"><stop offset="0" stop-color="#00599d"/><stop offset=".438" stop-color="#03569d"/><stop offset="1" stop-color="#23529c"/></linearGradient>
<linearGradient id="e34" gradientUnits="userSpaceOnUse" x1="1508" x2="1699"><stop offset="0" stop-color="#00589d"/><stop offset=".427" stop-color="#03559d"/><stop offset="1" stop-color="#23519c"/></linearGradient>
<linearGradient id="e35" gradientUnits="userSpaceOnUse" x1="1508" x2="1699"><stop offset="0" stop-color="#00579d"/><stop offset=".417" stop-color="#02549d"/><stop offset="1" stop-color="#23509c"/></linearGradient>
<linearGradient id="e36" gradientUnits="userSpaceOnUse" x1="1508" x2="1699"><stop offset="0" stop-color="#00569d"/><stop offset=".417" stop-color="#03539d"/><stop offset="1" stop-color="#244f9c"/></linearGradient>
<linearGradient id="f0" gradientUnits="userSpaceOnUse" x1="1628" x2="1699"><stop offset="0" stop-color="#00c6ff"/><stop offset="1" stop-color="#26c4ff"/></linearGradient>
<linearGradient id="f1" gradientUnits="userSpaceOnUse" x1="1626" x2="1699"><stop offset="0" stop-color="#00c4ff"/><stop offset="1" stop-color="#26c2ff"/></linearGradient>
<linearGradient id="f2" gradientUnits="userSpaceOnUse" x1="1625" x2="1699"><stop offset="0" stop-color="#00c2ff"/><stop offset="1" stop-color="#27bfff"/></linearGradient>
<linearGradient id="f3" gradientUnits="userSpaceOnUse" x1="1623" x2="1699"><stop offset="0" stop-color="#00c0ff"/><stop offset="1" stop-color="#27bdff"/></linearGradient>
<linearGradient id="f4" gradientUnits="userSpaceOnUse" x1="1622" x2="1699"><stop offset="0" stop-color="#00beff"/><stop offset="1" stop-color="#28bbff"/></linearGradient>
<linearGradient id="f5" gradientUnits="userSpaceOnUse" x1="1620" x2="1699"><stop offset="0" stop-color="#00bcff"/><stop offset="1" stop-color="#29b9ff"/></linearGradient>
<linearGradient id="f6" gradientUnits="userSpaceOnUse" x1="1619" x2="1699"><stop offset="0" stop-color="#00baff"/><stop offset="1" stop-color="#29b7ff"/></linearGradient>
<linearGradient id="f7" gradientUnits="userSpaceOnUse" x1="1617" x2="1699"><stop offset="0" stop-color="#00b9ff"/><stop offset="1" stop-color="#2ab5ff"/></linearGradient>
<linearGradient id="f8" gradientUnits="userSpaceOnUse" x1="1616" x2="1699"><stop offset="0" stop-color="#00b7ff"/><stop offset="1" stop-color="#2bb3ff"/></linearGradient>
<linearGradient id="f9" gradientUnits="userSpaceOnUse" x1="1614" x2="1699"><stop offset="0" stop-color="#00b5ff"/><stop offset="1" stop-color="#2bb1ff"/></linearGradient>
<linearGradient id="f10" gradientUnits="userSpaceOnUse" x1="1613" x2="1699"><stop offset="0" stop-color="#00b3ff"/><stop offset="1" stop-color="#2cafff"/></linearGradient>
<linearGradient id="f11" gradientUnits="userSpaceOnUse" x1="1612" x2="1699"><stop offset="0" stop-color="#00b1ff"/><stop offset="1" stop-color="#2cadff"/></linearGradient>
<linearGradient id="f12" gradientUnits="userSpaceOnUse" x1="1610" x2="1699"><stop offset="0" stop-color="#00afff"/><stop offset="1" stop-color="#2dabff"/></linearGradient>
<linearGradient id="f13" gradientUnits="userSpaceOnUse" x1="1609" x2="1699"><stop offset="0" stop-color="#00adff"/><stop offset="1" stop-color="#2ea9ff"/></linearGradient>
<linearGradient id="f14" gradientUnits="userSpaceOnUse" x1="1607" x2="1699"><stop offset="0" stop-color="#00acff"/><stop offset="1" stop-color="#2ea7ff"/></linearGradient>
<linearGradient id="f15" gradientUnits="userSpaceOnUse" x1="1606" x2="1699"><stop offset="0" stop-color="#0af"/><stop offset="1" stop-color="#2fa6ff"/></linearGradient>
<linearGradient id="f16" gradientUnits="userSpaceOnUse" x1="1604" x2="1699"><stop offset="0" stop-color="#00a8ff"/><stop offset="1" stop-color="#2fa4ff"/></linearGradient>
<linearGradient id="f17" gradientUnits="userSpaceOnUse" x1="1603" x2="1699"><stop offset="0" stop-color="#00a6ff"/><stop offset="1" stop-color="#30a2ff"/></linearGradient>
<linearGradient id="f18" gradientUnits="userSpaceOnUse" x1="1601" x2="1699"><stop offset="0" stop-color="#00a5ff"/><stop offset="1" stop-color="#30a0ff"/></linearGradient>
<linearGradient id="f19" gradientUnits="userSpaceOnUse" x1="1600" x2="1699"><stop offset="0" stop-color="#00a3ff"/><stop offset="1" stop-color="#319eff"/></linearGradient>
<linearGradient id="f20" gradientUnits="userSpaceOnUse" x1="1599" x2="1699"><stop offset="0" stop-color="#00a1ff"/><stop offset="1" stop-color="#329cff"/></linearGradient>
<linearGradient id="f21" gradientUnits="userSpaceOnUse" x1="1597" x2="1699"><stop offset="0" stop-color="#00a0ff"/><stop offset="1" stop-color="#329aff"/></linearGradient>
<linearGradient id="f22" gradientUnits="userSpaceOnUse" x1="1596" x2="1699"><stop offset="0" stop-color="#009eff"/><stop offset="1" stop-color="#39f"/></linearGradient>
<linearGradient id="f23" gradientUnits="userSpaceOnUse" x1="1594" x2="1699"><stop offset="0" stop-color="#009cff"/><stop offset="1" stop-color="#3397ff"/></linearGradient>
<linearGradient id="f24" gradientUnits="userSpaceOnUse" x1="1593" x2="1699"><stop offset="0" stop-color="#009bff"/><stop offset="1" stop-color="#3495ff"/></linearGradient>
<linearGradient id="f25" gradientUnits="userSpaceOnUse" x1="1591" x2="1699"><stop offset="0" stop-color="#09f"/><stop offset="1" stop-color="#3493ff"/></linearGradient>
<linearGradient id="f26" gradientUnits="userSpaceOnUse" x1="1590" x2="1699"><stop offset="0" stop-color="#0097ff"/><stop offset="1" stop-color="#3591ff"/></linearGradient>
<linearGradient id="f27" gradientUnits="userSpaceOnUse" x1="1588" x2="1699"><stop offset="0" stop-color="#0096ff"/><stop offset="1" stop-color="#3590ff"/></linearGradient>
<linearGradient id="f28" gradientUnits="userSpaceOnUse" x1="1587" x2="1699"><stop offset="0" stop-color="#0094ff"/><stop offset="1" stop-color="#368eff"/></linearGradient>
<linearGradient id="f29" gradientUnits="userSpaceOnUse" x1="1585" x2="1699"><stop offset="0" stop-color="#0093ff"/><stop offset="1" stop-color="#368cff"/></linearGradient>
<linearGradient id="f30" gradientUnits="userSpaceOnUse" x1="1584" x2="1699"><stop offset="0" stop-color="#0091ff"/><stop offset="1" stop-color="#378aff"/></linearGradient>
<linearGradient id="f31" gradientUnits="userSpaceOnUse" x1="1583" x2="1699"><stop offset="0" stop-color="#008fff"/><stop offset="1" stop-color="#3889ff"/></linearGradient>
<linearGradient id="f32" gradientUnits="userSpaceOnUse" x1="1581" x2="1699"><stop offset="0" stop-color="#008eff"/><stop offset="1" stop-color="#3887ff"/></linearGradient>
<linearGradient id="f33" gradientUnits="userSpaceOnUse" x1="1580" x2="1699"><stop offset="0" stop-color="#008cff"/><stop offset="1" stop-color="#3985ff"/></linearGradient>
<linearGradient id="f34" gradientUnits="userSpaceOnUse" x1="1578" x2="1699"><stop offset="0" stop-color="#008bff"/><stop offset="1" stop-color="#3984ff"/></linearGradient>
<linearGradient id="f35" gradientUnits="userSpaceOnUse" x1="1577" x2="1699"><stop offset="0" stop-color="#0089ff"/><stop offset="1" stop-color="#3a82ff"/></linearGradient>
<linearGradient id="f36" gradientUnits="userSpaceOnUse" x1="1575" x2="1699"><stop offset="0" stop-color="#08f"/><stop offset="1" stop-color="#3a80ff"/></linearGradient>
<linearGradient id="th" x1="0" x2="0" y1="0" y2="1"><stop offset="0" stop-color="#353535"/><stop offset=".5" stop-color="#272727"/><stop offset=".52" stop-color="#101010"/><stop offset="1" stop-color="#1f1f1f"/></linearGradient>
<linearGradient id="tc" x1="0" x2="0" y1="0" y2="1"><stop offset="0" stop-color="#282828"/><stop offset="1" stop-color="#404040"/></linearGradient>
</defs>
<rect width="1715" height="881" fill="#333333"/>
<text x="22.0" y="77.2" font-size="42" fill="#f2f2f2" textLength="241.6" lengthAdjust="spacingAndGlyphs" stroke="#f2f2f2" stroke-width=".45">ColorChecker</text>
<text x="96.7" y="134.3" font-size="28" fill="#f2f2f2" textLength="223.0" lengthAdjust="spacingAndGlyphs" stroke="#f2f2f2" stroke-width=".45">Avg dE2000: 3,7</text>
<text x="82.8" y="176.4" font-size="28" fill="#f2f2f2" textLength="250.2" lengthAdjust="spacingAndGlyphs" stroke="#f2f2f2" stroke-width=".45">Max dE2000: 7,77</text>
<text x="159.9" y="212.7" font-size="14.3" fill="#d2d2d2" textLength="82.6" lengthAdjust="spacingAndGlyphs">DeltaE 2000</text>
<rect x="18.2" y="219.2" width="366.0" height="369.00000000000006" fill="#262626"/>
<line x1="67.0" y1="219.2" x2="67.0" y2="588.2" stroke="#a2a2a2" stroke-width="0.95"/>
<line x1="115.8" y1="219.2" x2="115.8" y2="588.2" stroke="#a2a2a2" stroke-width="0.95"/>
<line x1="164.6" y1="219.2" x2="164.6" y2="588.2" stroke="#a2a2a2" stroke-width="0.95"/>
<line x1="213.4" y1="219.2" x2="213.4" y2="588.2" stroke="#a2a2a2" stroke-width="0.95"/>
<line x1="311.0" y1="219.2" x2="311.0" y2="588.2" stroke="#a2a2a2" stroke-width="0.95"/>
<line x1="359.8" y1="219.2" x2="359.8" y2="588.2" stroke="#a2a2a2" stroke-width="0.95"/>
<rect x="18.7" y="219.8" width="117.3" height="12.6" fill="#000"/>
<rect x="19.2" y="221.0" width="115.3" height="9.6" fill="url(#b0)"/>
<rect x="18.7" y="235.2" width="63.4" height="12.6" fill="#000"/>
<rect x="19.2" y="236.4" width="61.4" height="9.6" fill="url(#b1)"/>
<rect x="18.7" y="250.6" width="25.8" height="12.6" fill="#000"/>
<rect x="19.2" y="251.8" width="23.8" height="9.6" fill="url(#b2)"/>
<rect x="18.7" y="266.0" width="64.6" height="12.6" fill="#000"/>
<rect x="19.2" y="267.2" width="62.6" height="9.6" fill="url(#b3)"/>
<rect x="18.7" y="281.4" width="54.8" height="12.6" fill="#000"/>
<rect x="19.2" y="282.6" width="52.8" height="9.6" fill="url(#b4)"/>
<rect x="18.7" y="296.8" width="69.7" height="12.6" fill="#000"/>
<rect x="19.2" y="298.0" width="67.7" height="9.6" fill="url(#b5)"/>
<rect x="18.7" y="312.2" width="36.8" height="12.6" fill="#000"/>
<rect x="19.2" y="313.4" width="34.8" height="9.6" fill="url(#b6)"/>
<rect x="18.7" y="327.6" width="38.3" height="12.6" fill="#000"/>
<rect x="19.2" y="328.8" width="36.3" height="9.6" fill="url(#b7)"/>
<rect x="18.7" y="343.0" width="62.4" height="12.6" fill="#000"/>
<rect x="19.2" y="344.2" width="60.4" height="9.6" fill="url(#b8)"/>
<rect x="18.7" y="358.4" width="72.9" height="12.6" fill="#000"/>
<rect x="19.2" y="359.6" width="70.9" height="9.6" fill="url(#b9)"/>
<rect x="18.7" y="373.8" width="76.3" height="12.6" fill="#000"/>
<rect x="19.2" y="374.9" width="74.3" height="9.6" fill="url(#b10)"/>
<rect x="18.7" y="389.1" width="48.7" height="12.6" fill="#000"/>
<rect x="19.2" y="390.3" width="46.7" height="9.6" fill="url(#b11)"/>
<rect x="18.7" y="404.5" width="89.7" height="12.6" fill="#000"/>
<rect x="19.2" y="405.7" width="87.7" height="9.6" fill="url(#b12)"/>
<rect x="18.7" y="419.9" width="76.6" height="12.6" fill="#000"/>
<rect x="19.2" y="421.1" width="74.6" height="9.6" fill="url(#b13)"/>
<rect x="18.7" y="435.3" width="66.6" height="12.6" fill="#000"/>
<rect x="19.2" y="436.5" width="64.6" height="9.6" fill="url(#b14)"/>
<rect x="18.7" y="450.7" width="133.2" height="12.6" fill="#000"/>
<rect x="19.2" y="451.9" width="131.2" height="9.6" fill="url(#b15)"/>
<rect x="18.7" y="466.1" width="86.1" height="12.6" fill="#000"/>
<rect x="19.2" y="467.3" width="84.1" height="9.6" fill="url(#b16)"/>
<rect x="18.7" y="481.5" width="72.4" height="12.6" fill="#000"/>
<rect x="19.2" y="482.7" width="70.4" height="9.6" fill="url(#b17)"/>
<rect x="18.7" y="496.9" width="16.5" height="12.6" fill="#000"/>
<rect x="19.2" y="498.1" width="14.5" height="9.6" fill="url(#b18)"/>
<rect x="18.7" y="512.3" width="145.4" height="12.6" fill="#000"/>
<rect x="19.2" y="513.5" width="143.4" height="9.6" fill="url(#b19)"/>
<rect x="18.7" y="527.7" width="152.2" height="12.6" fill="#000"/>
<rect x="19.2" y="528.9" width="150.2" height="9.6" fill="url(#b20)"/>
<rect x="18.7" y="543.1" width="159.5" height="12.6" fill="#000"/>
<rect x="19.2" y="544.3" width="157.5" height="9.6" fill="url(#b21)"/>
<rect x="18.7" y="558.5" width="166.6" height="12.6" fill="#000"/>
<rect x="19.2" y="559.7" width="164.6" height="9.6" fill="url(#b22)"/>
<rect x="18.7" y="573.9" width="189.3" height="12.6" fill="#000"/>
<rect x="19.2" y="575.1" width="187.3" height="9.6" fill="url(#b23)"/>
<line x1="262.2" y1="219.2" x2="262.2" y2="588.2" stroke="#c01818" stroke-width="2.4"/>
<line x1="42.6" y1="219.2" x2="42.6" y2="588.2" stroke="#0c8a12" stroke-width="1.25"/>
<line x1="91.4" y1="219.2" x2="91.4" y2="588.2" stroke="#e8e818" stroke-width="1.25"/>
<rect x="18.2" y="219.2" width="366.0" height="369.00000000000006" fill="none" stroke="#9c9c9c" stroke-width="1.3"/>
<line x1="18.2" y1="588.2" x2="18.2" y2="594.5" stroke="#dedede" stroke-width="1.6"/>
<text x="17.9" y="610.8" font-size="15.8" fill="#d2d2d2" text-anchor="middle">0</text>
<line x1="67.0" y1="588.2" x2="67.0" y2="594.5" stroke="#dedede" stroke-width="1.6"/>
<text x="66.7" y="610.8" font-size="15.8" fill="#d2d2d2" text-anchor="middle">2</text>
<line x1="115.8" y1="588.2" x2="115.8" y2="594.5" stroke="#dedede" stroke-width="1.6"/>
<text x="115.5" y="610.8" font-size="15.8" fill="#d2d2d2" text-anchor="middle">4</text>
<line x1="164.6" y1="588.2" x2="164.6" y2="594.5" stroke="#dedede" stroke-width="1.6"/>
<text x="164.3" y="610.8" font-size="15.8" fill="#d2d2d2" text-anchor="middle">6</text>
<line x1="213.4" y1="588.2" x2="213.4" y2="594.5" stroke="#dedede" stroke-width="1.6"/>
<text x="213.1" y="610.8" font-size="15.8" fill="#d2d2d2" text-anchor="middle">8</text>
<line x1="262.2" y1="588.2" x2="262.2" y2="594.5" stroke="#dedede" stroke-width="1.6"/>
<text x="261.9" y="610.8" font-size="15.8" fill="#d2d2d2" text-anchor="middle">10</text>
<line x1="311.0" y1="588.2" x2="311.0" y2="594.5" stroke="#dedede" stroke-width="1.6"/>
<text x="310.7" y="610.8" font-size="15.8" fill="#d2d2d2" text-anchor="middle">12</text>
<line x1="359.8" y1="588.2" x2="359.8" y2="594.5" stroke="#dedede" stroke-width="1.6"/>
<text x="359.5" y="610.8" font-size="15.8" fill="#d2d2d2" text-anchor="middle">14</text>
<rect x="430.4" y="64.6" width="150.0" height="346.2" fill="#262626"/>
<line x1="430.4" y1="150.8" x2="580.4" y2="150.8" stroke="#9c9c9c" stroke-width="1.2"/>
<line x1="430.4" y1="237.8" x2="580.4" y2="237.8" stroke="#9c9c9c" stroke-width="1.2"/>
<line x1="430.4" y1="324.8" x2="580.4" y2="324.8" stroke="#9c9c9c" stroke-width="1.2"/>
<rect x="445.2" y="237.2" width="120.7" height="64.2" fill="#000"/>
<rect x="446.4" y="238.4" width="118.1" height="61.6" fill="url(#gDeltaL)"/>
<line x1="430.4" y1="107.3" x2="581.0" y2="107.3" stroke="#e6e628" stroke-width="1.8"/>
<line x1="430.4" y1="194.3" x2="581.9" y2="194.3" stroke="#0f8a22" stroke-width="1.8"/>
<line x1="430.4" y1="281.3" x2="581.9" y2="281.3" stroke="#0f8a22" stroke-width="1.8"/>
<line x1="430.4" y1="368.3" x2="581.0" y2="368.3" stroke="#e6e628" stroke-width="1.8"/>
<rect x="430.4" y="64.6" width="150.0" height="346.2" fill="none" stroke="#9c9c9c" stroke-width="1.3"/>
<line x1="424.4" y1="64.6" x2="430.4" y2="64.6" stroke="#dedede" stroke-width="1.35"/>
<text x="424.4" y="69.9" font-size="15.8" fill="#d2d2d2" text-anchor="end">4</text>
<line x1="424.4" y1="107.3" x2="430.4" y2="107.3" stroke="#dedede" stroke-width="1.35"/>
<text x="424.4" y="113.4" font-size="15.8" fill="#d2d2d2" text-anchor="end">3</text>
<line x1="424.4" y1="150.8" x2="430.4" y2="150.8" stroke="#dedede" stroke-width="1.35"/>
<text x="424.4" y="156.9" font-size="15.8" fill="#d2d2d2" text-anchor="end">2</text>
<line x1="424.4" y1="194.3" x2="430.4" y2="194.3" stroke="#dedede" stroke-width="1.35"/>
<text x="424.4" y="200.4" font-size="15.8" fill="#d2d2d2" text-anchor="end">1</text>
<line x1="424.4" y1="237.8" x2="430.4" y2="237.8" stroke="#dedede" stroke-width="1.35"/>
<text x="424.4" y="243.9" font-size="15.8" fill="#d2d2d2" text-anchor="end">0</text>
<line x1="424.4" y1="281.3" x2="430.4" y2="281.3" stroke="#dedede" stroke-width="1.35"/>
<text x="424.4" y="287.4" font-size="15.8" fill="#d2d2d2" text-anchor="end">-1</text>
<line x1="424.4" y1="324.8" x2="430.4" y2="324.8" stroke="#dedede" stroke-width="1.35"/>
<text x="424.4" y="330.9" font-size="15.8" fill="#d2d2d2" text-anchor="end">-2</text>
<line x1="424.4" y1="368.3" x2="430.4" y2="368.3" stroke="#dedede" stroke-width="1.35"/>
<text x="424.4" y="374.4" font-size="15.8" fill="#d2d2d2" text-anchor="end">-3</text>
<line x1="424.4" y1="410.8" x2="430.4" y2="410.8" stroke="#dedede" stroke-width="1.35"/>
<text x="424.4" y="417.9" font-size="15.8" fill="#d2d2d2" text-anchor="end">-4</text>
<text x="496.1" y="59.0" font-size="14.3" fill="#d2d2d2" text-anchor="middle" textLength="42.8" lengthAdjust="spacingAndGlyphs">DeltaL</text>
<rect x="626.6" y="64.6" width="150.7" height="346.2" fill="#262626"/>
<line x1="626.6" y1="150.8" x2="777.3" y2="150.8" stroke="#9c9c9c" stroke-width="1.2"/>
<line x1="626.6" y1="237.8" x2="777.3" y2="237.8" stroke="#9c9c9c" stroke-width="1.2"/>
<line x1="626.6" y1="324.8" x2="777.3" y2="324.8" stroke="#9c9c9c" stroke-width="1.2"/>
<rect x="641.4" y="168.6" width="120.7" height="69.8" fill="#000"/>
<rect x="642.6" y="169.8" width="118.1" height="67.2" fill="url(#gDeltaC)"/>
<line x1="626.6" y1="107.3" x2="777.9" y2="107.3" stroke="#e6e628" stroke-width="1.8"/>
<line x1="626.6" y1="194.3" x2="778.8" y2="194.3" stroke="#0f8a22" stroke-width="1.8"/>
<line x1="626.6" y1="281.3" x2="778.8" y2="281.3" stroke="#0f8a22" stroke-width="1.8"/>
<line x1="626.6" y1="368.3" x2="777.9" y2="368.3" stroke="#e6e628" stroke-width="1.8"/>
<rect x="626.6" y="64.6" width="150.7" height="346.2" fill="none" stroke="#9c9c9c" stroke-width="1.3"/>
<line x1="620.6" y1="64.6" x2="626.6" y2="64.6" stroke="#dedede" stroke-width="1.35"/>
<text x="620.6" y="69.9" font-size="15.8" fill="#d2d2d2" text-anchor="end">4</text>
<line x1="620.6" y1="107.3" x2="626.6" y2="107.3" stroke="#dedede" stroke-width="1.35"/>
<text x="620.6" y="113.4" font-size="15.8" fill="#d2d2d2" text-anchor="end">3</text>
<line x1="620.6" y1="150.8" x2="626.6" y2="150.8" stroke="#dedede" stroke-width="1.35"/>
<text x="620.6" y="156.9" font-size="15.8" fill="#d2d2d2" text-anchor="end">2</text>
<line x1="620.6" y1="194.3" x2="626.6" y2="194.3" stroke="#dedede" stroke-width="1.35"/>
<text x="620.6" y="200.4" font-size="15.8" fill="#d2d2d2" text-anchor="end">1</text>
<line x1="620.6" y1="237.8" x2="626.6" y2="237.8" stroke="#dedede" stroke-width="1.35"/>
<text x="620.6" y="243.9" font-size="15.8" fill="#d2d2d2" text-anchor="end">0</text>
<line x1="620.6" y1="281.3" x2="626.6" y2="281.3" stroke="#dedede" stroke-width="1.35"/>
<text x="620.6" y="287.4" font-size="15.8" fill="#d2d2d2" text-anchor="end">-1</text>
<line x1="620.6" y1="324.8" x2="626.6" y2="324.8" stroke="#dedede" stroke-width="1.35"/>
<text x="620.6" y="330.9" font-size="15.8" fill="#d2d2d2" text-anchor="end">-2</text>
<line x1="620.6" y1="368.3" x2="626.6" y2="368.3" stroke="#dedede" stroke-width="1.35"/>
<text x="620.6" y="374.4" font-size="15.8" fill="#d2d2d2" text-anchor="end">-3</text>
<line x1="620.6" y1="410.8" x2="626.6" y2="410.8" stroke="#dedede" stroke-width="1.35"/>
<text x="620.6" y="417.9" font-size="15.8" fill="#d2d2d2" text-anchor="end">-4</text>
<text x="693.0" y="59.0" font-size="14.3" fill="#d2d2d2" text-anchor="middle" textLength="44.9" lengthAdjust="spacingAndGlyphs">DeltaC</text>
<rect x="822.4" y="64.6" width="164.8" height="346.2" fill="#262626"/>
<line x1="822.4" y1="107.3" x2="987.2" y2="107.3" stroke="#9c9c9c" stroke-width="1.2"/>
<line x1="822.4" y1="150.8" x2="987.2" y2="150.8" stroke="#9c9c9c" stroke-width="1.2"/>
<line x1="822.4" y1="194.3" x2="987.2" y2="194.3" stroke="#9c9c9c" stroke-width="1.2"/>
<line x1="822.4" y1="237.8" x2="987.2" y2="237.8" stroke="#9c9c9c" stroke-width="1.2"/>
<line x1="822.4" y1="281.3" x2="987.2" y2="281.3" stroke="#9c9c9c" stroke-width="1.2"/>
<line x1="822.4" y1="324.8" x2="987.2" y2="324.8" stroke="#9c9c9c" stroke-width="1.2"/>
<line x1="822.4" y1="368.3" x2="987.2" y2="368.3" stroke="#9c9c9c" stroke-width="1.2"/>
<rect x="839.6" y="237.2" width="131.6" height="168.8" fill="#000"/>
<rect x="840.8" y="238.4" width="129.0" height="166.2" fill="url(#gDeltaH)"/>
<line x1="822.4" y1="172.6" x2="987.8000000000001" y2="172.6" stroke="#e6e628" stroke-width="1.8"/>
<line x1="822.4" y1="216.1" x2="988.7" y2="216.1" stroke="#0f8a22" stroke-width="1.3"/>
<line x1="822.4" y1="259.6" x2="988.7" y2="259.6" stroke="#0f8a22" stroke-width="1.3"/>
<line x1="822.4" y1="303.1" x2="987.8000000000001" y2="303.1" stroke="#e6e628" stroke-width="1.8"/>
<rect x="822.4" y="64.6" width="164.8" height="346.2" fill="none" stroke="#9c9c9c" stroke-width="1.3"/>
<line x1="816.4" y1="64.6" x2="822.4" y2="64.6" stroke="#dedede" stroke-width="1.35"/>
<text x="816.4" y="69.9" font-size="15.8" fill="#d2d2d2" text-anchor="end">8</text>
<line x1="816.4" y1="107.3" x2="822.4" y2="107.3" stroke="#dedede" stroke-width="1.35"/>
<text x="816.4" y="113.4" font-size="15.8" fill="#d2d2d2" text-anchor="end">6</text>
<line x1="816.4" y1="150.8" x2="822.4" y2="150.8" stroke="#dedede" stroke-width="1.35"/>
<text x="816.4" y="156.9" font-size="15.8" fill="#d2d2d2" text-anchor="end">4</text>
<line x1="816.4" y1="194.3" x2="822.4" y2="194.3" stroke="#dedede" stroke-width="1.35"/>
<text x="816.4" y="200.4" font-size="15.8" fill="#d2d2d2" text-anchor="end">2</text>
<line x1="816.4" y1="237.8" x2="822.4" y2="237.8" stroke="#dedede" stroke-width="1.35"/>
<text x="816.4" y="243.9" font-size="15.8" fill="#d2d2d2" text-anchor="end">0</text>
<line x1="816.4" y1="281.3" x2="822.4" y2="281.3" stroke="#dedede" stroke-width="1.35"/>
<text x="816.4" y="287.4" font-size="15.8" fill="#d2d2d2" text-anchor="end">-2</text>
<line x1="816.4" y1="324.8" x2="822.4" y2="324.8" stroke="#dedede" stroke-width="1.35"/>
<text x="816.4" y="330.9" font-size="15.8" fill="#d2d2d2" text-anchor="end">-4</text>
<line x1="816.4" y1="368.3" x2="822.4" y2="368.3" stroke="#dedede" stroke-width="1.35"/>
<text x="816.4" y="374.4" font-size="15.8" fill="#d2d2d2" text-anchor="end">-6</text>
<line x1="816.4" y1="410.8" x2="822.4" y2="410.8" stroke="#dedede" stroke-width="1.35"/>
<text x="816.4" y="417.9" font-size="15.8" fill="#d2d2d2" text-anchor="end">-8</text>
<text x="895.6" y="59.0" font-size="14.3" fill="#d2d2d2" text-anchor="middle" textLength="45.5" lengthAdjust="spacingAndGlyphs">DeltaH</text>
<rect x="412" y="417.8" width="588.8" height="186.6" fill="#000"/>
<clipPath id="sw"><rect x="412" y="417.8" width="588.8" height="186.6"/></clipPath>
<g clip-path="url(#sw)">
<rect x="430.6" y="425.5" width="59.1" height="60.8" fill="#f7fff5" stroke="#fff" stroke-width="1.2"/>
<rect x="430.6" y="504.7" width="59.1" height="60.8" fill="#fdfdfd" stroke="#fff" stroke-width="1.2"/>
<text x="460.2" y="581.0" font-size="12.2" fill="#fff" text-anchor="middle" stroke="#fff" stroke-width=".28">White</text>
<rect x="500.8" y="425.5" width="59.1" height="60.8" fill="#dde6dd" stroke="#fff" stroke-width="1.2"/>
<rect x="500.8" y="504.7" width="59.1" height="60.8" fill="#e6e6e6" stroke="#fff" stroke-width="1.2"/>
<text x="530.4" y="581.0" font-size="12.2" fill="#fff" text-anchor="middle" stroke="#fff" stroke-width=".28">Gray 80</text>
<rect x="570.9" y="425.5" width="59.1" height="60.8" fill="#c8d0c4" stroke="#fff" stroke-width="1.2"/>
<rect x="570.9" y="504.7" width="59.1" height="60.8" fill="#d1d1d1" stroke="#fff" stroke-width="1.2"/>
<text x="600.5" y="581.0" font-size="12.2" fill="#fff" text-anchor="middle" stroke="#fff" stroke-width=".28">Gray 65</text>
<rect x="641.1" y="425.5" width="59.1" height="60.8" fill="#b2b9af" stroke="#fff" stroke-width="1.2"/>
<rect x="641.1" y="504.7" width="59.1" height="60.8" fill="#bababa" stroke="#fff" stroke-width="1.2"/>
<text x="670.7" y="581.0" font-size="12.2" fill="#fff" text-anchor="middle" stroke="#fff" stroke-width=".28">Gray 50</text>
<rect x="711.3" y="425.5" width="59.1" height="60.8" fill="#989d96" stroke="#fff" stroke-width="1.2"/>
<rect x="711.3" y="504.7" width="59.1" height="60.8" fill="#a0a0a0" stroke="#fff" stroke-width="1.2"/>
<text x="740.9" y="581.0" font-size="12.2" fill="#fff" text-anchor="middle" stroke="#fff" stroke-width=".28">Gray 35</text>
<rect x="781.5" y="425.5" width="59.1" height="60.8" fill="#040508" stroke="#fff" stroke-width="1.2"/>
<rect x="781.5" y="504.7" width="59.1" height="60.8" fill="#000000" stroke="#fff" stroke-width="1.2"/>
<text x="811.1" y="581.0" font-size="12.2" fill="#fff" text-anchor="middle" stroke="#fff" stroke-width=".28">Black</text>
<rect x="851.6" y="425.5" width="59.1" height="60.8" fill="#6f4e3a" stroke="#fff" stroke-width="1.2"/>
<rect x="851.6" y="504.7" width="59.1" height="60.8" fill="#735244" stroke="#fff" stroke-width="1.2"/>
<text x="881.2" y="581.0" font-size="12.2" fill="#fff" text-anchor="middle" stroke="#fff" stroke-width=".28">Dark Skin</text>
<rect x="921.8" y="425.5" width="59.1" height="60.8" fill="#c0927a" stroke="#fff" stroke-width="1.2"/>
<rect x="921.8" y="504.7" width="59.1" height="60.8" fill="#c29682" stroke="#fff" stroke-width="1.2"/>
<text x="951.4" y="581.0" font-size="12.2" fill="#fff" text-anchor="middle" stroke="#fff" stroke-width=".28">Light Skin</text>
<rect x="992.0" y="425.5" width="59.1" height="60.8" fill="#54789c" stroke="#fff" stroke-width="1.2"/>
<rect x="992.0" y="504.7" width="59.1" height="60.8" fill="#627a9d" stroke="#fff" stroke-width="1.2"/>
<text x="1021.6" y="581.0" font-size="12.2" fill="#fff" text-anchor="middle" stroke="#fff" stroke-width=".28">Blue Sky</text>
</g>
<text transform="translate(425.2,456.3) rotate(-90)" font-size="12.6" fill="#fff" text-anchor="middle" stroke="#fff" stroke-width=".4">Actual</text>
<text transform="translate(425.2,535.0) rotate(-90)" font-size="12.6" fill="#fff" text-anchor="middle" stroke="#fff" stroke-width=".4">Target</text>
<rect x="412" y="604.4" width="588.8" height="16.2" fill="#5c5c5c"/>
<rect x="413" y="605.4" width="14" height="14.2" rx="2" fill="#808080"/>
<path d="M424 607.5 L416.5 612.5 L424 617.5Z" fill="#4a4a4a"/>
<rect x="985.5" y="605.4" width="14" height="14.2" rx="2" fill="#808080"/>
<path d="M989 607.5 L996.5 612.5 L989 617.5Z" fill="#4a4a4a"/>
<rect x="430.5" y="606.4" width="188.5" height="12.2" rx="6" fill="#474747"/>
<rect x="1018.7" y="42.5" width="694.3" height="560.7" fill="none" stroke="#0886a5" stroke-width="7.4"/>
<text x="1365.5" y="65.0" font-size="14.3" fill="#d2d2d2" text-anchor="middle" textLength="77.7" lengthAdjust="spacingAndGlyphs">CIE 1931 xy</text>
<rect x="1051.6" y="69.9" width="654.0" height="500.4" fill="#262626"/>
<clipPath id="loc"><path d="M1187.5 566.2 L1187.4 566.2 L1187.2 566.3 L1187.1 566.3 L1186.8 566.3 L1186.6 566.3 L1186.3 566.3 L1185.9 566.3 L1185.4 566.2 L1184.5 565.8 L1183.4 565.1 L1181.9 564.1 L1179.9 562.7 L1179.5 562.4 L1179.1 562.1 L1178.6 561.9 L1178.2 561.6 L1177.8 561.3 L1177.3 561.0 L1176.8 560.6 L1176.2 560.2 L1175.6 559.8 L1175.0 559.5 L1174.4 559.1 L1173.8 558.7 L1173.1 558.2 L1172.4 557.7 L1171.7 557.2 L1170.9 556.7 L1170.2 556.2 L1169.5 555.7 L1168.6 555.0 L1167.6 554.4 L1166.7 553.7 L1165.8 553.0 L1164.9 552.3 L1164.0 551.6 L1162.9 550.6 L1161.8 549.6 L1160.6 548.6 L1159.5 547.6 L1158.5 546.6 L1157.4 545.5 L1155.9 543.8 L1154.3 542.0 L1152.8 540.3 L1151.3 538.5 L1149.9 536.7 L1148.6 534.9 L1146.6 532.0 L1144.6 529.2 L1142.7 526.3 L1140.8 523.5 L1139.0 520.6 L1137.3 517.6 L1134.8 513.1 L1132.3 508.6 L1129.9 504.1 L1127.5 499.5 L1125.3 495.0 L1123.1 490.4 L1119.9 483.7 L1116.8 477.0 L1113.8 470.3 L1110.9 463.5 L1108.1 456.8 L1105.5 450.0 L1102.1 440.7 L1098.9 431.4 L1095.8 422.1 L1092.9 412.7 L1090.1 403.3 L1087.4 393.9 L1084.2 382.3 L1081.1 370.7 L1078.2 359.1 L1075.4 347.4 L1072.8 335.7 L1070.3 324.0 L1067.9 311.6 L1065.6 299.2 L1063.5 286.8 L1061.5 274.3 L1059.8 261.8 L1058.3 249.4 L1057.1 237.9 L1056.0 226.3 L1055.1 214.8 L1054.5 203.3 L1054.1 191.7 L1054.1 180.2 L1054.4 170.6 L1054.8 161.0 L1055.6 151.5 L1056.7 141.9 L1058.4 132.4 L1060.6 122.9 L1062.6 116.2 L1065.0 109.7 L1067.9 103.2 L1071.4 96.9 L1075.6 90.8 L1080.6 85.2 L1084.5 81.9 L1088.9 79.2 L1093.8 76.9 L1098.9 75.1 L1104.3 73.7 L1109.7 72.9 L1115.0 72.7 L1120.3 73.2 L1125.6 74.1 L1130.8 75.4 L1135.9 76.8 L1140.9 78.2 L1146.4 79.9 L1151.7 81.7 L1157.0 83.8 L1162.1 85.9 L1167.3 88.2 L1172.4 90.4 L1177.4 92.7 L1182.5 95.0 L1187.4 97.4 L1192.3 99.8 L1197.2 102.3 L1202.1 104.9 L1206.9 107.4 L1211.7 110.1 L1216.5 112.8 L1221.2 115.5 L1225.9 118.3 L1230.6 121.1 L1235.4 124.0 L1240.1 126.9 L1244.8 129.9 L1249.5 132.9 L1254.1 135.9 L1258.8 138.9 L1263.5 142.0 L1268.1 145.2 L1272.8 148.3 L1277.4 151.5 L1282.0 154.7 L1286.6 157.9 L1291.3 161.2 L1295.9 164.5 L1300.5 167.8 L1305.2 171.1 L1309.8 174.4 L1314.4 177.7 L1319.0 181.1 L1323.7 184.5 L1328.3 187.9 L1333.0 191.3 L1337.6 194.8 L1342.2 198.2 L1346.8 201.6 L1351.5 205.1 L1356.1 208.5 L1360.7 212.0 L1365.3 215.5 L1369.9 218.9 L1374.5 222.4 L1379.1 225.8 L1383.7 229.3 L1388.3 232.7 L1392.8 236.2 L1397.4 239.7 L1401.9 243.1 L1406.4 246.5 L1410.9 249.9 L1415.4 253.3 L1419.9 256.7 L1424.4 260.1 L1428.8 263.5 L1433.1 266.8 L1437.5 270.1 L1441.9 273.5 L1446.2 276.8 L1450.6 280.1 L1454.8 283.3 L1459.0 286.5 L1463.2 289.7 L1467.4 292.9 L1471.5 296.1 L1475.7 299.2 L1479.7 302.2 L1483.6 305.2 L1487.5 308.2 L1491.5 311.2 L1495.4 314.2 L1499.4 317.2 L1503.0 319.9 L1506.6 322.7 L1510.1 325.4 L1513.7 328.2 L1517.3 330.9 L1520.9 333.6 L1524.0 336.0 L1527.2 338.4 L1530.3 340.8 L1533.4 343.1 L1536.5 345.5 L1539.6 347.9 L1542.4 350.0 L1545.1 352.1 L1547.9 354.2 L1550.6 356.3 L1553.4 358.3 L1556.1 360.4 L1558.4 362.2 L1560.7 363.9 L1563.0 365.6 L1565.3 367.3 L1567.5 369.0 L1569.8 370.8 L1571.7 372.2 L1573.5 373.6 L1575.4 375.0 L1577.2 376.4 L1579.1 377.8 L1580.9 379.3 L1582.4 380.4 L1583.9 381.5 L1585.4 382.7 L1586.8 383.8 L1588.3 384.9 L1589.8 386.0 L1591.0 386.9 L1592.2 387.8 L1593.3 388.7 L1594.5 389.6 L1595.7 390.5 L1596.9 391.4 L1597.8 392.1 L1598.8 392.8 L1599.7 393.6 L1600.7 394.3 L1601.6 395.0 L1602.6 395.7 L1603.3 396.3 L1604.1 396.9 L1604.9 397.5 L1605.7 398.1 L1606.5 398.7 L1607.3 399.3 L1608.0 399.8 L1608.6 400.3 L1609.2 400.8 L1609.9 401.3 L1610.5 401.8 L1611.2 402.3 L1611.7 402.7 L1612.2 403.1 L1612.7 403.5 L1613.3 403.9 L1613.8 404.2 L1614.3 404.6 L1614.7 404.9 L1615.1 405.2 L1615.5 405.5 L1615.9 405.8 L1616.2 406.1 L1616.6 406.4 L1618.4 407.8 L1619.7 408.8 L1620.6 409.4 L1621.3 410.0 L1621.8 410.4 L1622.4 410.8 L1622.9 411.2 L1623.2 411.4 L1623.3 411.5 L1623.4 411.6Z"/></clipPath>
<clipPath id="tri"><polygon points="1548.3,373.1 1285.5,212.7 1169.5,533.6"/></clipPath>
<g clip-path="url(#loc)">
<rect x="1102" y="72" width="24" height="2" fill="url(#c0)"/>
<rect x="1095" y="74" width="40" height="2" fill="url(#c1)"/>
<rect x="1090" y="76" width="52" height="2" fill="url(#c2)"/>
<rect x="1086" y="78" width="62" height="2" fill="url(#c3)"/>
<rect x="1083" y="80" width="71" height="2" fill="url(#c4)"/>
<rect x="1081" y="82" width="78" height="2" fill="url(#c5)"/>
<rect x="1078" y="84" width="86" height="2" fill="url(#c6)"/>
<rect x="1077" y="86" width="91" height="2" fill="url(#c7)"/>
<rect x="1075" y="88" width="98" height="2" fill="url(#c8)"/>
<rect x="1073" y="90" width="104" height="2" fill="url(#c9)"/>
<rect x="1072" y="92" width="110" height="2" fill="url(#c10)"/>
<rect x="1071" y="94" width="115" height="2" fill="url(#c11)"/>
<rect x="1069" y="96" width="121" height="2" fill="url(#c12)"/>
<rect x="1068" y="98" width="126" height="2" fill="url(#c13)"/>
<rect x="1067" y="100" width="131" height="2" fill="url(#c14)"/>
<rect x="1066" y="102" width="136" height="2" fill="url(#c15)"/>
<rect x="1065" y="104" width="141" height="2" fill="url(#c16)"/>
<rect x="1064" y="106" width="145" height="2" fill="url(#c17)"/>
<rect x="1063" y="108" width="150" height="2" fill="url(#c18)"/>
<rect x="1063" y="110" width="154" height="2" fill="url(#c19)"/>
<rect x="1062" y="112" width="158" height="2" fill="url(#c20)"/>
<rect x="1061" y="114" width="163" height="2" fill="url(#c21)"/>
<rect x="1061" y="116" width="166" height="2" fill="url(#c22)"/>
<rect x="1060" y="118" width="170" height="2" fill="url(#c23)"/>
<rect x="1059" y="120" width="175" height="2" fill="url(#c24)"/>
<rect x="1059" y="122" width="178" height="2" fill="url(#c25)"/>
<rect x="1058" y="124" width="182" height="2" fill="url(#c26)"/>
<rect x="1058" y="126" width="185" height="2" fill="url(#c27)"/>
<rect x="1057" y="128" width="190" height="2" fill="url(#c28)"/>
<rect x="1057" y="130" width="193" height="2" fill="url(#c29)"/>
<rect x="1057" y="132" width="196" height="2" fill="url(#c30)"/>
<rect x="1056" y="134" width="200" height="2" fill="url(#c31)"/>
<rect x="1056" y="136" width="203" height="2" fill="url(#c32)"/>
<rect x="1056" y="138" width="206" height="2" fill="url(#c33)"/>
<rect x="1055" y="140" width="210" height="2" fill="url(#c34)"/>
<rect x="1055" y="142" width="213" height="2" fill="url(#c35)"/>
<rect x="1055" y="144" width="216" height="2" fill="url(#c36)"/>
<rect x="1054" y="146" width="220" height="2" fill="url(#c37)"/>
<rect x="1054" y="148" width="223" height="2" fill="url(#c38)"/>
<rect x="1054" y="150" width="226" height="2" fill="url(#c39)"/>
<rect x="1054" y="152" width="229" height="2" fill="url(#c40)"/>
<rect x="1054" y="154" width="231" height="2" fill="url(#c41)"/>
<rect x="1054" y="156" width="234" height="2" fill="url(#c42)"/>
<rect x="1053" y="158" width="238" height="2" fill="url(#c43)"/>
<rect x="1053" y="160" width="241" height="2" fill="url(#c44)"/>
<rect x="1053" y="162" width="244" height="2" fill="url(#c45)"/>
<rect x="1053" y="164" width="247" height="2" fill="url(#c46)"/>
<rect x="1053" y="166" width="249" height="2" fill="url(#c47)"/>
<rect x="1053" y="168" width="252" height="2" fill="url(#c48)"/>
<rect x="1053" y="170" width="255" height="2" fill="url(#c49)"/>
<rect x="1053" y="172" width="258" height="2" fill="url(#c50)"/>
<rect x="1053" y="174" width="260" height="2" fill="url(#c51)"/>
<rect x="1053" y="176" width="263" height="2" fill="url(#c52)"/>
<rect x="1053" y="178" width="266" height="2" fill="url(#c53)"/>
<rect x="1053" y="180" width="269" height="2" fill="url(#c54)"/>
<rect x="1053" y="182" width="271" height="2" fill="url(#c55)"/>
<rect x="1053" y="184" width="274" height="2" fill="url(#c56)"/>
<rect x="1053" y="186" width="277" height="2" fill="url(#c57)"/>
<rect x="1053" y="188" width="280" height="2" fill="url(#c58)"/>
<rect x="1053" y="190" width="282" height="2" fill="url(#c59)"/>
<rect x="1053" y="192" width="285" height="2" fill="url(#c60)"/>
<rect x="1053" y="194" width="288" height="2" fill="url(#c61)"/>
<rect x="1053" y="196" width="290" height="2" fill="url(#c62)"/>
<rect x="1053" y="198" width="293" height="2" fill="url(#c63)"/>
<rect x="1053" y="200" width="296" height="2" fill="url(#c64)"/>
<rect x="1053" y="202" width="299" height="2" fill="url(#c65)"/>
<rect x="1053" y="204" width="301" height="2" fill="url(#c66)"/>
<rect x="1053" y="206" width="304" height="2" fill="url(#c67)"/>
<rect x="1053" y="208" width="307" height="2" fill="url(#c68)"/>
<rect x="1053" y="210" width="309" height="2" fill="url(#c69)"/>
<rect x="1053" y="212" width="312" height="2" fill="url(#c70)"/>
<rect x="1054" y="214" width="314" height="2" fill="url(#c71)"/>
<rect x="1054" y="216" width="316" height="2" fill="url(#c72)"/>
<rect x="1054" y="218" width="319" height="2" fill="url(#c73)"/>
<rect x="1054" y="220" width="321" height="2" fill="url(#c74)"/>
<rect x="1054" y="222" width="324" height="2" fill="url(#c75)"/>
<rect x="1054" y="224" width="327" height="2" fill="url(#c76)"/>
<rect x="1054" y="226" width="329" height="2" fill="url(#c77)"/>
<rect x="1055" y="228" width="331" height="2" fill="url(#c78)"/>
<rect x="1055" y="230" width="334" height="2" fill="url(#c79)"/>
<rect x="1055" y="232" width="336" height="2" fill="url(#c80)"/>
<rect x="1055" y="234" width="339" height="2" fill="url(#c81)"/>
<rect x="1055" y="236" width="342" height="2" fill="url(#c82)"/>
<rect x="1056" y="238" width="343" height="2" fill="url(#c83)"/>
<rect x="1056" y="240" width="346" height="2" fill="url(#c84)"/>
<rect x="1056" y="242" width="349" height="2" fill="url(#c85)"/>
<rect x="1056" y="244" width="351" height="2" fill="url(#c86)"/>
<rect x="1056" y="246" width="354" height="2" fill="url(#c87)"/>
<rect x="1057" y="248" width="356" height="2" fill="url(#c88)"/>
<rect x="1057" y="250" width="358" height="2" fill="url(#c89)"/>
<rect x="1057" y="252" width="361" height="2" fill="url(#c90)"/>
<rect x="1057" y="254" width="363" height="2" fill="url(#c91)"/>
<rect x="1058" y="256" width="365" height="2" fill="url(#c92)"/>
<rect x="1058" y="258" width="368" height="2" fill="url(#c93)"/>
<rect x="1058" y="260" width="370" height="2" fill="url(#c94)"/>
<rect x="1058" y="262" width="373" height="2" fill="url(#c95)"/>
<rect x="1059" y="264" width="375" height="2" fill="url(#c96)"/>
<rect x="1059" y="266" width="377" height="2" fill="url(#c97)"/>
<rect x="1059" y="268" width="380" height="2" fill="url(#c98)"/>
<rect x="1059" y="270" width="382" height="2" fill="url(#c99)"/>
<rect x="1060" y="272" width="384" height="2" fill="url(#c100)"/>
<rect x="1060" y="274" width="387" height="2" fill="url(#c101)"/>
<rect x="1060" y="276" width="389" height="2" fill="url(#c102)"/>
<rect x="1061" y="278" width="391" height="2" fill="url(#c103)"/>
<rect x="1061" y="280" width="394" height="2" fill="url(#c104)"/>
<rect x="1061" y="282" width="396" height="2" fill="url(#c105)"/>
<rect x="1062" y="284" width="398" height="2" fill="url(#c106)"/>
<rect x="1062" y="286" width="400" height="2" fill="url(#c107)"/>
<rect x="1062" y="288" width="403" height="2" fill="url(#c108)"/>
<rect x="1063" y="290" width="405" height="2" fill="url(#c109)"/>
<rect x="1063" y="292" width="407" height="2" fill="url(#c110)"/>
<rect x="1063" y="294" width="410" height="2" fill="url(#c111)"/>
<rect x="1064" y="296" width="412" height="2" fill="url(#c112)"/>
<rect x="1064" y="298" width="414" height="2" fill="url(#c113)"/>
<rect x="1064" y="300" width="417" height="2" fill="url(#c114)"/>
<rect x="1065" y="302" width="418" height="2" fill="url(#c115)"/>
<rect x="1065" y="304" width="421" height="2" fill="url(#c116)"/>
<rect x="1065" y="306" width="424" height="2" fill="url(#c117)"/>
<rect x="1066" y="308" width="425" height="2" fill="url(#c118)"/>
<rect x="1066" y="310" width="428" height="2" fill="url(#c119)"/>
<rect x="1066" y="312" width="431" height="2" fill="url(#c120)"/>
<rect x="1067" y="314" width="432" height="2" fill="url(#c121)"/>
<rect x="1067" y="316" width="435" height="2" fill="url(#c122)"/>
<rect x="1068" y="318" width="437" height="2" fill="url(#c123)"/>
<rect x="1068" y="320" width="439" height="2" fill="url(#c124)"/>
<rect x="1068" y="322" width="442" height="2" fill="url(#c125)"/>
<rect x="1069" y="324" width="443" height="2" fill="url(#c126)"/>
<rect x="1069" y="326" width="446" height="2" fill="url(#c127)"/>
<rect x="1070" y="328" width="448" height="2" fill="url(#c128)"/>
<rect x="1070" y="330" width="450" height="2" fill="url(#c129)"/>
<rect x="1070" y="332" width="453" height="2" fill="url(#c130)"/>
<rect x="1071" y="334" width="455" height="2" fill="url(#c131)"/>
<rect x="1071" y="336" width="457" height="2" fill="url(#c132)"/>
<rect x="1072" y="338" width="459" height="2" fill="url(#c133)"/>
<rect x="1072" y="340" width="461" height="2" fill="url(#c134)"/>
<rect x="1073" y="342" width="463" height="2" fill="url(#c135)"/>
<rect x="1073" y="344" width="466" height="2" fill="url(#c136)"/>
<rect x="1074" y="346" width="467" height="2" fill="url(#c137)"/>
<rect x="1074" y="348" width="470" height="2" fill="url(#c138)"/>
<rect x="1075" y="350" width="472" height="2" fill="url(#c139)"/>
<rect x="1075" y="352" width="474" height="2" fill="url(#c140)"/>
<rect x="1075" y="354" width="477" height="2" fill="url(#c141)"/>
<rect x="1076" y="356" width="478" height="2" fill="url(#c142)"/>
<rect x="1076" y="358" width="481" height="2" fill="url(#c143)"/>
<rect x="1077" y="360" width="483" height="2" fill="url(#c144)"/>
<rect x="1077" y="362" width="485" height="2" fill="url(#c145)"/>
<rect x="1078" y="364" width="487" height="2" fill="url(#c146)"/>
<rect x="1078" y="366" width="490" height="2" fill="url(#c147)"/>
<rect x="1079" y="368" width="491" height="2" fill="url(#c148)"/>
<rect x="1079" y="370" width="494" height="2" fill="url(#c149)"/>
<rect x="1080" y="372" width="496" height="2" fill="url(#c150)"/>
<rect x="1080" y="374" width="498" height="2" fill="url(#c151)"/>
<rect x="1081" y="376" width="500" height="2" fill="url(#c152)"/>
<rect x="1082" y="378" width="501" height="2" fill="url(#c153)"/>
<rect x="1082" y="380" width="504" height="2" fill="url(#c154)"/>
<rect x="1083" y="382" width="506" height="2" fill="url(#c155)"/>
<rect x="1083" y="384" width="508" height="2" fill="url(#c156)"/>
<rect x="1084" y="386" width="510" height="2" fill="url(#c157)"/>
<rect x="1084" y="388" width="513" height="2" fill="url(#c158)"/>
<rect x="1085" y="390" width="514" height="2" fill="url(#c159)"/>
<rect x="1085" y="392" width="517" height="2" fill="url(#c160)"/>
<rect x="1086" y="394" width="518" height="2" fill="url(#c161)"/>
<rect x="1086" y="396" width="521" height="2" fill="url(#c162)"/>
<rect x="1087" y="398" width="523" height="2" fill="url(#c163)"/>
<rect x="1088" y="400" width="524" height="2" fill="url(#c164)"/>
<rect x="1088" y="402" width="527" height="2" fill="url(#c165)"/>
<rect x="1089" y="404" width="529" height="2" fill="url(#c166)"/>
<rect x="1089" y="406" width="531" height="2" fill="url(#c167)"/>
<rect x="1090" y="408" width="533" height="2" fill="url(#c168)"/>
<rect x="1091" y="410" width="533" height="2" fill="url(#c169)"/>
<rect x="1091" y="412" width="533" height="2" fill="url(#c170)"/>
<rect x="1092" y="414" width="526" height="2" fill="url(#c171)"/>
<rect x="1092" y="416" width="520" height="2" fill="url(#c172)"/>
<rect x="1093" y="418" width="514" height="2" fill="url(#c173)"/>
<rect x="1094" y="420" width="507" height="2" fill="url(#c174)"/>
<rect x="1094" y="422" width="502" height="2" fill="url(#c175)"/>
<rect x="1095" y="424" width="495" height="2" fill="url(#c176)"/>
<rect x="1096" y="426" width="488" height="2" fill="url(#c177)"/>
<rect x="1096" y="428" width="483" height="2" fill="url(#c178)"/>
<rect x="1097" y="430" width="476" height="2" fill="url(#c179)"/>
<rect x="1098" y="432" width="469" height="2" fill="url(#c180)"/>
<rect x="1098" y="434" width="464" height="2" fill="url(#c181)"/>
<rect x="1099" y="436" width="457" height="2" fill="url(#c182)"/>
<rect x="1100" y="438" width="450" height="2" fill="url(#c183)"/>
<rect x="1100" y="440" width="445" height="2" fill="url(#c184)"/>
<rect x="1101" y="442" width="438" height="2" fill="url(#c185)"/>
<rect x="1102" y="444" width="432" height="2" fill="url(#c186)"/>
<rect x="1103" y="446" width="425" height="2" fill="url(#c187)"/>
<rect x="1103" y="448" width="419" height="2" fill="url(#c188)"/>
<rect x="1104" y="450" width="413" height="2" fill="url(#c189)"/>
<rect x="1105" y="452" width="406" height="2" fill="url(#c190)"/>
<rect x="1106" y="454" width="399" height="2" fill="url(#c191)"/>
<rect x="1106" y="456" width="394" height="2" fill="url(#c192)"/>
<rect x="1107" y="458" width="387" height="2" fill="url(#c193)"/>
<rect x="1108" y="460" width="380" height="2" fill="url(#c194)"/>
<rect x="1109" y="462" width="374" height="2" fill="url(#c195)"/>
<rect x="1110" y="464" width="367" height="2" fill="url(#c196)"/>
<rect x="1110" y="466" width="362" height="2" fill="url(#c197)"/>
<rect x="1111" y="468" width="355" height="2" fill="url(#c198)"/>
<rect x="1112" y="470" width="348" height="2" fill="url(#c199)"/>
<rect x="1113" y="472" width="342" height="2" fill="url(#c200)"/>
<rect x="1114" y="474" width="335" height="2" fill="url(#c201)"/>
<rect x="1115" y="476" width="328" height="2" fill="url(#c202)"/>
<rect x="1116" y="478" width="322" height="2" fill="url(#c203)"/>
<rect x="1117" y="480" width="315" height="2" fill="url(#c204)"/>
<rect x="1118" y="482" width="308" height="2" fill="url(#c205)"/>
<rect x="1119" y="484" width="302" height="2" fill="url(#c206)"/>
<rect x="1120" y="486" width="295" height="2" fill="url(#c207)"/>
<rect x="1120" y="488" width="289" height="2" fill="url(#c208)"/>
<rect x="1121" y="490" width="283" height="2" fill="url(#c209)"/>
<rect x="1122" y="492" width="276" height="2" fill="url(#c210)"/>
<rect x="1123" y="494" width="270" height="2" fill="url(#c211)"/>
<rect x="1124" y="496" width="263" height="2" fill="url(#c212)"/>
<rect x="1125" y="498" width="256" height="2" fill="url(#c213)"/>
<rect x="1126" y="500" width="250" height="2" fill="url(#c214)"/>
<rect x="1127" y="502" width="243" height="2" fill="url(#c215)"/>
<rect x="1128" y="504" width="236" height="2" fill="url(#c216)"/>
<rect x="1129" y="506" width="230" height="2" fill="url(#c217)"/>
<rect x="1130" y="508" width="223" height="2" fill="url(#c218)"/>
<rect x="1132" y="510" width="215" height="2" fill="url(#c219)"/>
<rect x="1133" y="512" width="209" height="2" fill="url(#c220)"/>
<rect x="1134" y="514" width="202" height="2" fill="url(#c221)"/>
<rect x="1135" y="516" width="196" height="2" fill="url(#c222)"/>
<rect x="1136" y="518" width="189" height="2" fill="url(#c223)"/>
<rect x="1137" y="520" width="182" height="2" fill="url(#c224)"/>
<rect x="1138" y="522" width="176" height="2" fill="url(#c225)"/>
<rect x="1140" y="524" width="168" height="2" fill="url(#c226)"/>
<rect x="1141" y="526" width="161" height="2" fill="url(#c227)"/>
<rect x="1142" y="528" width="155" height="2" fill="url(#c228)"/>
<rect x="1144" y="530" width="147" height="2" fill="url(#c229)"/>
<rect x="1145" y="532" width="140" height="2" fill="url(#c230)"/>
<rect x="1146" y="534" width="134" height="2" fill="url(#c231)"/>
<rect x="1148" y="536" width="126" height="2" fill="url(#c232)"/>
<rect x="1149" y="538" width="120" height="2" fill="url(#c233)"/>
<rect x="1151" y="540" width="112" height="2" fill="url(#c234)"/>
<rect x="1153" y="542" width="104" height="2" fill="url(#c235)"/>
<rect x="1155" y="544" width="97" height="2" fill="url(#c236)"/>
<rect x="1156" y="546" width="90" height="2" fill="url(#c237)"/>
<rect x="1158" y="548" width="82" height="2" fill="url(#c238)"/>
<rect x="1161" y="550" width="74" height="2" fill="url(#c239)"/>
<rect x="1163" y="552" width="66" height="2" fill="url(#c240)"/>
<rect x="1166" y="554" width="57" height="2" fill="url(#c241)"/>
<rect x="1168" y="556" width="50" height="2" fill="url(#c242)"/>
<rect x="1171" y="558" width="41" height="2" fill="url(#c243)"/>
<rect x="1174" y="560" width="33" height="2" fill="url(#c244)"/>
<rect x="1177" y="562" width="24" height="2" fill="url(#c245)"/>
<rect x="1180" y="564" width="15" height="2" fill="url(#c246)"/>
<rect x="1184" y="566" width="6" height="2" fill="url(#c247)"/>
</g>
<g clip-path="url(#tri)">
<rect x="1284" y="212" width="5" height="2" fill="url(#d0)"/>
<rect x="1283" y="214" width="9" height="2" fill="url(#d1)"/>
<rect x="1282" y="216" width="14" height="2" fill="url(#d2)"/>
<rect x="1281" y="218" width="18" height="2" fill="url(#d3)"/>
<rect x="1281" y="220" width="21" height="2" fill="url(#d4)"/>
<rect x="1280" y="222" width="25" height="2" fill="url(#d5)"/>
<rect x="1279" y="224" width="30" height="2" fill="url(#d6)"/>
<rect x="1278" y="226" width="34" height="2" fill="url(#d7)"/>
<rect x="1278" y="228" width="37" height="2" fill="url(#d8)"/>
<rect x="1277" y="230" width="42" height="2" fill="url(#d9)"/>
<rect x="1276" y="232" width="46" height="2" fill="url(#d10)"/>
<rect x="1276" y="234" width="49" height="2" fill="url(#d11)"/>
<rect x="1275" y="236" width="53" height="2" fill="url(#d12)"/>
<rect x="1274" y="238" width="58" height="2" fill="url(#d13)"/>
<rect x="1273" y="240" width="62" height="2" fill="url(#d14)"/>
<rect x="1273" y="242" width="65" height="2" fill="url(#d15)"/>
<rect x="1272" y="244" width="69" height="2" fill="url(#d16)"/>
<rect x="1271" y="246" width="74" height="2" fill="url(#d17)"/>
<rect x="1271" y="248" width="77" height="2" fill="url(#d18)"/>
<rect x="1270" y="250" width="81" height="2" fill="url(#d19)"/>
<rect x="1269" y="252" width="86" height="2" fill="url(#d20)"/>
<rect x="1268" y="254" width="90" height="2" fill="url(#d21)"/>
<rect x="1268" y="256" width="93" height="2" fill="url(#d22)"/>
<rect x="1267" y="258" width="97" height="2" fill="url(#d23)"/>
<rect x="1266" y="260" width="102" height="2" fill="url(#d24)"/>
<rect x="1265" y="262" width="106" height="2" fill="url(#d25)"/>
<rect x="1265" y="264" width="109" height="2" fill="url(#d26)"/>
<rect x="1264" y="266" width="114" height="2" fill="url(#d27)"/>
<rect x="1263" y="268" width="118" height="2" fill="url(#d28)"/>
<rect x="1263" y="270" width="121" height="2" fill="url(#d29)"/>
<rect x="1262" y="272" width="125" height="2" fill="url(#d30)"/>
<rect x="1261" y="274" width="130" height="2" fill="url(#d31)"/>
<rect x="1260" y="276" width="134" height="2" fill="url(#d32)"/>
<rect x="1260" y="278" width="137" height="2" fill="url(#d33)"/>
<rect x="1259" y="280" width="141" height="2" fill="url(#d34)"/>
<rect x="1258" y="282" width="146" height="2" fill="url(#d35)"/>
<rect x="1258" y="284" width="149" height="2" fill="url(#d36)"/>
<rect x="1257" y="286" width="153" height="2" fill="url(#d37)"/>
<rect x="1256" y="288" width="158" height="2" fill="url(#d38)"/>
<rect x="1255" y="290" width="162" height="2" fill="url(#d39)"/>
<rect x="1255" y="292" width="165" height="2" fill="url(#d40)"/>
<rect x="1254" y="294" width="169" height="2" fill="url(#d41)"/>
<rect x="1253" y="296" width="174" height="2" fill="url(#d42)"/>
<rect x="1252" y="298" width="178" height="2" fill="url(#d43)"/>
<rect x="1252" y="300" width="181" height="2" fill="url(#d44)"/>
<rect x="1251" y="302" width="186" height="2" fill="url(#d45)"/>
<rect x="1250" y="304" width="190" height="2" fill="url(#d46)"/>
<rect x="1250" y="306" width="193" height="2" fill="url(#d47)"/>
<rect x="1249" y="308" width="197" height="2" fill="url(#d48)"/>
<rect x="1248" y="310" width="202" height="2" fill="url(#d49)"/>
<rect x="1247" y="312" width="206" height="2" fill="url(#d50)"/>
<rect x="1247" y="314" width="209" height="2" fill="url(#d51)"/>
<rect x="1246" y="316" width="213" height="2" fill="url(#d52)"/>
<rect x="1245" y="318" width="218" height="2" fill="url(#d53)"/>
<rect x="1245" y="320" width="221" height="2" fill="url(#d54)"/>
<rect x="1244" y="322" width="225" height="2" fill="url(#d55)"/>
<rect x="1243" y="324" width="230" height="2" fill="url(#d56)"/>
<rect x="1242" y="326" width="234" height="2" fill="url(#d57)"/>
<rect x="1242" y="328" width="237" height="2" fill="url(#d58)"/>
<rect x="1241" y="330" width="241" height="2" fill="url(#d59)"/>
<rect x="1240" y="332" width="246" height="2" fill="url(#d60)"/>
<rect x="1239" y="334" width="250" height="2" fill="url(#d61)"/>
<rect x="1239" y="336" width="253" height="2" fill="url(#d62)"/>
<rect x="1238" y="338" width="258" height="2" fill="url(#d63)"/>
<rect x="1237" y="340" width="262" height="2" fill="url(#d64)"/>
<rect x="1237" y="342" width="265" height="2" fill="url(#d65)"/>
<rect x="1236" y="344" width="269" height="2" fill="url(#d66)"/>
<rect x="1235" y="346" width="274" height="2" fill="url(#d67)"/>
<rect x="1234" y="348" width="278" height="2" fill="url(#d68)"/>
<rect x="1234" y="350" width="281" height="2" fill="url(#d69)"/>
<rect x="1233" y="352" width="285" height="2" fill="url(#d70)"/>
<rect x="1232" y="354" width="290" height="2" fill="url(#d71)"/>
<rect x="1231" y="356" width="294" height="2" fill="url(#d72)"/>
<rect x="1231" y="358" width="297" height="2" fill="url(#d73)"/>
<rect x="1230" y="360" width="302" height="2" fill="url(#d74)"/>
<rect x="1229" y="362" width="306" height="2" fill="url(#d75)"/>
<rect x="1229" y="364" width="309" height="2" fill="url(#d76)"/>
<rect x="1228" y="366" width="313" height="2" fill="url(#d77)"/>
<rect x="1227" y="368" width="318" height="2" fill="url(#d78)"/>
<rect x="1226" y="370" width="322" height="2" fill="url(#d79)"/>
<rect x="1226" y="372" width="324" height="2" fill="url(#d80)"/>
<rect x="1225" y="374" width="323" height="2" fill="url(#d81)"/>
<rect x="1224" y="376" width="319" height="2" fill="url(#d82)"/>
<rect x="1224" y="378" width="314" height="2" fill="url(#d83)"/>
<rect x="1223" y="380" width="311" height="2" fill="url(#d84)"/>
<rect x="1222" y="382" width="307" height="2" fill="url(#d85)"/>
<rect x="1221" y="384" width="303" height="2" fill="url(#d86)"/>
<rect x="1221" y="386" width="298" height="2" fill="url(#d87)"/>
<rect x="1220" y="388" width="295" height="2" fill="url(#d88)"/>
<rect x="1219" y="390" width="291" height="2" fill="url(#d89)"/>
<rect x="1218" y="392" width="287" height="2" fill="url(#d90)"/>
<rect x="1218" y="394" width="283" height="2" fill="url(#d91)"/>
<rect x="1217" y="396" width="279" height="2" fill="url(#d92)"/>
<rect x="1216" y="398" width="275" height="2" fill="url(#d93)"/>
<rect x="1216" y="400" width="270" height="2" fill="url(#d94)"/>
<rect x="1215" y="402" width="267" height="2" fill="url(#d95)"/>
<rect x="1214" y="404" width="263" height="2" fill="url(#d96)"/>
<rect x="1213" y="406" width="259" height="2" fill="url(#d97)"/>
<rect x="1213" y="408" width="255" height="2" fill="url(#d98)"/>
<rect x="1212" y="410" width="251" height="2" fill="url(#d99)"/>
<rect x="1211" y="412" width="247" height="2" fill="url(#d100)"/>
<rect x="1211" y="414" width="242" height="2" fill="url(#d101)"/>
<rect x="1210" y="416" width="239" height="2" fill="url(#d102)"/>
<rect x="1209" y="418" width="235" height="2" fill="url(#d103)"/>
<rect x="1208" y="420" width="231" height="2" fill="url(#d104)"/>
<rect x="1208" y="422" width="226" height="2" fill="url(#d105)"/>
<rect x="1207" y="424" width="223" height="2" fill="url(#d106)"/>
<rect x="1206" y="426" width="219" height="2" fill="url(#d107)"/>
<rect x="1205" y="428" width="215" height="2" fill="url(#d108)"/>
<rect x="1205" y="430" width="211" height="2" fill="url(#d109)"/>
<rect x="1204" y="432" width="207" height="2" fill="url(#d110)"/>
<rect x="1203" y="434" width="203" height="2" fill="url(#d111)"/>
<rect x="1203" y="436" width="198" height="2" fill="url(#d112)"/>
<rect x="1202" y="438" width="195" height="2" fill="url(#d113)"/>
<rect x="1201" y="440" width="191" height="2" fill="url(#d114)"/>
<rect x="1200" y="442" width="187" height="2" fill="url(#d115)"/>
<rect x="1200" y="444" width="183" height="2" fill="url(#d116)"/>
<rect x="1199" y="446" width="179" height="2" fill="url(#d117)"/>
<rect x="1198" y="448" width="175" height="2" fill="url(#d118)"/>
<rect x="1198" y="450" width="170" height="2" fill="url(#d119)"/>
<rect x="1197" y="452" width="167" height="2" fill="url(#d120)"/>
<rect x="1196" y="454" width="163" height="2" fill="url(#d121)"/>
<rect x="1195" y="456" width="159" height="2" fill="url(#d122)"/>
<rect x="1195" y="458" width="154" height="2" fill="url(#d123)"/>
<rect x="1194" y="460" width="151" height="2" fill="url(#d124)"/>
<rect x="1193" y="462" width="147" height="2" fill="url(#d125)"/>
<rect x="1192" y="464" width="143" height="2" fill="url(#d126)"/>
<rect x="1192" y="466" width="139" height="2" fill="url(#d127)"/>
<rect x="1191" y="468" width="135" height="2" fill="url(#d128)"/>
<rect x="1190" y="470" width="131" height="2" fill="url(#d129)"/>
<rect x="1190" y="472" width="126" height="2" fill="url(#d130)"/>
<rect x="1189" y="474" width="123" height="2" fill="url(#d131)"/>
<rect x="1188" y="476" width="119" height="2" fill="url(#d132)"/>
<rect x="1187" y="478" width="115" height="2" fill="url(#d133)"/>
<rect x="1187" y="480" width="111" height="2" fill="url(#d134)"/>
<rect x="1186" y="482" width="107" height="2" fill="url(#d135)"/>
<rect x="1185" y="484" width="103" height="2" fill="url(#d136)"/>
<rect x="1185" y="486" width="98" height="2" fill="url(#d137)"/>
<rect x="1184" y="488" width="95" height="2" fill="url(#d138)"/>
<rect x="1183" y="490" width="91" height="2" fill="url(#d139)"/>
<rect x="1182" y="492" width="87" height="2" fill="url(#d140)"/>
<rect x="1182" y="494" width="82" height="2" fill="url(#d141)"/>
<rect x="1181" y="496" width="79" height="2" fill="url(#d142)"/>
<rect x="1180" y="498" width="75" height="2" fill="url(#d143)"/>
<rect x="1179" y="500" width="71" height="2" fill="url(#d144)"/>
<rect x="1179" y="502" width="67" height="2" fill="url(#d145)"/>
<rect x="1178" y="504" width="63" height="2" fill="url(#d146)"/>
<rect x="1177" y="506" width="59" height="2" fill="url(#d147)"/>
<rect x="1177" y="508" width="54" height="2" fill="url(#d148)"/>
<rect x="1176" y="510" width="51" height="2" fill="url(#d149)"/>
<rect x="1175" y="512" width="47" height="2" fill="url(#d150)"/>
<rect x="1174" y="514" width="43" height="2" fill="url(#d151)"/>
<rect x="1174" y="516" width="39" height="2" fill="url(#d152)"/>
<rect x="1173" y="518" width="35" height="2" fill="url(#d153)"/>
<rect x="1172" y="520" width="31" height="2" fill="url(#d154)"/>
<rect x="1172" y="522" width="26" height="2" fill="url(#d155)"/>
<rect x="1171" y="524" width="23" height="2" fill="url(#d156)"/>
<rect x="1170" y="526" width="19" height="2" fill="url(#d157)"/>
<rect x="1169" y="528" width="15" height="2" fill="url(#d158)"/>
<rect x="1169" y="530" width="10" height="2" fill="url(#d159)"/>
<rect x="1168" y="532" width="7" height="2" fill="url(#d160)"/>
</g>
<rect x="1282.1" y="270.8" width="13.4" height="13.4" fill="none" stroke="#fff" stroke-opacity=".93" stroke-width="1.45"/>
<rect x="1337.4" y="269.3" width="13.4" height="13.4" fill="none" stroke="#fff" stroke-opacity=".93" stroke-width="1.45"/>
<rect x="1309.4" y="309.0" width="13.4" height="13.4" fill="none" stroke="#fff" stroke-opacity=".93" stroke-width="1.45"/>
<rect x="1391.7" y="280.7" width="13.4" height="13.4" fill="none" stroke="#fff" stroke-opacity=".93" stroke-width="1.45"/>
<rect x="1412.8" y="301.8" width="13.4" height="13.4" fill="none" stroke="#fff" stroke-opacity=".93" stroke-width="1.45"/>
<rect x="1443.8" y="321.3" width="13.4" height="13.4" fill="none" stroke="#fff" stroke-opacity=".93" stroke-width="1.45"/>
<rect x="1248.9" y="347.7" width="13.4" height="13.4" fill="none" stroke="#fff" stroke-opacity=".93" stroke-width="1.45"/>
<rect x="1339.8" y="351.0" width="13.4" height="13.4" fill="none" stroke="#fff" stroke-opacity=".93" stroke-width="1.45"/>
<rect x="1355.7" y="346.2" width="13.4" height="13.4" fill="none" stroke="#fff" stroke-opacity=".93" stroke-width="1.45"/>
<rect x="1206.9" y="402.6" width="13.4" height="13.4" fill="none" stroke="#fff" stroke-opacity=".93" stroke-width="1.45"/>
<rect x="1238.6" y="403.8" width="13.4" height="13.4" fill="none" stroke="#fff" stroke-opacity=".93" stroke-width="1.45"/>
<rect x="1252.8" y="412.1" width="13.4" height="13.4" fill="none" stroke="#fff" stroke-opacity=".93" stroke-width="1.45"/>
<rect x="1335.8" y="415.3" width="13.4" height="13.4" fill="none" stroke="#fff" stroke-opacity=".93" stroke-width="1.45"/>
<rect x="1269.8" y="430.8" width="13.4" height="13.4" fill="none" stroke="#fff" stroke-opacity=".93" stroke-width="1.45"/>
<rect x="1213.8" y="448.7" width="13.4" height="13.4" fill="none" stroke="#fff" stroke-opacity=".93" stroke-width="1.45"/>
<rect x="1194.3" y="478.3" width="13.4" height="13.4" fill="none" stroke="#fff" stroke-opacity=".93" stroke-width="1.45"/>
<rect x="1404.3" y="375.7" width="13.4" height="13.4" fill="none" stroke="#fff" stroke-opacity=".93" stroke-width="1.45"/>
<rect x="1461.8" y="373.3" width="13.4" height="13.4" fill="none" stroke="#fff" stroke-opacity=".93" stroke-width="1.45"/>
<circle cx="1285.8" cy="262.1" r="4.3" fill="#5e8460" stroke="#141414" stroke-width="1.3"/>
<circle cx="1344.1" cy="266.0" r="4.3" fill="#a6a84e" stroke="#141414" stroke-width="1.3"/>
<circle cx="1319.0" cy="301.0" r="4.3" fill="#5a5f50" stroke="#141414" stroke-width="1.3"/>
<circle cx="1402.9" cy="284.3" r="4.3" fill="#d8b450" stroke="#141414" stroke-width="1.3"/>
<circle cx="1428.0" cy="305.3" r="4.3" fill="#d6a252" stroke="#141414" stroke-width="1.3"/>
<circle cx="1461.8" cy="326.4" r="4.3" fill="#c8884a" stroke="#141414" stroke-width="1.3"/>
<circle cx="1253.1" cy="342.9" r="4.3" fill="#86a8a0" stroke="#141414" stroke-width="1.3"/>
<circle cx="1354.0" cy="349.7" r="4.3" fill="#a89292" stroke="#141414" stroke-width="1.3"/>
<circle cx="1375.1" cy="344.9" r="4.3" fill="#6a5858" stroke="#141414" stroke-width="1.3"/>
<circle cx="1211.0" cy="399.1" r="4.3" fill="#2a8c9c" stroke="#141414" stroke-width="1.3"/>
<circle cx="1242.9" cy="403.9" r="4.3" fill="#8088a0" stroke="#141414" stroke-width="1.3"/>
<circle cx="1260.1" cy="413.4" r="4.3" fill="#8a88a8" stroke="#141414" stroke-width="1.3"/>
<circle cx="1354.0" cy="420.6" r="4.3" fill="#a06a8c" stroke="#141414" stroke-width="1.3"/>
<circle cx="1281.0" cy="434.3" r="4.3" fill="#5e4a66" stroke="#141414" stroke-width="1.3"/>
<circle cx="1214.9" cy="453.0" r="4.3" fill="#6a74a0" stroke="#141414" stroke-width="1.3"/>
<circle cx="1194.1" cy="485.8" r="4.3" fill="#4a5290" stroke="#141414" stroke-width="1.3"/>
<circle cx="1428.0" cy="380.0" r="4.3" fill="#a85a72" stroke="#141414" stroke-width="1.3"/>
<circle cx="1492.5" cy="380.0" r="4.3" fill="#a04858" stroke="#141414" stroke-width="1.3"/>
<rect x="1288.4" y="366.6" width="13.2" height="13.2" fill="#f4f0f8" fill-opacity=".85" stroke="#000" stroke-width="2"/>
<circle cx="1294.5" cy="367.0" r="4.6" fill="#777" stroke="#222" stroke-width="1.2"/>
<circle cx="1295.3" cy="366.2" r="4.6" fill="#8c8c8c" stroke="#222" stroke-width="1.2"/>
<circle cx="1295.7" cy="365.4" r="4.6" fill="#a4a0a4" stroke="#222" stroke-width="1.2"/>
<circle cx="1275" cy="397.9" r="4.9" fill="#000"/>
<clipPath id="ins"><rect x="1508.3" y="77.6" width="190.4" height="146.8"/></clipPath>
<clipPath id="ins2" clip-path="url(#ins)"><polygon points="3280.7,-25.8 1959.2,-829.7 1376.3,778.1"/></clipPath>
<g clip-path="url(#ins)"><rect x="1508" y="77" width="191" height="4" fill="url(#e0)"/>
<rect x="1508" y="81" width="191" height="4" fill="url(#e1)"/>
<rect x="1508" y="85" width="191" height="4" fill="url(#e2)"/>
<rect x="1508" y="89" width="191" height="4" fill="url(#e3)"/>
<rect x="1508" y="93" width="191" height="4" fill="url(#e4)"/>
<rect x="1508" y="97" width="191" height="4" fill="url(#e5)"/>
<rect x="1508" y="101" width="191" height="4" fill="url(#e6)"/>
<rect x="1508" y="105" width="191" height="4" fill="url(#e7)"/>
<rect x="1508" y="109" width="191" height="4" fill="url(#e8)"/>
<rect x="1508" y="113" width="191" height="4" fill="url(#e9)"/>
<rect x="1508" y="117" width="191" height="4" fill="url(#e10)"/>
<rect x="1508" y="121" width="191" height="4" fill="url(#e11)"/>
<rect x="1508" y="125" width="191" height="4" fill="url(#e12)"/>
<rect x="1508" y="129" width="191" height="4" fill="url(#e13)"/>
<rect x="1508" y="133" width="191" height="4" fill="url(#e14)"/>
<rect x="1508" y="137" width="191" height="4" fill="url(#e15)"/>
<rect x="1508" y="141" width="191" height="4" fill="url(#e16)"/>
<rect x="1508" y="145" width="191" height="4" fill="url(#e17)"/>
<rect x="1508" y="149" width="191" height="4" fill="url(#e18)"/>
<rect x="1508" y="153" width="191" height="4" fill="url(#e19)"/>
<rect x="1508" y="157" width="191" height="4" fill="url(#e20)"/>
<rect x="1508" y="161" width="191" height="4" fill="url(#e21)"/>
<rect x="1508" y="165" width="191" height="4" fill="url(#e22)"/>
<rect x="1508" y="169" width="191" height="4" fill="url(#e23)"/>
<rect x="1508" y="173" width="191" height="4" fill="url(#e24)"/>
<rect x="1508" y="177" width="191" height="4" fill="url(#e25)"/>
<rect x="1508" y="181" width="191" height="4" fill="url(#e26)"/>
<rect x="1508" y="185" width="191" height="4" fill="url(#e27)"/>
<rect x="1508" y="189" width="191" height="4" fill="url(#e28)"/>
<rect x="1508" y="193" width="191" height="4" fill="url(#e29)"/>
<rect x="1508" y="197" width="191" height="4" fill="url(#e30)"/>
<rect x="1508" y="201" width="191" height="4" fill="url(#e31)"/>
<rect x="1508" y="205" width="191" height="4" fill="url(#e32)"/>
<rect x="1508" y="209" width="191" height="4" fill="url(#e33)"/>
<rect x="1508" y="213" width="191" height="4" fill="url(#e34)"/>
<rect x="1508" y="217" width="191" height="4" fill="url(#e35)"/>
<rect x="1508" y="221" width="191" height="4" fill="url(#e36)"/></g>
<g clip-path="url(#ins2)"><rect x="1628" y="77" width="71" height="4" fill="url(#f0)"/>
<rect x="1626" y="81" width="73" height="4" fill="url(#f1)"/>
<rect x="1625" y="85" width="74" height="4" fill="url(#f2)"/>
<rect x="1623" y="89" width="76" height="4" fill="url(#f3)"/>
<rect x="1622" y="93" width="77" height="4" fill="url(#f4)"/>
<rect x="1620" y="97" width="79" height="4" fill="url(#f5)"/>
<rect x="1619" y="101" width="80" height="4" fill="url(#f6)"/>
<rect x="1617" y="105" width="82" height="4" fill="url(#f7)"/>
<rect x="1616" y="109" width="83" height="4" fill="url(#f8)"/>
<rect x="1614" y="113" width="85" height="4" fill="url(#f9)"/>
<rect x="1613" y="117" width="86" height="4" fill="url(#f10)"/>
<rect x="1612" y="121" width="87" height="4" fill="url(#f11)"/>
<rect x="1610" y="125" width="89" height="4" fill="url(#f12)"/>
<rect x="1609" y="129" width="90" height="4" fill="url(#f13)"/>
<rect x="1607" y="133" width="92" height="4" fill="url(#f14)"/>
<rect x="1606" y="137" width="93" height="4" fill="url(#f15)"/>
<rect x="1604" y="141" width="95" height="4" fill="url(#f16)"/>
<rect x="1603" y="145" width="96" height="4" fill="url(#f17)"/>
<rect x="1601" y="149" width="98" height="4" fill="url(#f18)"/>
<rect x="1600" y="153" width="99" height="4" fill="url(#f19)"/>
<rect x="1599" y="157" width="100" height="4" fill="url(#f20)"/>
<rect x="1597" y="161" width="102" height="4" fill="url(#f21)"/>
<rect x="1596" y="165" width="103" height="4" fill="url(#f22)"/>
<rect x="1594" y="169" width="105" height="4" fill="url(#f23)"/>
<rect x="1593" y="173" width="106" height="4" fill="url(#f24)"/>
<rect x="1591" y="177" width="108" height="4" fill="url(#f25)"/>
<rect x="1590" y="181" width="109" height="4" fill="url(#f26)"/>
<rect x="1588" y="185" width="111" height="4" fill="url(#f27)"/>
<rect x="1587" y="189" width="112" height="4" fill="url(#f28)"/>
<rect x="1585" y="193" width="114" height="4" fill="url(#f29)"/>
<rect x="1584" y="197" width="115" height="4" fill="url(#f30)"/>
<rect x="1583" y="201" width="116" height="4" fill="url(#f31)"/>
<rect x="1581" y="205" width="118" height="4" fill="url(#f32)"/>
<rect x="1580" y="209" width="119" height="4" fill="url(#f33)"/>
<rect x="1578" y="213" width="121" height="4" fill="url(#f34)"/>
<rect x="1577" y="217" width="122" height="4" fill="url(#f35)"/>
<rect x="1575" y="221" width="124" height="4" fill="url(#f36)"/></g>
<rect x="1508.3" y="77.6" width="190.4" height="146.8" fill="none" stroke="#8e8e8e" stroke-width="1.4"/>
<circle cx="1588" cy="100.9" r="4.4" fill="#0d8ca4" stroke="#0a1840" stroke-width="1.2"/>
<rect x="1596.1" y="143.1" width="14.4" height="14.4" fill="none" stroke="#fff" stroke-width="1.5"/>
<rect x="1421" y="530" width="281.7" height="27.3" fill="#333333"/>
<text x="1452.0" y="551.6" font-size="19.6" fill="#f2f2f2" textLength="219.0" lengthAdjust="spacingAndGlyphs" stroke="#f2f2f2" stroke-width=".45">RGB Triplet: 0, 133, 163</text>
<rect x="1051.6" y="69.9" width="654.0" height="500.4" fill="none" stroke="#9c9c9c" stroke-width="1.3"/>
<line x1="1051.6" y1="570.3" x2="1051.6" y2="575.9" stroke="#dedede" stroke-width="1.5"/>
<text x="1051.6" y="591.9" font-size="15.6" fill="#d2d2d2" text-anchor="middle">0</text>
<line x1="1046.0" y1="570.3" x2="1051.6" y2="570.3" stroke="#dedede" stroke-width="1.35"/>
<text x="1046.2" y="576.5" font-size="15.6" fill="#d2d2d2" text-anchor="end">0</text>
<line x1="1129.3" y1="570.3" x2="1129.3" y2="575.9" stroke="#dedede" stroke-width="1.5"/>
<text x="1129.3" y="591.9" font-size="15.6" fill="#d2d2d2" text-anchor="middle" textLength="22.6" lengthAdjust="spacingAndGlyphs">0,1</text>
<line x1="1046.0" y1="511.4" x2="1051.6" y2="511.4" stroke="#dedede" stroke-width="1.35"/>
<text x="1046.2" y="517.1" font-size="15.6" fill="#d2d2d2" text-anchor="end" textLength="22.6" lengthAdjust="spacingAndGlyphs">0,1</text>
<line x1="1207.1" y1="570.3" x2="1207.1" y2="575.9" stroke="#dedede" stroke-width="1.5"/>
<text x="1207.1" y="591.9" font-size="15.6" fill="#d2d2d2" text-anchor="middle" textLength="22.6" lengthAdjust="spacingAndGlyphs">0,2</text>
<line x1="1046.0" y1="452.0" x2="1051.6" y2="452.0" stroke="#dedede" stroke-width="1.35"/>
<text x="1046.2" y="457.7" font-size="15.6" fill="#d2d2d2" text-anchor="end" textLength="22.6" lengthAdjust="spacingAndGlyphs">0,2</text>
<line x1="1284.8" y1="570.3" x2="1284.8" y2="575.9" stroke="#dedede" stroke-width="1.5"/>
<text x="1284.8" y="591.9" font-size="15.6" fill="#d2d2d2" text-anchor="middle" textLength="22.6" lengthAdjust="spacingAndGlyphs">0,3</text>
<line x1="1046.0" y1="392.7" x2="1051.6" y2="392.7" stroke="#dedede" stroke-width="1.35"/>
<text x="1046.2" y="398.4" font-size="15.6" fill="#d2d2d2" text-anchor="end" textLength="22.6" lengthAdjust="spacingAndGlyphs">0,3</text>
<line x1="1362.5" y1="570.3" x2="1362.5" y2="575.9" stroke="#dedede" stroke-width="1.5"/>
<text x="1362.5" y="591.9" font-size="15.6" fill="#d2d2d2" text-anchor="middle" textLength="22.6" lengthAdjust="spacingAndGlyphs">0,4</text>
<line x1="1046.0" y1="333.3" x2="1051.6" y2="333.3" stroke="#dedede" stroke-width="1.35"/>
<text x="1046.2" y="339.0" font-size="15.6" fill="#d2d2d2" text-anchor="end" textLength="22.6" lengthAdjust="spacingAndGlyphs">0,4</text>
<line x1="1440.2" y1="570.3" x2="1440.2" y2="575.9" stroke="#dedede" stroke-width="1.5"/>
<text x="1440.2" y="591.9" font-size="15.6" fill="#d2d2d2" text-anchor="middle" textLength="22.6" lengthAdjust="spacingAndGlyphs">0,5</text>
<line x1="1046.0" y1="273.9" x2="1051.6" y2="273.9" stroke="#dedede" stroke-width="1.35"/>
<text x="1046.2" y="279.6" font-size="15.6" fill="#d2d2d2" text-anchor="end" textLength="22.6" lengthAdjust="spacingAndGlyphs">0,5</text>
<line x1="1518.0" y1="570.3" x2="1518.0" y2="575.9" stroke="#dedede" stroke-width="1.5"/>
<text x="1518.0" y="591.9" font-size="15.6" fill="#d2d2d2" text-anchor="middle" textLength="22.6" lengthAdjust="spacingAndGlyphs">0,6</text>
<line x1="1046.0" y1="214.5" x2="1051.6" y2="214.5" stroke="#dedede" stroke-width="1.35"/>
<text x="1046.2" y="220.2" font-size="15.6" fill="#d2d2d2" text-anchor="end" textLength="22.6" lengthAdjust="spacingAndGlyphs">0,6</text>
<line x1="1595.7" y1="570.3" x2="1595.7" y2="575.9" stroke="#dedede" stroke-width="1.5"/>
<text x="1595.7" y="591.9" font-size="15.6" fill="#d2d2d2" text-anchor="middle" textLength="22.6" lengthAdjust="spacingAndGlyphs">0,7</text>
<line x1="1046.0" y1="155.2" x2="1051.6" y2="155.2" stroke="#dedede" stroke-width="1.35"/>
<text x="1046.2" y="160.9" font-size="15.6" fill="#d2d2d2" text-anchor="end" textLength="22.6" lengthAdjust="spacingAndGlyphs">0,7</text>
<line x1="1673.4" y1="570.3" x2="1673.4" y2="575.9" stroke="#dedede" stroke-width="1.5"/>
<text x="1673.4" y="591.9" font-size="15.6" fill="#d2d2d2" text-anchor="middle" textLength="22.6" lengthAdjust="spacingAndGlyphs">0,8</text>
<line x1="1046.0" y1="95.8" x2="1051.6" y2="95.8" stroke="#dedede" stroke-width="1.35"/>
<text x="1046.2" y="101.5" font-size="15.6" fill="#d2d2d2" text-anchor="end" textLength="22.6" lengthAdjust="spacingAndGlyphs">0,8</text>
<text x="11.8" y="667.6" font-size="27" fill="#f2f2f2" textLength="227.6" lengthAdjust="spacingAndGlyphs" stroke="#f2f2f2" stroke-width=".45">Current Reading</text>
<text x="12.9" y="710.5" font-size="24" fill="#f2f2f2" textLength="104.6" lengthAdjust="spacingAndGlyphs" stroke="#f2f2f2" stroke-width=".45">x: 0,2041</text>
<text x="12.9" y="752.5" font-size="24" fill="#f2f2f2" textLength="105.4" lengthAdjust="spacingAndGlyphs" stroke="#f2f2f2" stroke-width=".45">y: 0,2863</text>
<text x="12.9" y="794.8" font-size="24" fill="#f2f2f2" textLength="113.6" lengthAdjust="spacingAndGlyphs" stroke="#f2f2f2" stroke-width=".45">fL: 21,245</text>
<text x="12.9" y="836.9" font-size="24" fill="#f2f2f2" textLength="163.3" lengthAdjust="spacingAndGlyphs" stroke="#f2f2f2" stroke-width=".45">cd/m²: 72,791</text>
<rect x="328.8" y="622.0" width="1329.3" height="28.9" fill="url(#th)"/>
<rect x="328.8" y="622.0" width="10.3" height="28.9" fill="#000"/>
<rect x="328.8" y="650.9" width="1329.3" height="26.70" fill="#404040"/>
<rect x="328.8" y="650.9" width="10.3" height="26.70" fill="url(#tc)"/>
<rect x="328.8" y="677.5" width="1329.3" height="26.70" fill="#808080"/>
<rect x="328.8" y="677.5" width="10.3" height="26.70" fill="url(#tc)"/>
<rect x="328.8" y="704.1" width="1329.3" height="26.70" fill="#404040"/>
<rect x="328.8" y="704.1" width="10.3" height="26.70" fill="url(#tc)"/>
<rect x="328.8" y="730.7" width="1329.3" height="26.70" fill="#808080"/>
<rect x="328.8" y="730.7" width="10.3" height="26.70" fill="url(#tc)"/>
<rect x="328.8" y="757.3" width="1329.3" height="26.70" fill="#404040"/>
<rect x="328.8" y="757.3" width="10.3" height="26.70" fill="url(#tc)"/>
<rect x="328.8" y="783.9" width="1329.3" height="26.70" fill="#808080"/>
<rect x="328.8" y="783.9" width="10.3" height="26.70" fill="url(#tc)"/>
<rect x="328.8" y="810.5" width="1329.3" height="26.70" fill="#404040"/>
<rect x="328.8" y="810.5" width="10.3" height="26.70" fill="url(#tc)"/>
<g font-size="16.3" fill="#f0f0f0"><text x="342.6" y="671.1" textLength="42.0" lengthAdjust="spacingAndGlyphs">x: CIE31</text><g transform="scale(0.723,1)"><text x="591.8" y="671.1">0,31</text><text x="652.1" y="671.1">0,31</text><text x="715.2" y="671.1">0,31</text><text x="778.3" y="671.1">0,31</text><text x="841.4" y="671.1">0,32</text><text x="905.0" y="671.1">0,29</text><text x="951.0" y="671.1">0,42</text><text x="1025.6" y="671.1">0,39</text><text x="1101.8" y="671.1">0,25</text><text x="1169.8" y="671.1">0,34</text><text x="1228.5" y="671.1">0,27</text><text x="1321.2" y="671.1">0,26</text><text x="1419.8" y="671.1">0,53</text><text x="1480.6" y="671.1">0,21</text><text x="1582.0" y="671.1">0,48</text><text x="1691.7" y="671.1">0,29</text><text x="1746.6" y="671.1">0,38</text><text x="1848.5" y="671.1">0,48</text><text x="1958.8" y="671.1">0,18</text><text x="2009.8" y="671.1">0,30</text><text x="2062.0" y="671.1">0,57</text><text x="2113.6" y="671.1">0,45</text><text x="2174.4" y="671.1">0,39</text><text x="2246.7" y="671.1">0,20</text></g><text x="342.6" y="697.7" textLength="42.4" lengthAdjust="spacingAndGlyphs">y: CIE31</text><g transform="scale(0.723,1)"><text x="591.8" y="697.7">0,34</text><text x="652.1" y="697.7">0,34</text><text x="715.2" y="697.7">0,34</text><text x="778.3" y="697.7">0,34</text><text x="841.4" y="697.7">0,34</text><text x="905.0" y="697.7">0,29</text><text x="951.0" y="697.7">0,38</text><text x="1025.6" y="697.7">0,37</text><text x="1101.8" y="697.7">0,28</text><text x="1169.8" y="697.7">0,45</text><text x="1228.5" y="697.7">0,26</text><text x="1321.2" y="697.7">0,38</text><text x="1419.8" y="697.7">0,41</text><text x="1480.6" y="697.7">0,20</text><text x="1582.0" y="697.7">0,32</text><text x="1691.7" y="697.7">0,23</text><text x="1746.6" y="697.7">0,51</text><text x="1848.5" y="697.7">0,44</text><text x="1958.8" y="697.7">0,14</text><text x="2009.8" y="697.7">0,52</text><text x="2062.0" y="697.7">0,32</text><text x="2113.6" y="697.7">0,48</text><text x="2174.4" y="697.7">0,25</text><text x="2246.7" y="697.7">0,29</text></g><text x="342.6" y="724.3" textLength="6.6" lengthAdjust="spacingAndGlyphs">Y</text><g transform="scale(0.723,1)"><text x="591.8" y="724.3">399,67</text><text x="652.1" y="724.3">310,70</text><text x="715.2" y="724.3">247,30</text><text x="778.3" y="724.3">188,95</text><text x="841.4" y="724.3">129,40</text><text x="905.0" y="724.3">0,34</text><text x="951.0" y="724.3">35,02</text><text x="1025.6" y="724.3">131,53</text><text x="1101.8" y="724.3">68,61</text><text x="1169.8" y="724.3">46,56</text><text x="1228.5" y="724.3">86,50</text><text x="1321.2" y="724.3">161,60</text><text x="1419.8" y="724.3">105,50</text><text x="1480.6" y="724.3">41,57</text><text x="1582.0" y="724.3">67,82</text><text x="1691.7" y="724.3">22,18</text><text x="1746.6" y="724.3">164,43</text><text x="1848.5" y="724.3">162,00</text><text x="1958.8" y="724.3">20,77</text><text x="2009.8" y="724.3">86,15</text><text x="2062.0" y="724.3">41,58</text><text x="2113.6" y="724.3">228,67</text><text x="2174.4" y="724.3">68,38</text><text x="2246.7" y="724.3">72,79</text></g><text x="342.6" y="750.9" textLength="76.5" lengthAdjust="spacingAndGlyphs">Target x:CIE31</text><g transform="scale(0.723,1)"><text x="591.8" y="750.9">0,31</text><text x="652.1" y="750.9">0,31</text><text x="715.2" y="750.9">0,31</text><text x="778.3" y="750.9">0,31</text><text x="841.4" y="750.9">0,31</text><text x="905.0" y="750.9">0,31</text><text x="951.0" y="750.9">0,40</text><text x="1025.6" y="750.9">0,38</text><text x="1101.8" y="750.9">0,25</text><text x="1169.8" y="750.9">0,34</text><text x="1228.5" y="750.9">0,27</text><text x="1321.2" y="750.9">0,26</text><text x="1419.8" y="750.9">0,51</text><text x="1480.6" y="750.9">0,22</text><text x="1582.0" y="750.9">0,46</text><text x="1691.7" y="750.9">0,29</text><text x="1746.6" y="750.9">0,38</text><text x="1848.5" y="750.9">0,47</text><text x="1958.8" y="750.9">0,19</text><text x="2009.8" y="750.9">0,31</text><text x="2062.0" y="750.9">0,54</text><text x="2113.6" y="750.9">0,45</text><text x="2174.4" y="750.9">0,37</text><text x="2246.7" y="750.9">0,21</text></g><text x="342.6" y="777.5" textLength="76.5" lengthAdjust="spacingAndGlyphs">Target y:CIE31</text><g transform="scale(0.723,1)"><text x="591.8" y="777.5">0,33</text><text x="652.1" y="777.5">0,33</text><text x="715.2" y="777.5">0,33</text><text x="778.3" y="777.5">0,33</text><text x="841.4" y="777.5">0,33</text><text x="905.0" y="777.5">0,33</text><text x="951.0" y="777.5">0,36</text><text x="1025.6" y="777.5">0,36</text><text x="1101.8" y="777.5">0,27</text><text x="1169.8" y="777.5">0,43</text><text x="1228.5" y="777.5">0,25</text><text x="1321.2" y="777.5">0,36</text><text x="1419.8" y="777.5">0,41</text><text x="1480.6" y="777.5">0,19</text><text x="1582.0" y="777.5">0,31</text><text x="1691.7" y="777.5">0,22</text><text x="1746.6" y="777.5">0,49</text><text x="1848.5" y="777.5">0,44</text><text x="1958.8" y="777.5">0,14</text><text x="2009.8" y="777.5">0,49</text><text x="2062.0" y="777.5">0,32</text><text x="2113.6" y="777.5">0,47</text><text x="2174.4" y="777.5">0,25</text><text x="2246.7" y="777.5">0,27</text></g><text x="342.6" y="804.1" textLength="44.0" lengthAdjust="spacingAndGlyphs">Target Y</text><g transform="scale(0.723,1)"><text x="591.8" y="804.1">399,67</text><text x="652.1" y="804.1">316,26</text><text x="715.2" y="804.1">254,83</text><text x="778.3" y="804.1">196,25</text><text x="841.4" y="804.1">136,65</text><text x="905.0" y="804.1">0,00</text><text x="951.0" y="804.1">40,26</text><text x="1025.6" y="804.1">139,47</text><text x="1101.8" y="804.1">74,73</text><text x="1169.8" y="804.1">52,09</text><text x="1228.5" y="804.1">93,20</text><text x="1321.2" y="804.1">167,36</text><text x="1419.8" y="804.1">113,30</text><text x="1480.6" y="804.1">46,98</text><text x="1582.0" y="804.1">74,64</text><text x="1691.7" y="804.1">26,68</text><text x="1746.6" y="804.1">170,89</text><text x="1848.5" y="804.1">169,91</text><text x="1958.8" y="804.1">24,95</text><text x="2009.8" y="804.1">91,82</text><text x="2062.0" y="804.1">46,61</text><text x="2113.6" y="804.1">235,66</text><text x="2174.4" y="804.1">75,24</text><text x="2246.7" y="804.1">77,61</text></g><text x="342.6" y="830.7" textLength="44.8" lengthAdjust="spacingAndGlyphs">ΔE 2000</text><g transform="scale(0.723,1)"><text x="591.8" y="830.7">7,77</text><text x="652.1" y="830.7">6,84</text><text x="715.2" y="830.7">6,55</text><text x="778.3" y="830.7">6,25</text><text x="841.4" y="830.7">5,97</text><text x="905.0" y="830.7">0,69</text><text x="951.0" y="830.7">2,98</text><text x="1025.6" y="830.7">3,54</text><text x="1101.8" y="830.7">5,47</text><text x="1169.8" y="830.7">2,74</text><text x="1228.5" y="830.7">3,15</text><text x="1321.2" y="830.7">3,69</text><text x="1419.8" y="830.7">2,01</text><text x="1480.6" y="830.7">3,14</text><text x="1582.0" y="830.7">3,00</text><text x="1691.7" y="830.7">2,57</text><text x="1746.6" y="830.7">1,58</text><text x="1848.5" y="830.7">1,52</text><text x="1958.8" y="830.7">2,87</text><text x="2009.8" y="830.7">2,26</text><text x="2062.0" y="830.7">2,66</text><text x="2113.6" y="830.7">1,07</text><text x="2174.4" y="830.7">2,61</text><text x="2246.7" y="830.7">4,82</text></g></g>
<g font-size="15.4" fill="#fff" stroke="#fff" stroke-width=".15"><text x="427.9" y="641.6" textLength="30.9" lengthAdjust="spacingAndGlyphs">White</text><text x="471.5" y="641.6" textLength="40.0" lengthAdjust="spacingAndGlyphs">Gray 80</text><text x="517.1" y="641.6" textLength="39.7" lengthAdjust="spacingAndGlyphs">Gray 65</text><text x="562.7" y="641.6" textLength="39.7" lengthAdjust="spacingAndGlyphs">Gray 50</text><text x="608.3" y="641.6" textLength="39.7" lengthAdjust="spacingAndGlyphs">Gray 35</text><text x="654.3" y="641.6" textLength="26.6" lengthAdjust="spacingAndGlyphs">Black</text><text x="687.6" y="641.6" textLength="47.6" lengthAdjust="spacingAndGlyphs">Dark Skin</text><text x="741.5" y="641.6" textLength="48.4" lengthAdjust="spacingAndGlyphs">Light Skin</text><text x="796.6" y="641.6" textLength="42.8" lengthAdjust="spacingAndGlyphs">Blue Sky</text><text x="845.8" y="641.6" textLength="36.1" lengthAdjust="spacingAndGlyphs">Foliage</text><text x="888.2" y="641.6" textLength="60.3" lengthAdjust="spacingAndGlyphs">Blue Flower</text><text x="955.2" y="641.6" textLength="64.5" lengthAdjust="spacingAndGlyphs">Bluish Green</text><text x="1026.5" y="641.6" textLength="36.9" lengthAdjust="spacingAndGlyphs">Orange</text><text x="1070.5" y="641.6" textLength="67.0" lengthAdjust="spacingAndGlyphs">Purplish Blue</text><text x="1143.8" y="641.6" textLength="73.0" lengthAdjust="spacingAndGlyphs">Moderate Red</text><text x="1223.1" y="641.6" textLength="33.3" lengthAdjust="spacingAndGlyphs">Purple</text><text x="1262.8" y="641.6" textLength="67.0" lengthAdjust="spacingAndGlyphs">Yellow Green</text><text x="1336.5" y="641.6" textLength="73.0" lengthAdjust="spacingAndGlyphs">Orange Yellow</text><text x="1416.2" y="641.6" textLength="22.6" lengthAdjust="spacingAndGlyphs">Blue</text><text x="1453.1" y="641.6" textLength="31.3" lengthAdjust="spacingAndGlyphs">Green</text><text x="1490.8" y="641.6" textLength="19.4" lengthAdjust="spacingAndGlyphs">Red</text><text x="1528.1" y="641.6" textLength="32.9" lengthAdjust="spacingAndGlyphs">Yellow</text><text x="1572.1" y="641.6" textLength="45.6" lengthAdjust="spacingAndGlyphs">Magenta</text><text x="1624.4" y="641.6" textLength="25.8" lengthAdjust="spacingAndGlyphs">Cyan</text></g>
</svg>
</body></html>
